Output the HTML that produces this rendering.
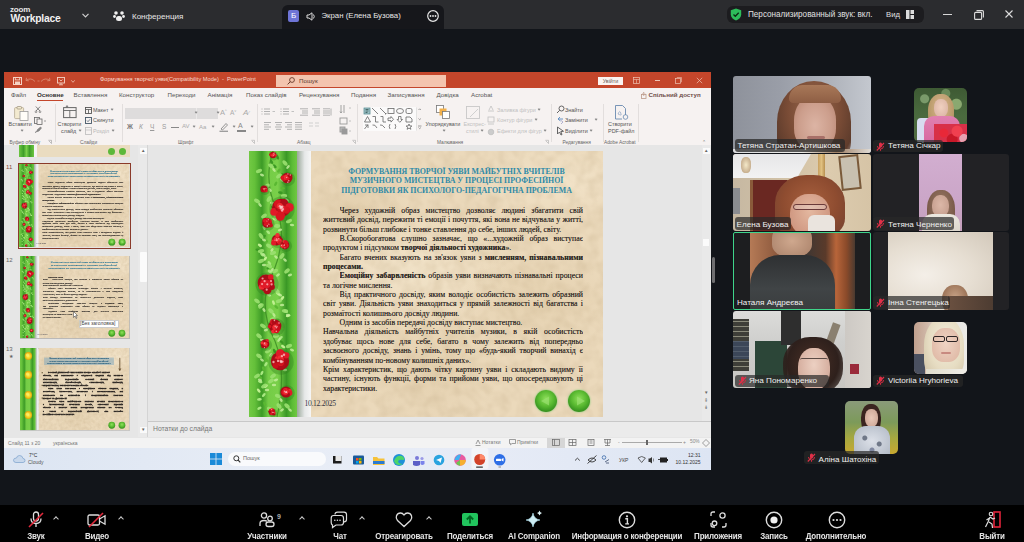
<!DOCTYPE html>
<html><head><meta charset="utf-8">
<style>
*{margin:0;padding:0;box-sizing:border-box}
html,body{width:1024px;height:542px;overflow:hidden;background:#12151a;font-family:"Liberation Sans",sans-serif;position:relative}
.a{position:absolute}
.t{position:absolute;white-space:nowrap;line-height:1}
svg{position:absolute;overflow:visible}
/* zoom title bar */
#tb{left:0;top:0;width:1024px;height:29px;background:#2b2c2f}
#tab{left:282px;top:5px;width:162px;height:24px;background:#16171b;border-radius:6px 6px 0 0}
#bot{left:0;top:505px;width:1024px;height:37px;background:#000}
.bl{position:absolute;top:531.5px;width:160px;text-align:center;color:#e6e6e6;font-size:9px;letter-spacing:-0.2px;font-weight:bold;transform:scaleX(0.885);white-space:nowrap;line-height:1}
.car{position:absolute;top:517px;width:4px;height:4px;border-left:1.3px solid #ccc;border-top:1.3px solid #ccc;transform:rotate(45deg)}
.nm{font-size:8.1px;color:#f0f0f0}
.mic{position:absolute;width:9px;height:10px}
.mic::before{content:"";position:absolute;left:3px;top:0;width:3.5px;height:6px;border-radius:2px;background:#e0304a}
.mic::after{content:"";position:absolute;left:0;top:4px;width:9px;height:1.3px;background:#e0304a;transform:rotate(-55deg)}
.tab{position:absolute;top:92.3px;font-size:6.2px;color:#555;white-space:nowrap;line-height:1}
.rl{position:absolute;font-size:5.45px;color:#555;white-space:nowrap;line-height:1}
.gl{position:absolute;top:141.3px;font-size:4.8px;color:#666;white-space:nowrap;line-height:1}
.cv{display:inline-block;width:2.2px;height:2.2px;border-right:0.6px solid #8a8a8a;border-bottom:0.6px solid #8a8a8a;transform:rotate(45deg);margin-left:2.5px;vertical-align:1.5px}
.sep{position:absolute;top:104px;width:1px;height:38px;background:#e2dedd}
.slide{position:absolute;width:354px;height:266px;overflow:hidden}
.thumb{position:absolute;width:354px;height:266px;overflow:hidden;transform-origin:0 0}
.ttl1{position:absolute;left:61px;width:293px;text-align:center;font-family:"Liberation Serif",serif;font-weight:bold;font-size:7.87px;color:#2e8aa8;white-space:nowrap;line-height:1;padding-left:0}
.bl1{position:absolute;font-family:"Liberation Serif",serif;font-size:7.8px;color:#2a2522;text-shadow:0 0 0.5px rgba(40,35,30,0.6);white-space:nowrap;line-height:1}
.thumb .bl1{-webkit-text-stroke:0.35px #3a3532}
.thumb .ttl1{-webkit-text-stroke:0.4px #2a6a8a}
.t13 .bl1{-webkit-text-stroke:0.9px #2a2522}
.bl1.j{text-align:justify;text-align-last:justify;white-space:normal;height:9px;overflow:hidden}
</style></head><body>
<!-- ============ ZOOM TITLE BAR ============ -->
<div id="tb" class="a"></div>
<div class="t" style="left:10px;top:6px;font-size:8px;color:#e8e8e8;font-weight:bold;letter-spacing:-0.2px">zoom</div>
<div class="t" style="left:10.5px;top:13.5px;font-size:10.3px;color:#f2f2f2;font-weight:bold;letter-spacing:-0.2px">Workplace</div>
<svg style="left:82px;top:13px" width="7" height="5"><path d="M0.5 0.8 L3.5 3.8 L6.5 0.8" stroke="#cfcfcf" stroke-width="1.2" fill="none"/></svg>
<svg style="left:113px;top:10px" width="12" height="12"><circle cx="3" cy="3" r="1.8" fill="#f0f0f0"/><circle cx="9" cy="3" r="1.8" fill="#f0f0f0"/><circle cx="1.5" cy="6.5" r="1.4" fill="#f0f0f0"/><circle cx="10.5" cy="6.5" r="1.4" fill="#f0f0f0"/><rect x="3" y="6" width="6" height="5" rx="2.5" fill="#f0f0f0"/></svg>
<div class="t" style="left:132px;top:12.7px;font-size:8px;color:#e6e6e6">Конференция</div>

<div id="tab" class="a"></div>
<div class="a" style="left:288px;top:10px;width:11px;height:12px;background:#6e74d6;border-radius:2px;color:#fff;font-size:8px;text-align:center;line-height:12px">Б</div>
<svg style="left:306px;top:12px" width="10" height="9"><path d="M1 3 H3 L6 0.8 V8.2 L3 6 H1 Z" stroke="#ddd" stroke-width="1" fill="none"/><path d="M7.5 2.5 Q9 4.5 7.5 6.5" stroke="#ddd" stroke-width="1" fill="none"/></svg>
<div class="t" style="left:321.5px;top:12px;font-size:7.8px;color:#e6e6e6">Экран (Елена Бузова)</div>
<svg style="left:427px;top:10px" width="12" height="12"><circle cx="6" cy="6" r="5.3" stroke="#e6e6e6" stroke-width="1.2" fill="none"/><circle cx="3.5" cy="6" r="0.9" fill="#e6e6e6"/><circle cx="6" cy="6" r="0.9" fill="#e6e6e6"/><circle cx="8.5" cy="6" r="0.9" fill="#e6e6e6"/></svg>

<div class="a" style="left:727px;top:6px;width:197px;height:17px;background:#1c1c1f;border-radius:6px"></div>
<svg style="left:730px;top:8px" width="12" height="13"><path d="M6 0.5 L11.2 2.3 V6.5 C11.2 9.5 8.8 11.5 6 12.5 C3.2 11.5 0.8 9.5 0.8 6.5 V2.3 Z" fill="#2dbd5a"/><path d="M3.5 6.5 L5.3 8.3 L8.7 4.7" stroke="#0c2a14" stroke-width="1.3" fill="none"/></svg>
<div class="t" style="left:748px;top:11px;font-size:8.15px;color:#e0e0e0">Персонализированный звук: вкл.</div>
<div class="t" style="left:886px;top:11px;font-size:7.7px;color:#e0e0e0">Вид</div>
<svg style="left:906px;top:10px" width="8" height="9"><rect x="0" y="0" width="3.5" height="9" fill="#ddd"/><rect x="4.5" y="0" width="3.5" height="4" fill="#ddd"/><rect x="4.5" y="5" width="3.5" height="4" fill="#ddd"/></svg>
<div class="a" style="left:943px;top:14px;width:9px;height:1px;background:#d8d8d8"></div>
<svg style="left:974px;top:10px" width="10" height="10"><rect x="0.6" y="2.4" width="7" height="7" rx="1" stroke="#ddd" stroke-width="1.1" fill="none"/><path d="M2.5 0.6 H8.4 Q9.4 0.6 9.4 1.6 V7.5" stroke="#ddd" stroke-width="1.1" fill="none"/></svg>
<svg style="left:1005px;top:10px" width="8" height="8"><path d="M0.5 0.5 L7.5 7.5 M7.5 0.5 L0.5 7.5" stroke="#ddd" stroke-width="1.1"/></svg>

<!-- ============ POWERPOINT ============ -->
<div class="a" style="left:4px;top:72px;width:707px;height:398px;background:#e6e6e6;overflow:hidden"></div>
<!-- title bar -->
<div class="a" style="left:4px;top:72px;width:707px;height:16px;background:#c4462b"></div>
<svg style="left:13px;top:77px" width="9" height="8"><rect x="0.5" y="0.5" width="8" height="7" fill="none" stroke="#f6d2c4" stroke-width="1"/><rect x="2.3" y="0.5" width="4.4" height="2.4" fill="none" stroke="#f6d2c4" stroke-width="0.9"/><rect x="2" y="4.5" width="5" height="3" fill="#f6d2c4"/></svg>
<svg style="left:25px;top:77px" width="26" height="8"><path d="M1 3.5 Q6 0 10 4.5 M1 3.5 L1.5 0.8 M1 3.5 L3.8 3.8" stroke="#d98a72" stroke-width="0.9" fill="none"/><path d="M12.5 4 H14.5" stroke="#d98a72" stroke-width="0.8"/><path d="M25 3.5 Q20 0 16 4.5 M25 3.5 L24.5 0.8 M25 3.5 L22.2 3.8" stroke="#d98a72" stroke-width="0.9" fill="none"/></svg>
<svg style="left:57px;top:77px" width="8" height="8"><rect x="0.5" y="0.5" width="7" height="5.5" fill="none" stroke="#f6d2c4" stroke-width="0.9"/><path d="M2.5 2.5 L4 4 L5.5 2.5 M4 6 V7.8 M2 7.8 H6" stroke="#f6d2c4" stroke-width="0.8" fill="none"/></svg>
<svg style="left:71px;top:80px" width="4" height="3"><path d="M0.3 0.3 L2 2.3 L3.7 0.3" stroke="#f0c0ae" stroke-width="0.8" fill="none"/></svg>
<div class="t" id="ttl" style="left:100px;top:77.3px;font-size:5.65px;color:#f8dbcf">Формування творчої уяви(Compatibility Mode)&nbsp; - &nbsp;PowerPoint</div>
<div class="a" style="left:276px;top:75px;width:170px;height:12px;background:#f4c4ae"></div>
<svg style="left:287px;top:77px" width="8" height="8"><circle cx="5" cy="3" r="2.4" fill="none" stroke="#6a3a2a" stroke-width="0.9"/><path d="M3.3 4.7 L0.6 7.4" stroke="#6a3a2a" stroke-width="1"/></svg>
<div class="t" style="left:299px;top:78px;font-size:6.2px;color:#5a3a30">Пошук</div>
<div class="a" style="left:598px;top:77px;width:25px;height:8px;background:#fbf4f1"></div>
<div class="t" style="left:598px;top:78.5px;width:25px;text-align:center;font-size:5.4px;color:#6a5a55">Увійти</div>
<svg style="left:633px;top:77px" width="7" height="7"><rect x="0.5" y="0.5" width="6" height="6" fill="none" stroke="#efc4b4" stroke-width="0.7"/><path d="M0.5 2.5 H6.5 M3.5 2.5 V6.5" stroke="#efc4b4" stroke-width="0.6"/></svg>
<div class="a" style="left:655px;top:80px;width:5px;height:0.8px;background:#efc4b4"></div>
<svg style="left:675px;top:77px" width="7" height="7"><rect x="0.5" y="1.5" width="5" height="5" fill="none" stroke="#efc4b4" stroke-width="0.7"/><path d="M1.8 0.5 H6.5 V5.2" stroke="#efc4b4" stroke-width="0.6" fill="none"/></svg>
<svg style="left:696px;top:77px" width="7" height="7"><path d="M0.8 0.8 L6.2 6.2 M6.2 0.8 L0.8 6.2" stroke="#efc4b4" stroke-width="0.7"/></svg>
<!-- tab row + ribbon -->
<div class="a" style="left:4px;top:88px;width:707px;height:57px;background:#f6f2f1"></div>
<div class="tab" style="left:11px">Файл</div>
<div class="tab" style="left:37px;font-weight:bold;color:#333">Основне</div>
<div class="a" style="left:37px;top:100px;width:26px;height:1.3px;background:#c4462b"></div>
<div class="tab" style="left:73.5px">Вставлення</div>
<div class="tab" style="left:119px">Конструктор</div>
<div class="tab" style="left:167.5px">Переходи</div>
<div class="tab" style="left:207.5px">Анімація</div>
<div class="tab" style="left:246px">Показ слайдів</div>
<div class="tab" style="left:299px">Рецензування</div>
<div class="tab" style="left:351px">Подання</div>
<div class="tab" style="left:387.5px">Записування</div>
<div class="tab" style="left:436.5px">Довідка</div>
<div class="tab" style="left:471px">Acrobat</div>
<svg style="left:641px;top:92px" width="6" height="7"><rect x="0.5" y="2.5" width="4.5" height="4" fill="none" stroke="#b98" stroke-width="0.8"/><path d="M2.7 4 V0.5 M1.5 1.6 L2.7 0.4 L3.9 1.6" stroke="#b98" stroke-width="0.7" fill="none"/></svg>
<div class="tab" style="left:648.5px;font-weight:bold;color:#6e4e4a">Спільний доступ</div>
<!-- ribbon body -->
<!-- clipboard group -->
<svg style="left:14px;top:106px" width="15" height="15"><rect x="0.6" y="1.6" width="9" height="11" rx="1" fill="#f3ead0" stroke="#b5a890" stroke-width="0.8"/><rect x="3" y="0.5" width="4.5" height="2.5" rx="0.8" fill="#f3ead0" stroke="#9a8e78" stroke-width="0.7"/><rect x="6" y="5.5" width="8" height="9" fill="#fffdf8" stroke="#9a9a9a" stroke-width="0.8"/></svg>
<div class="rl" style="left:8.5px;top:121.5px">Вставити</div>
<div class="rl" style="left:18.5px;top:128.5px"><i class="cv"></i></div>
<svg style="left:35px;top:106px" width="6" height="7"><path d="M0.8 0.5 L5 5 M5.2 0.5 L1 5" stroke="#666" stroke-width="0.8"/><circle cx="1" cy="5.8" r="0.9" fill="none" stroke="#666" stroke-width="0.6"/><circle cx="5" cy="5.8" r="0.9" fill="none" stroke="#666" stroke-width="0.6"/></svg>
<svg style="left:34px;top:117px" width="13" height="8"><rect x="0.5" y="0.5" width="5" height="6" fill="none" stroke="#666" stroke-width="0.8"/><rect x="3" y="2" width="5" height="5.5" fill="#f6f2f1" stroke="#666" stroke-width="0.8"/><path d="M10 4 H12" stroke="#777" stroke-width="0.7"/></svg>
<svg style="left:34px;top:126px" width="8" height="7"><path d="M1 6.5 Q3 6 3.5 3.5 L6.5 1 L7.5 2 L5 5 Q2.5 5.5 1 6.5Z" fill="#8a8a8a" stroke="#666" stroke-width="0.5"/></svg>
<div class="gl" style="left:9.5px">Буфер обміну</div>
<svg style="left:48px;top:140px" width="4" height="4"><path d="M0.3 0.3 H3.5 V3.5 M1 1 L3.5 3.5" stroke="#999" stroke-width="0.6" fill="none"/></svg>
<div class="sep" style="left:54.5px"></div>
<!-- slides group -->
<svg style="left:63px;top:105px" width="14" height="13"><rect x="0.6" y="2.6" width="12.5" height="10" fill="none" stroke="#666" stroke-width="1"/><path d="M0.6 5.5 H13 M6.8 5.5 V12.6" stroke="#666" stroke-width="0.9"/><path d="M4 0.2 V2.6 M2.8 1.4 H5.2" stroke="#666" stroke-width="0.7"/></svg>
<div class="rl" style="left:57.5px;top:121.5px">Створити</div>
<div class="rl" style="left:61px;top:128.5px">слайд<i class="cv"></i></div>
<svg style="left:85px;top:107px" width="7" height="7"><rect x="0.5" y="0.5" width="6" height="6" fill="none" stroke="#555" stroke-width="0.9"/><path d="M0.5 2.5 H6.5 M3.5 2.5 V6.5" stroke="#555" stroke-width="0.8"/></svg>
<div class="rl" style="left:93px;top:107.5px">Макет<i class="cv"></i></div>
<svg style="left:85px;top:117px" width="7" height="7"><rect x="0.5" y="0.5" width="6" height="6" fill="none" stroke="#456" stroke-width="0.9"/><path d="M2 3.5 L3 4.7 L5 2.3" stroke="#456" stroke-width="0.7" fill="none"/></svg>
<div class="rl" style="left:93px;top:117.5px">Скинути</div>
<svg style="left:85px;top:127px" width="7" height="8"><rect x="0.5" y="0.5" width="6" height="7" fill="none" stroke="#bbb" stroke-width="0.8"/><path d="M0.5 3 H6.5" stroke="#bbb" stroke-width="0.7"/></svg>
<div class="rl" style="left:93px;top:128.5px;color:#b8b8b8">Розділ<i class="cv"></i></div>
<div class="gl" style="left:80px">Слайди</div>
<div class="sep" style="left:122px"></div>
<!-- font group -->
<div class="a" style="left:125px;top:107.5px;width:93px;height:11px;background:#dedcdc"></div>
<div class="a" style="left:196px;top:107.5px;width:1px;height:11px;background:#ebe9e9"></div>
<div class="t" style="left:192px;top:111px;font-size:4px;color:#aaa"><i class="cv"></i></div>
<div class="t" style="left:214px;top:111px;font-size:4px;color:#aaa"><i class="cv"></i></div>
<div class="t" style="left:220px;top:109px;font-size:7.5px;color:#aaa">A<sup style="font-size:3.5px">^</sup></div>
<div class="t" style="left:230px;top:110px;font-size:6.5px;color:#aaa">A<sup style="font-size:3.5px">˅</sup></div>
<div class="t" style="left:243px;top:108.5px;font-size:8px;color:#aaa;font-style:italic">A<span style="font-size:5px">⁄</span></div>
<div class="t" style="left:127px;top:124px;font-size:6.5px;color:#777;font-weight:bold">Ж</div>
<div class="t" style="left:139px;top:124px;font-size:6.5px;color:#999;font-style:italic">К</div>
<div class="t" style="left:150px;top:124px;font-size:6.5px;color:#999;text-decoration:underline">Ч</div>
<div class="t" style="left:162px;top:124px;font-size:6.5px;color:#999">S</div>
<div class="a" style="left:171px;top:127px;width:8px;height:1px;background:#888"></div>
<div class="t" style="left:182px;top:123px;font-size:6px;color:#aaa">AV</div>
<div class="t" style="left:190.5px;top:125px;font-size:4px;color:#aaa"><i class="cv"></i></div>
<div class="t" style="left:199px;top:124px;font-size:6px;color:#aaa">Aa</div>
<div class="t" style="left:209px;top:125px;font-size:4px;color:#aaa"><i class="cv"></i></div>
<svg style="left:219px;top:122px" width="10" height="10"><path d="M2 7 L7 1.5 L8.5 3 L3.5 8 Z" fill="none" stroke="#888" stroke-width="0.9"/><path d="M0.5 9.3 H9" stroke="#999" stroke-width="1.3"/></svg>
<div class="t" style="left:230px;top:125px;font-size:4px;color:#aaa"><i class="cv"></i></div>
<div class="t" style="left:238px;top:122px;font-size:7px;color:#888">A</div>
<div class="a" style="left:237px;top:130px;width:9px;height:1.5px;background:#888"></div>
<div class="t" style="left:248px;top:125px;font-size:4px;color:#aaa"><i class="cv"></i></div>
<div class="gl" style="left:178px">Шрифт</div>
<svg style="left:251px;top:140px" width="4" height="4"><path d="M0.3 0.3 H3.5 V3.5 M1 1 L3.5 3.5" stroke="#aaa" stroke-width="0.6" fill="none"/></svg>
<div class="sep" style="left:257px"></div>
<!-- paragraph -->
<svg style="left:261px;top:108px" width="80" height="24" stroke="#aaa" stroke-width="0.9" fill="none">
<path d="M0.5 1 h1 M3 1 h6 M0.5 3.5 h1 M3 3.5 h6 M0.5 6 h1 M3 6 h6"/>
<path d="M11.5 3.5 h2.5" stroke="#bbb"/>
<path d="M19.5 1 h1 M22 1 h6 M19.5 3.5 h1 M22 3.5 h6 M19.5 6 h1 M22 6 h6"/>
<path d="M30.5 3.5 h2.5" stroke="#bbb"/>
<path d="M39 0.8 h8 M41 3 h6 M41 5 h6 M39 7.2 h8"/>
<path d="M51 0.8 h8 M53 3 h6 M53 5 h6 M51 7.2 h8"/>
<path d="M62 0.8 h7 M62 3 h7 M62 5 h7 M62 7.2 h7 M70 0.5 v7"/>
<path d="M3 14.5 h7 M3 16.8 h5 M3 19 h7 M3 21.3 h5"/>
<path d="M14 14.5 h7 M15 16.8 h5 M14 19 h7 M15 21.3 h5"/>
<path d="M24 14.5 h7 M26 16.8 h5 M24 19 h7 M26 21.3 h5"/>
<path d="M34 14.5 h7 M34 16.8 h7 M34 19 h7 M34 21.3 h7"/>
<path d="M48 15 h4 M54 15 h4 M48 18 h4 M54 18 h4" stroke="#ccc"/>
</svg>
<svg style="left:339px;top:104px" width="15" height="30" stroke="#999" stroke-width="0.9" fill="none">
<path d="M2 1 v8 M5 1 v8 M1 7.5 L2 9 L3 7.5"/><path d="M10 4 h2" stroke="#bbb"/>
<rect x="1" y="14" width="7" height="6"/><path d="M10 17 h2" stroke="#bbb"/>
<rect x="1" y="23" width="5" height="5" fill="#bbb"/><rect x="3" y="25" width="5" height="5" fill="#999"/><path d="M10 27 h2" stroke="#bbb"/>
</svg>
<div class="gl" style="left:297px">Абзац</div>
<svg style="left:352px;top:140px" width="4" height="4"><path d="M0.3 0.3 H3.5 V3.5 M1 1 L3.5 3.5" stroke="#aaa" stroke-width="0.6" fill="none"/></svg>
<div class="sep" style="left:357px"></div>
<!-- drawing -->
<div class="a" style="left:362.5px;top:107px;width:53.5px;height:24px;background:#fbfafa"></div>
<svg style="left:363px;top:107px" width="60" height="24" stroke="#666" stroke-width="0.8" fill="none">
<rect x="1" y="1" width="6" height="6" fill="#9fc4c8" stroke="#5a8a90"/><path d="M2.5 2.5 h3 M2.5 4 h3 M2.5 5.5 h2" stroke="#355"/>
<path d="M9 1 L15 7 M17 1 L23 7 M22 7 l1 0 l0 -1"/>
<rect x="25" y="1.5" width="6" height="5"/><ellipse cx="37" cy="4" rx="3.5" ry="2.5"/><rect x="43" y="1.5" width="6" height="5" rx="1.5"/>
<path d="M1.5 15 L4.5 9.5 L7.5 15 Z M9.5 9.5 h3 v5.5 h3 M17.5 9.5 h2.5 v5.5 h3 M25 11 h3 v-1.5 l2.5 2.8 l-2.5 2.8 v-1.5 h-3 Z M35.5 9.5 h2.5 v3 h1.5 l-2.7 2.8 l-2.7 -2.8 h1.4 Z M43 10 h4 l2 2 v3 h-6 Z"/>
<path d="M1.5 22 L5 17.5 M2 18 h3 v3 M9.5 18 Q12 17 14 21 M17 18 Q19 17 22 21 M27 17 Q25.5 19.5 27 22 M32 17 Q33.5 19.5 32 22 M46 17 l0.9 2 h2 l-1.6 1.3 l0.6 2 l-1.9 -1.2 l-1.9 1.2 l0.6 -2 l-1.6 -1.3 h2 Z"/>
<path d="M55.5 3 l1.2 -1.2 l1.2 1.2 M55.5 11.5 l1.2 1.2 l1.2 -1.2 M55 19 h3.5 M55.5 20.5 l1.2 1.2 l1.2 -1.2" stroke="#888"/>
<path d="M53.5 0.5 v23" stroke="#ddd"/>
</svg>
<svg style="left:436px;top:105px" width="14" height="14"><rect x="0.5" y="0.5" width="7" height="7" fill="#fff" stroke="#777" stroke-width="0.8"/><rect x="3.5" y="3.5" width="7" height="7" fill="#f2b04a"/><rect x="6.5" y="6.5" width="7" height="7" fill="#fff" stroke="#777" stroke-width="0.8"/></svg>
<div class="rl" style="left:425.5px;top:121.5px">Упорядкувати</div>
<div class="rl" style="left:440px;top:128.5px"><i class="cv"></i></div>
<svg style="left:466px;top:106px" width="14" height="13"><rect x="0.5" y="0.5" width="13" height="12" fill="none" stroke="#c8c8c8" stroke-width="0.9"/><path d="M4 11 L12 3" stroke="#ccc" stroke-width="0.9"/></svg>
<div class="rl" style="left:463.5px;top:121.5px;color:#c0c0c0">Експрес-</div>
<div class="rl" style="left:466px;top:128.5px;color:#c0c0c0">стилі<i class="cv"></i></div>
<svg style="left:487px;top:105px" width="8" height="30" stroke="#c0c0c0" stroke-width="0.8" fill="none"><path d="M1 6 h6 M2 5 l2 -4 l2 4"/><rect x="1" y="12" width="6" height="5"/><path d="M1 19 h6"/><circle cx="4" cy="27" r="2.8" fill="#ccc"/></svg>
<div class="rl" style="left:497px;top:107.5px;color:#c0c0c0">Заливка фігури<i class="cv"></i></div>
<div class="rl" style="left:497px;top:117.5px;color:#c0c0c0">Контур фігури<i class="cv"></i></div>
<div class="rl" style="left:497px;top:128.5px;color:#c0c0c0">Ефекти для фігур<i class="cv"></i></div>
<div class="gl" style="left:437px">Малювання</div>
<svg style="left:545px;top:140px" width="4" height="4"><path d="M0.3 0.3 H3.5 V3.5 M1 1 L3.5 3.5" stroke="#aaa" stroke-width="0.6" fill="none"/></svg>
<div class="sep" style="left:550.5px"></div>
<!-- editing -->
<svg style="left:556px;top:105px" width="9" height="30" fill="none" stroke-width="0.9">
<circle cx="5.5" cy="3.5" r="2.5" stroke="#555"/><path d="M3.7 5.3 L1 8" stroke="#555"/>
<path d="M4 12 L2 14 L4.5 16 M2 14 h5" stroke="#5a8ac0"/><path d="M5 19 L7 17 L4.5 15" stroke="#aac"/>
<path d="M1.5 22 L1.5 29 L3.5 27 L5 30 L6 29.5 L4.8 26.5 L7.5 26.3 Z" stroke="#555"/>
</svg>
<div class="rl" style="left:565px;top:107.5px">Знайти</div>
<div class="rl" style="left:565px;top:117.5px">Замінити <i class="cv" style="margin-left:6px"></i></div>
<div class="rl" style="left:565px;top:128.5px">Виділити<i class="cv"></i></div>
<div class="gl" style="left:562.5px">Редагування</div>
<div class="sep" style="left:602.5px"></div>
<!-- acrobat -->
<svg style="left:615px;top:105px" width="14" height="15"><path d="M0.5 0.5 H7.5 L10.5 3.5 V10 M0.5 0.5 V14 H7" fill="none" stroke="#6a8ab0" stroke-width="0.9"/><path d="M3 9 Q5 4 6 9 Q7 11 3 9" fill="none" stroke="#8aa0c0" stroke-width="0.7"/><circle cx="10.5" cy="12" r="2.3" fill="none" stroke="#6a8ab0" stroke-width="0.8"/></svg>
<div class="rl" style="left:608px;top:121.5px">Створити</div>
<div class="rl" style="left:608px;top:128.5px">PDF-файл</div>
<div class="gl" style="left:604px">Adobe Acrobat</div>
<div class="sep" style="left:638px"></div>
<div class="t" style="left:702px;top:140px;font-size:5px;color:#777">⌃</div>

<!-- slide panel -->
<div class="a" style="left:4px;top:145px;width:134px;height:292px;background:#e6e6e6"></div>
<div class="a" style="left:138px;top:145px;width:9px;height:292px;background:#e9e9e9"></div>
<div class="a" style="left:147px;top:145px;width:1px;height:292px;background:#d4d4d4"></div>
<div class="a" style="left:139.5px;top:148px;width:7px;height:6px;background:#fafafa"></div>
<div class="t" style="left:141px;top:148.5px;font-size:4.5px;color:#666">▲</div>
<div class="a" style="left:139.5px;top:252px;width:7px;height:30px;background:#fbfbfb;border-radius:1px"></div>
<div class="a" style="left:139.5px;top:427px;width:7px;height:6px;background:#fafafa"></div>
<div class="t" style="left:141px;top:428px;font-size:4.5px;color:#666">▼</div>
<!-- thumb 10 (partial) -->
<div class="a" style="left:19px;top:145px;width:111px;height:12px;overflow:hidden;background:#eadcc0">
  <div class="a" style="left:0;top:0;width:15px;height:17px;background:linear-gradient(90deg,#6cc641,#3f9e2a 30%,#7ad04a 50%,#3f9e2a 70%,#6cc641)"></div>
  <div class="a" style="left:15px;top:0;width:3px;height:17px;background:#f4f4f4"></div>
  <div class="a" style="left:89px;top:3px;width:7px;height:7px;border-radius:50%;background:#5cb83a"></div>
  <div class="a" style="left:100px;top:3px;width:7px;height:7px;border-radius:50%;background:#5cb83a"></div>
</div>
<div class="t" style="left:6px;top:164px;font-size:6px;color:#8a4a3a">11</div>
<div class="a" style="left:18px;top:163px;width:113px;height:86px;border:1.3px solid #8a3a2a"></div>
<div class="thumb" style="left:19.3px;top:164.3px;transform:scale(0.3125)"><div class="a" style="left:0;top:0;width:354px;height:266px;overflow:hidden"><div class="a" style="left:61px;top:0;width:293px;height:266px;background:radial-gradient(ellipse 60px 40px at 40px 60px,rgba(200,175,130,0.25),transparent),radial-gradient(ellipse 80px 50px at 230px 150px,rgba(205,180,135,0.22),transparent),radial-gradient(ellipse 70px 60px at 120px 220px,rgba(200,175,130,0.2),transparent),radial-gradient(ellipse 90px 40px at 250px 30px,rgba(255,245,225,0.35),transparent),radial-gradient(ellipse 100px 60px at 100px 120px,rgba(255,248,230,0.3),transparent),#ebd9bb"></div><svg style="left:61px;top:0" width="293" height="266"><filter id="pn" x="0" y="0" width="100%" height="100%"><feTurbulence type="fractalNoise" baseFrequency="0.09" numOctaves="2" seed="3"/><feColorMatrix values="0 0 0 0 0.55  0 0 0 0 0.42  0 0 0 0 0.25  0 0 0 -1.6 1.05"/></filter><rect width="293" height="266" filter="url(#pn)" opacity="0.35"/></svg><svg style="left:0;top:0" width="62" height="266"><defs><linearGradient id="gs" x1="0" x2="1" y1="0" y2="0"><stop offset="0" stop-color="#72c944"/><stop offset="0.12" stop-color="#64c03a"/><stop offset="0.27" stop-color="#3c9a26"/><stop offset="0.4" stop-color="#74cc46"/><stop offset="0.6" stop-color="#7ad04a"/><stop offset="0.78" stop-color="#3a9826"/><stop offset="0.9" stop-color="#5cbc36"/><stop offset="1" stop-color="#70c842"/></linearGradient><linearGradient id="gsh" x1="0" x2="1" y1="0" y2="0"><stop offset="0" stop-color="#9aa89a"/><stop offset="0.55" stop-color="#e6e8e8"/><stop offset="1" stop-color="#f6f6f6"/></linearGradient><radialGradient id="rf"><stop offset="0" stop-color="#ff5a5a"/><stop offset="0.5" stop-color="#d81a22"/><stop offset="1" stop-color="#a01018"/></radialGradient><radialGradient id="yf"><stop offset="0" stop-color="#fff060"/><stop offset="0.6" stop-color="#f4d020"/><stop offset="1" stop-color="#d8a010"/></radialGradient></defs><rect x="0" y="0" width="48" height="266" fill="url(#gs)"/><rect x="48" y="0" width="14" height="266" fill="url(#gsh)"/><path d="M24 0 Q14 30 28 60 Q40 90 20 130 Q10 160 26 190 Q38 220 28 266" stroke="#3a8a22" stroke-width="1.2" fill="none" opacity="0.8"/><ellipse cx="22.4" cy="2.0" rx="2.4" ry="1.3" fill="#5ab832" transform="rotate(31 22.4 2.0)"/><ellipse cx="28.7" cy="6.4" rx="2.4" ry="1.3" fill="#3c9a24" transform="rotate(67 28.7 6.4)"/><ellipse cx="22.6" cy="10.8" rx="2.4" ry="1.3" fill="#3c9a24" transform="rotate(59 22.6 10.8)"/><ellipse cx="25.7" cy="15.2" rx="2.4" ry="1.3" fill="#3c9a24" transform="rotate(41 25.7 15.2)"/><ellipse cx="29.9" cy="19.6" rx="2.4" ry="1.3" fill="#5ab832" transform="rotate(-47 29.9 19.6)"/><ellipse cx="32.7" cy="24.0" rx="2.4" ry="1.3" fill="#3c9a24" transform="rotate(-39 32.7 24.0)"/><ellipse cx="38.9" cy="28.4" rx="2.4" ry="1.3" fill="#3c9a24" transform="rotate(31 38.9 28.4)"/><ellipse cx="26.7" cy="32.8" rx="2.4" ry="1.3" fill="#5ab832" transform="rotate(-59 26.7 32.8)"/><ellipse cx="33.7" cy="37.2" rx="2.4" ry="1.3" fill="#5ab832" transform="rotate(4 33.7 37.2)"/><ellipse cx="31.4" cy="41.6" rx="2.4" ry="1.3" fill="#3c9a24" transform="rotate(8 31.4 41.6)"/><ellipse cx="32.7" cy="46.0" rx="2.4" ry="1.3" fill="#5ab832" transform="rotate(-44 32.7 46.0)"/><ellipse cx="31.9" cy="50.4" rx="2.4" ry="1.3" fill="#5ab832" transform="rotate(25 31.9 50.4)"/><ellipse cx="23.8" cy="54.8" rx="2.4" ry="1.3" fill="#3c9a24" transform="rotate(-55 23.8 54.8)"/><ellipse cx="29.6" cy="59.2" rx="2.4" ry="1.3" fill="#c0f090" transform="rotate(66 29.6 59.2)"/><ellipse cx="25.2" cy="63.6" rx="2.4" ry="1.3" fill="#a8e880" transform="rotate(49 25.2 63.6)"/><ellipse cx="25.7" cy="68.0" rx="2.4" ry="1.3" fill="#c0f090" transform="rotate(22 25.7 68.0)"/><ellipse cx="19.9" cy="72.4" rx="2.4" ry="1.3" fill="#5ab832" transform="rotate(-8 19.9 72.4)"/><ellipse cx="15.1" cy="76.8" rx="2.4" ry="1.3" fill="#a8e880" transform="rotate(64 15.1 76.8)"/><ellipse cx="19.2" cy="81.2" rx="2.4" ry="1.3" fill="#a8e880" transform="rotate(44 19.2 81.2)"/><ellipse cx="14.9" cy="85.6" rx="2.4" ry="1.3" fill="#3c9a24" transform="rotate(-40 14.9 85.6)"/><ellipse cx="16.8" cy="90.0" rx="2.4" ry="1.3" fill="#5ab832" transform="rotate(17 16.8 90.0)"/><ellipse cx="10.9" cy="94.4" rx="2.4" ry="1.3" fill="#c0f090" transform="rotate(37 10.9 94.4)"/><ellipse cx="8.8" cy="98.8" rx="2.4" ry="1.3" fill="#3c9a24" transform="rotate(10 8.8 98.8)"/><ellipse cx="12.8" cy="103.2" rx="2.4" ry="1.3" fill="#a8e880" transform="rotate(57 12.8 103.2)"/><ellipse cx="16.3" cy="107.6" rx="2.4" ry="1.3" fill="#c0f090" transform="rotate(-53 16.3 107.6)"/><ellipse cx="20.4" cy="112.0" rx="2.4" ry="1.3" fill="#a8e880" transform="rotate(51 20.4 112.0)"/><ellipse cx="19.2" cy="116.4" rx="2.4" ry="1.3" fill="#3c9a24" transform="rotate(-55 19.2 116.4)"/><ellipse cx="20.8" cy="120.8" rx="2.4" ry="1.3" fill="#a8e880" transform="rotate(44 20.8 120.8)"/><ellipse cx="16.0" cy="125.2" rx="2.4" ry="1.3" fill="#c0f090" transform="rotate(18 16.0 125.2)"/><ellipse cx="13.9" cy="129.6" rx="2.4" ry="1.3" fill="#c0f090" transform="rotate(20 13.9 129.6)"/><ellipse cx="17.6" cy="134.0" rx="2.4" ry="1.3" fill="#3c9a24" transform="rotate(56 17.6 134.0)"/><ellipse cx="17.9" cy="138.4" rx="2.4" ry="1.3" fill="#a8e880" transform="rotate(-37 17.9 138.4)"/><ellipse cx="29.2" cy="142.8" rx="2.4" ry="1.3" fill="#c0f090" transform="rotate(30 29.2 142.8)"/><ellipse cx="33.4" cy="147.2" rx="2.4" ry="1.3" fill="#c0f090" transform="rotate(-50 33.4 147.2)"/><ellipse cx="24.5" cy="151.6" rx="2.4" ry="1.3" fill="#c0f090" transform="rotate(70 24.5 151.6)"/><ellipse cx="27.4" cy="156.0" rx="2.4" ry="1.3" fill="#5ab832" transform="rotate(40 27.4 156.0)"/><ellipse cx="36.7" cy="160.4" rx="2.4" ry="1.3" fill="#a8e880" transform="rotate(36 36.7 160.4)"/><ellipse cx="39.2" cy="164.8" rx="2.4" ry="1.3" fill="#c0f090" transform="rotate(-11 39.2 164.8)"/><ellipse cx="28.0" cy="169.2" rx="2.4" ry="1.3" fill="#5ab832" transform="rotate(-32 28.0 169.2)"/><ellipse cx="29.2" cy="173.6" rx="2.4" ry="1.3" fill="#5ab832" transform="rotate(-67 29.2 173.6)"/><ellipse cx="32.5" cy="178.0" rx="2.4" ry="1.3" fill="#5ab832" transform="rotate(-3 32.5 178.0)"/><ellipse cx="29.1" cy="182.4" rx="2.4" ry="1.3" fill="#5ab832" transform="rotate(37 29.1 182.4)"/><ellipse cx="31.7" cy="186.8" rx="2.4" ry="1.3" fill="#a8e880" transform="rotate(-38 31.7 186.8)"/><ellipse cx="32.7" cy="191.2" rx="2.4" ry="1.3" fill="#3c9a24" transform="rotate(46 32.7 191.2)"/><ellipse cx="34.2" cy="195.6" rx="2.4" ry="1.3" fill="#c0f090" transform="rotate(31 34.2 195.6)"/><ellipse cx="25.5" cy="200.0" rx="2.4" ry="1.3" fill="#3c9a24" transform="rotate(53 25.5 200.0)"/><ellipse cx="27.1" cy="204.4" rx="2.4" ry="1.3" fill="#3c9a24" transform="rotate(-22 27.1 204.4)"/><ellipse cx="17.3" cy="208.8" rx="2.4" ry="1.3" fill="#5ab832" transform="rotate(42 17.3 208.8)"/><ellipse cx="16.9" cy="213.2" rx="2.4" ry="1.3" fill="#a8e880" transform="rotate(-57 16.9 213.2)"/><ellipse cx="14.4" cy="217.6" rx="2.4" ry="1.3" fill="#5ab832" transform="rotate(67 14.4 217.6)"/><ellipse cx="12.9" cy="222.0" rx="2.4" ry="1.3" fill="#a8e880" transform="rotate(-64 12.9 222.0)"/><ellipse cx="11.1" cy="226.4" rx="2.4" ry="1.3" fill="#5ab832" transform="rotate(26 11.1 226.4)"/><ellipse cx="11.2" cy="230.8" rx="2.4" ry="1.3" fill="#a8e880" transform="rotate(18 11.2 230.8)"/><ellipse cx="16.8" cy="235.2" rx="2.4" ry="1.3" fill="#c0f090" transform="rotate(-39 16.8 235.2)"/><ellipse cx="9.7" cy="239.6" rx="2.4" ry="1.3" fill="#c0f090" transform="rotate(49 9.7 239.6)"/><ellipse cx="14.8" cy="244.0" rx="2.4" ry="1.3" fill="#a8e880" transform="rotate(-49 14.8 244.0)"/><ellipse cx="10.4" cy="248.4" rx="2.4" ry="1.3" fill="#a8e880" transform="rotate(-3 10.4 248.4)"/><ellipse cx="15.8" cy="252.8" rx="2.4" ry="1.3" fill="#5ab832" transform="rotate(62 15.8 252.8)"/><ellipse cx="10.4" cy="257.2" rx="2.4" ry="1.3" fill="#a8e880" transform="rotate(-33 10.4 257.2)"/><ellipse cx="21.0" cy="261.6" rx="2.4" ry="1.3" fill="#3c9a24" transform="rotate(65 21.0 261.6)"/><ellipse cx="10" cy="20" rx="3.2" ry="1.9" fill="#9be070" opacity="0.9" transform="rotate(-22 10 20)"/><ellipse cx="13" cy="24" rx="2.2" ry="1.3" fill="#c8f0a0" opacity="0.8" transform="rotate(22 13 24)"/><ellipse cx="36" cy="12" rx="3.2" ry="1.9" fill="#9be070" opacity="0.9" transform="rotate(50 36 12)"/><ellipse cx="39" cy="16" rx="2.2" ry="1.3" fill="#c8f0a0" opacity="0.8" transform="rotate(-49 39 16)"/><ellipse cx="8" cy="50" rx="3.2" ry="1.9" fill="#9be070" opacity="0.9" transform="rotate(29 8 50)"/><ellipse cx="11" cy="54" rx="2.2" ry="1.3" fill="#c8f0a0" opacity="0.8" transform="rotate(48 11 54)"/><ellipse cx="40" cy="70" rx="3.2" ry="1.9" fill="#9be070" opacity="0.9" transform="rotate(-27 40 70)"/><ellipse cx="43" cy="74" rx="2.2" ry="1.3" fill="#c8f0a0" opacity="0.8" transform="rotate(6 43 74)"/><ellipse cx="12" cy="100" rx="3.2" ry="1.9" fill="#9be070" opacity="0.9" transform="rotate(-14 12 100)"/><ellipse cx="15" cy="104" rx="2.2" ry="1.3" fill="#c8f0a0" opacity="0.8" transform="rotate(56 15 104)"/><ellipse cx="38" cy="120" rx="3.2" ry="1.9" fill="#9be070" opacity="0.9" transform="rotate(-39 38 120)"/><ellipse cx="41" cy="124" rx="2.2" ry="1.3" fill="#c8f0a0" opacity="0.8" transform="rotate(-15 41 124)"/><ellipse cx="8" cy="150" rx="3.2" ry="1.9" fill="#9be070" opacity="0.9" transform="rotate(38 8 150)"/><ellipse cx="11" cy="154" rx="2.2" ry="1.3" fill="#c8f0a0" opacity="0.8" transform="rotate(-32 11 154)"/><ellipse cx="36" cy="160" rx="3.2" ry="1.9" fill="#9be070" opacity="0.9" transform="rotate(8 36 160)"/><ellipse cx="39" cy="164" rx="2.2" ry="1.3" fill="#c8f0a0" opacity="0.8" transform="rotate(9 39 164)"/><ellipse cx="10" cy="185" rx="3.2" ry="1.9" fill="#9be070" opacity="0.9" transform="rotate(39 10 185)"/><ellipse cx="13" cy="189" rx="2.2" ry="1.3" fill="#c8f0a0" opacity="0.8" transform="rotate(4 13 189)"/><ellipse cx="40" cy="195" rx="3.2" ry="1.9" fill="#9be070" opacity="0.9" transform="rotate(-18 40 195)"/><ellipse cx="43" cy="199" rx="2.2" ry="1.3" fill="#c8f0a0" opacity="0.8" transform="rotate(21 43 199)"/><ellipse cx="8" cy="225" rx="3.2" ry="1.9" fill="#9be070" opacity="0.9" transform="rotate(-32 8 225)"/><ellipse cx="11" cy="229" rx="2.2" ry="1.3" fill="#c8f0a0" opacity="0.8" transform="rotate(18 11 229)"/><ellipse cx="38" cy="255" rx="3.2" ry="1.9" fill="#9be070" opacity="0.9" transform="rotate(43 38 255)"/><ellipse cx="41" cy="259" rx="2.2" ry="1.3" fill="#c8f0a0" opacity="0.8" transform="rotate(40 41 259)"/><ellipse cx="22" cy="15" rx="3.2" ry="1.9" fill="#9be070" opacity="0.9" transform="rotate(37 22 15)"/><ellipse cx="25" cy="19" rx="2.2" ry="1.3" fill="#c8f0a0" opacity="0.8" transform="rotate(49 25 19)"/><ellipse cx="30" cy="25" rx="3.2" ry="1.9" fill="#9be070" opacity="0.9" transform="rotate(-36 30 25)"/><ellipse cx="33" cy="29" rx="2.2" ry="1.3" fill="#c8f0a0" opacity="0.8" transform="rotate(43 33 29)"/><ellipse cx="18" cy="35" rx="3.2" ry="1.9" fill="#9be070" opacity="0.9" transform="rotate(-30 18 35)"/><ellipse cx="21" cy="39" rx="2.2" ry="1.3" fill="#c8f0a0" opacity="0.8" transform="rotate(44 21 39)"/><ellipse cx="35" cy="45" rx="3.2" ry="1.9" fill="#9be070" opacity="0.9" transform="rotate(-9 35 45)"/><ellipse cx="38" cy="49" rx="2.2" ry="1.3" fill="#c8f0a0" opacity="0.8" transform="rotate(34 38 49)"/><ellipse cx="25" cy="55" rx="3.2" ry="1.9" fill="#9be070" opacity="0.9" transform="rotate(42 25 55)"/><ellipse cx="28" cy="59" rx="2.2" ry="1.3" fill="#c8f0a0" opacity="0.8" transform="rotate(-31 28 59)"/><ellipse cx="15" cy="65" rx="3.2" ry="1.9" fill="#9be070" opacity="0.9" transform="rotate(-35 15 65)"/><ellipse cx="18" cy="69" rx="2.2" ry="1.3" fill="#c8f0a0" opacity="0.8" transform="rotate(6 18 69)"/><ellipse cx="28" cy="75" rx="3.2" ry="1.9" fill="#9be070" opacity="0.9" transform="rotate(3 28 75)"/><ellipse cx="31" cy="79" rx="2.2" ry="1.3" fill="#c8f0a0" opacity="0.8" transform="rotate(-15 31 79)"/><ellipse cx="20" cy="95" rx="3.2" ry="1.9" fill="#9be070" opacity="0.9" transform="rotate(33 20 95)"/><ellipse cx="23" cy="99" rx="2.2" ry="1.3" fill="#c8f0a0" opacity="0.8" transform="rotate(-57 23 99)"/><ellipse cx="33" cy="105" rx="3.2" ry="1.9" fill="#9be070" opacity="0.9" transform="rotate(-57 33 105)"/><ellipse cx="36" cy="109" rx="2.2" ry="1.3" fill="#c8f0a0" opacity="0.8" transform="rotate(41 36 109)"/><ellipse cx="12" cy="110" rx="3.2" ry="1.9" fill="#9be070" opacity="0.9" transform="rotate(-25 12 110)"/><ellipse cx="15" cy="114" rx="2.2" ry="1.3" fill="#c8f0a0" opacity="0.8" transform="rotate(0 15 114)"/><ellipse cx="26" cy="120" rx="3.2" ry="1.9" fill="#9be070" opacity="0.9" transform="rotate(-27 26 120)"/><ellipse cx="29" cy="124" rx="2.2" ry="1.3" fill="#c8f0a0" opacity="0.8" transform="rotate(-36 29 124)"/><ellipse cx="17" cy="140" rx="3.2" ry="1.9" fill="#9be070" opacity="0.9" transform="rotate(28 17 140)"/><ellipse cx="20" cy="144" rx="2.2" ry="1.3" fill="#c8f0a0" opacity="0.8" transform="rotate(17 20 144)"/><ellipse cx="30" cy="150" rx="3.2" ry="1.9" fill="#9be070" opacity="0.9" transform="rotate(-16 30 150)"/><ellipse cx="33" cy="154" rx="2.2" ry="1.3" fill="#c8f0a0" opacity="0.8" transform="rotate(-3 33 154)"/><ellipse cx="22" cy="160" rx="3.2" ry="1.9" fill="#9be070" opacity="0.9" transform="rotate(43 22 160)"/><ellipse cx="25" cy="164" rx="2.2" ry="1.3" fill="#c8f0a0" opacity="0.8" transform="rotate(59 25 164)"/><ellipse cx="14" cy="175" rx="3.2" ry="1.9" fill="#9be070" opacity="0.9" transform="rotate(32 14 175)"/><ellipse cx="17" cy="179" rx="2.2" ry="1.3" fill="#c8f0a0" opacity="0.8" transform="rotate(-16 17 179)"/><ellipse cx="27" cy="185" rx="3.2" ry="1.9" fill="#9be070" opacity="0.9" transform="rotate(-14 27 185)"/><ellipse cx="30" cy="189" rx="2.2" ry="1.3" fill="#c8f0a0" opacity="0.8" transform="rotate(-50 30 189)"/><ellipse cx="19" cy="200" rx="3.2" ry="1.9" fill="#9be070" opacity="0.9" transform="rotate(-32 19 200)"/><ellipse cx="22" cy="204" rx="2.2" ry="1.3" fill="#c8f0a0" opacity="0.8" transform="rotate(-47 22 204)"/><ellipse cx="33" cy="215" rx="3.2" ry="1.9" fill="#9be070" opacity="0.9" transform="rotate(-31 33 215)"/><ellipse cx="36" cy="219" rx="2.2" ry="1.3" fill="#c8f0a0" opacity="0.8" transform="rotate(0 36 219)"/><ellipse cx="24" cy="225" rx="3.2" ry="1.9" fill="#9be070" opacity="0.9" transform="rotate(-35 24 225)"/><ellipse cx="27" cy="229" rx="2.2" ry="1.3" fill="#c8f0a0" opacity="0.8" transform="rotate(-17 27 229)"/><ellipse cx="15" cy="235" rx="3.2" ry="1.9" fill="#9be070" opacity="0.9" transform="rotate(-34 15 235)"/><ellipse cx="18" cy="239" rx="2.2" ry="1.3" fill="#c8f0a0" opacity="0.8" transform="rotate(1 18 239)"/><ellipse cx="29" cy="245" rx="3.2" ry="1.9" fill="#9be070" opacity="0.9" transform="rotate(19 29 245)"/><ellipse cx="32" cy="249" rx="2.2" ry="1.3" fill="#c8f0a0" opacity="0.8" transform="rotate(55 32 249)"/><ellipse cx="21" cy="258" rx="3.2" ry="1.9" fill="#9be070" opacity="0.9" transform="rotate(18 21 258)"/><ellipse cx="24" cy="262" rx="2.2" ry="1.3" fill="#c8f0a0" opacity="0.8" transform="rotate(47 24 262)"/><ellipse cx="20" cy="48" rx="3.2" ry="1.9" fill="#9be070" opacity="0.9" transform="rotate(-60 20 48)"/><ellipse cx="23" cy="52" rx="2.2" ry="1.3" fill="#c8f0a0" opacity="0.8" transform="rotate(1 23 52)"/><ellipse cx="12" cy="85" rx="3.2" ry="1.9" fill="#9be070" opacity="0.9" transform="rotate(56 12 85)"/><ellipse cx="15" cy="89" rx="2.2" ry="1.3" fill="#c8f0a0" opacity="0.8" transform="rotate(23 15 89)"/><ellipse cx="24" cy="102" rx="3.2" ry="1.9" fill="#9be070" opacity="0.9" transform="rotate(-16 24 102)"/><ellipse cx="27" cy="106" rx="2.2" ry="1.3" fill="#c8f0a0" opacity="0.8" transform="rotate(42 27 106)"/><ellipse cx="20" cy="115" rx="3.2" ry="1.9" fill="#9be070" opacity="0.9" transform="rotate(22 20 115)"/><ellipse cx="23" cy="119" rx="2.2" ry="1.3" fill="#c8f0a0" opacity="0.8" transform="rotate(-50 23 119)"/><ellipse cx="28" cy="140" rx="3.2" ry="1.9" fill="#9be070" opacity="0.9" transform="rotate(46 28 140)"/><ellipse cx="31" cy="144" rx="2.2" ry="1.3" fill="#c8f0a0" opacity="0.8" transform="rotate(24 31 144)"/><ellipse cx="12" cy="155" rx="3.2" ry="1.9" fill="#9be070" opacity="0.9" transform="rotate(-45 12 155)"/><ellipse cx="15" cy="159" rx="2.2" ry="1.3" fill="#c8f0a0" opacity="0.8" transform="rotate(56 15 159)"/><ellipse cx="24" cy="168" rx="3.2" ry="1.9" fill="#9be070" opacity="0.9" transform="rotate(-11 24 168)"/><ellipse cx="27" cy="172" rx="2.2" ry="1.3" fill="#c8f0a0" opacity="0.8" transform="rotate(40 27 172)"/><ellipse cx="10" cy="205" rx="3.2" ry="1.9" fill="#9be070" opacity="0.9" transform="rotate(31 10 205)"/><ellipse cx="13" cy="209" rx="2.2" ry="1.3" fill="#c8f0a0" opacity="0.8" transform="rotate(36 13 209)"/><ellipse cx="22" cy="230" rx="3.2" ry="1.9" fill="#9be070" opacity="0.9" transform="rotate(-35 22 230)"/><ellipse cx="25" cy="234" rx="2.2" ry="1.3" fill="#c8f0a0" opacity="0.8" transform="rotate(1 25 234)"/><ellipse cx="30" cy="255" rx="3.2" ry="1.9" fill="#9be070" opacity="0.9" transform="rotate(53 30 255)"/><ellipse cx="33" cy="259" rx="2.2" ry="1.3" fill="#c8f0a0" opacity="0.8" transform="rotate(-38 33 259)"/><circle cx="25" cy="5" r="4.4" fill="#2e7a1e" opacity="0.35"/><circle cx="24" cy="4" r="3.2" fill="#a80c18"/><circle cx="22.3" cy="4.8" r="0.9" fill="#b00c18"/><circle cx="21.8" cy="4.5" r="0.9" fill="#c8101c"/><circle cx="24.2" cy="4.3" r="1.0" fill="#b00c18"/><circle cx="24.2" cy="3.6" r="1.5" fill="#b00c18"/><circle cx="23.4" cy="3.1" r="1.3" fill="#c8101c"/><circle cx="26.4" cy="4.3" r="1.4" fill="#e01a28"/><circle cx="21.2" cy="3.5" r="1.2" fill="#c8101c"/><circle cx="24.3" cy="3.4" r="1.1" fill="#f02c34"/><circle cx="21.7" cy="4.0" r="1.1" fill="#d81420"/><circle cx="23.7" cy="4.2" r="1.5" fill="#f02c34"/><circle cx="25.5" cy="2.9" r="0.5" fill="#ffc8c8" opacity="0.75"/><circle cx="24.6" cy="2.7" r="0.5" fill="#ffc8c8" opacity="0.75"/><circle cx="25.1" cy="1.8" r="0.5" fill="#ffc8c8" opacity="0.75"/><circle cx="24.3" cy="4.3" r="0.5" fill="#ffc8c8" opacity="0.75"/><circle cx="39" cy="28" r="7.2" fill="#2e7a1e" opacity="0.35"/><circle cx="38" cy="27" r="5.2" fill="#a80c18"/><circle cx="33.8" cy="26.7" r="2.3" fill="#d81420"/><circle cx="41.9" cy="27.1" r="1.6" fill="#b00c18"/><circle cx="37.6" cy="26.6" r="1.5" fill="#d81420"/><circle cx="35.7" cy="26.5" r="2.3" fill="#d81420"/><circle cx="38.9" cy="27.3" r="1.5" fill="#e01a28"/><circle cx="35.3" cy="26.9" r="2.3" fill="#e01a28"/><circle cx="35.2" cy="28.0" r="2.0" fill="#d81420"/><circle cx="38.4" cy="28.3" r="2.0" fill="#b00c18"/><circle cx="36.8" cy="26.9" r="2.0" fill="#f02c34"/><circle cx="41.8" cy="25.0" r="1.7" fill="#b00c18"/><circle cx="38.4" cy="27.4" r="1.9" fill="#e01a28"/><circle cx="37.0" cy="25.2" r="1.7" fill="#f02c34"/><circle cx="38.9" cy="23.0" r="0.7" fill="#ffc8c8" opacity="0.75"/><circle cx="39.8" cy="29.7" r="0.7" fill="#ffc8c8" opacity="0.75"/><circle cx="37.7" cy="26.5" r="0.7" fill="#ffc8c8" opacity="0.75"/><circle cx="41.3" cy="24.0" r="0.7" fill="#ffc8c8" opacity="0.75"/><circle cx="38.8" cy="31.3" r="0.7" fill="#ffc8c8" opacity="0.75"/><circle cx="16" cy="39" r="5.0" fill="#2e7a1e" opacity="0.35"/><circle cx="15" cy="38" r="3.6" fill="#a80c18"/><circle cx="13.7" cy="39.0" r="1.8" fill="#c8101c"/><circle cx="15.8" cy="39.2" r="1.4" fill="#f02c34"/><circle cx="13.9" cy="38.6" r="1.1" fill="#f02c34"/><circle cx="16.9" cy="38.2" r="1.3" fill="#e01a28"/><circle cx="13.7" cy="39.2" r="1.2" fill="#e01a28"/><circle cx="17.4" cy="40.0" r="1.2" fill="#e01a28"/><circle cx="15.8" cy="38.5" r="1.7" fill="#c8101c"/><circle cx="14.9" cy="38.4" r="1.3" fill="#f02c34"/><circle cx="13.5" cy="39.0" r="1.4" fill="#b00c18"/><circle cx="14.9" cy="37.7" r="1.0" fill="#c8101c"/><circle cx="14.8" cy="38.1" r="0.5" fill="#ffc8c8" opacity="0.75"/><circle cx="16.9" cy="37.2" r="0.5" fill="#ffc8c8" opacity="0.75"/><circle cx="15.1" cy="37.7" r="0.5" fill="#ffc8c8" opacity="0.75"/><circle cx="15.1" cy="37.8" r="0.5" fill="#ffc8c8" opacity="0.75"/><circle cx="33" cy="58" r="12.7" fill="#2e7a1e" opacity="0.35"/><circle cx="32" cy="57" r="9.2" fill="#a80c18"/><circle cx="34.5" cy="54.0" r="3.2" fill="#d81420"/><circle cx="25.1" cy="60.9" r="3.8" fill="#e01a28"/><circle cx="30.0" cy="56.7" r="2.8" fill="#c8101c"/><circle cx="31.9" cy="58.6" r="4.5" fill="#f02c34"/><circle cx="30.3" cy="56.7" r="3.5" fill="#c8101c"/><circle cx="31.1" cy="63.9" r="4.6" fill="#e01a28"/><circle cx="38.3" cy="57.6" r="3.7" fill="#c8101c"/><circle cx="29.9" cy="56.8" r="3.5" fill="#b00c18"/><circle cx="29.4" cy="53.1" r="4.4" fill="#d81420"/><circle cx="31.3" cy="58.7" r="3.0" fill="#c8101c"/><circle cx="35.0" cy="51.7" r="3.8" fill="#b00c18"/><circle cx="40.5" cy="56.4" r="4.3" fill="#e01a28"/><circle cx="37.8" cy="59.7" r="3.1" fill="#c8101c"/><circle cx="37.4" cy="59.0" r="3.3" fill="#d81420"/><circle cx="30.8" cy="54.9" r="3.0" fill="#f02c34"/><circle cx="33.5" cy="57.4" r="3.1" fill="#e01a28"/><circle cx="31.3" cy="65.3" r="4.5" fill="#d81420"/><circle cx="31.9" cy="57.2" r="1.2" fill="#ffc8c8" opacity="0.75"/><circle cx="33.3" cy="55.8" r="1.2" fill="#ffc8c8" opacity="0.75"/><circle cx="33.1" cy="59.5" r="1.2" fill="#ffc8c8" opacity="0.75"/><circle cx="33.9" cy="58.1" r="1.2" fill="#ffc8c8" opacity="0.75"/><circle cx="30.9" cy="55.3" r="1.2" fill="#ffc8c8" opacity="0.75"/><circle cx="32.1" cy="56.3" r="1.2" fill="#ffc8c8" opacity="0.75"/><circle cx="32.5" cy="55.9" r="1.2" fill="#ffc8c8" opacity="0.75"/><circle cx="19" cy="73" r="6.6" fill="#2e7a1e" opacity="0.35"/><circle cx="18" cy="72" r="4.8" fill="#a80c18"/><circle cx="16.5" cy="71.1" r="1.6" fill="#c8101c"/><circle cx="21.7" cy="74.2" r="2.2" fill="#c8101c"/><circle cx="16.2" cy="69.3" r="2.3" fill="#b00c18"/><circle cx="18.3" cy="68.8" r="1.9" fill="#f02c34"/><circle cx="17.5" cy="69.1" r="1.4" fill="#d81420"/><circle cx="15.7" cy="69.6" r="2.2" fill="#c8101c"/><circle cx="20.9" cy="70.2" r="1.9" fill="#e01a28"/><circle cx="19.2" cy="69.7" r="2.3" fill="#c8101c"/><circle cx="18.2" cy="72.1" r="2.0" fill="#e01a28"/><circle cx="16.5" cy="73.4" r="1.4" fill="#e01a28"/><circle cx="15.9" cy="69.8" r="1.8" fill="#e01a28"/><circle cx="17.7" cy="72.1" r="2.3" fill="#d81420"/><circle cx="19.9" cy="73.2" r="0.6" fill="#ffc8c8" opacity="0.75"/><circle cx="17.9" cy="70.0" r="0.6" fill="#ffc8c8" opacity="0.75"/><circle cx="19.3" cy="68.7" r="0.6" fill="#ffc8c8" opacity="0.75"/><circle cx="18.3" cy="75.2" r="0.6" fill="#ffc8c8" opacity="0.75"/><circle cx="18.3" cy="74.7" r="0.6" fill="#ffc8c8" opacity="0.75"/><circle cx="29" cy="90" r="7.2" fill="#2e7a1e" opacity="0.35"/><circle cx="28" cy="89" r="5.2" fill="#a80c18"/><circle cx="24.0" cy="90.0" r="1.5" fill="#f02c34"/><circle cx="28.3" cy="86.0" r="2.2" fill="#e01a28"/><circle cx="26.7" cy="88.1" r="2.2" fill="#f02c34"/><circle cx="27.5" cy="88.6" r="2.0" fill="#b00c18"/><circle cx="27.6" cy="92.3" r="2.2" fill="#b00c18"/><circle cx="27.4" cy="91.4" r="2.0" fill="#b00c18"/><circle cx="28.5" cy="84.2" r="2.1" fill="#f02c34"/><circle cx="32.5" cy="88.4" r="1.5" fill="#b00c18"/><circle cx="30.2" cy="90.1" r="2.6" fill="#f02c34"/><circle cx="24.6" cy="91.9" r="2.5" fill="#e01a28"/><circle cx="27.4" cy="88.7" r="2.0" fill="#f02c34"/><circle cx="30.7" cy="92.0" r="2.0" fill="#e01a28"/><circle cx="27.7" cy="88.0" r="0.7" fill="#ffc8c8" opacity="0.75"/><circle cx="29.8" cy="87.7" r="0.7" fill="#ffc8c8" opacity="0.75"/><circle cx="28.0" cy="89.0" r="0.7" fill="#ffc8c8" opacity="0.75"/><circle cx="26.0" cy="89.1" r="0.7" fill="#ffc8c8" opacity="0.75"/><circle cx="27.8" cy="89.6" r="0.7" fill="#ffc8c8" opacity="0.75"/><circle cx="37" cy="95" r="6.1" fill="#2e7a1e" opacity="0.35"/><circle cx="36" cy="94" r="4.4" fill="#a80c18"/><circle cx="35.3" cy="95.1" r="2.0" fill="#e01a28"/><circle cx="35.4" cy="95.2" r="1.6" fill="#c8101c"/><circle cx="35.1" cy="90.4" r="1.5" fill="#f02c34"/><circle cx="37.5" cy="94.6" r="2.1" fill="#e01a28"/><circle cx="34.9" cy="95.4" r="1.5" fill="#e01a28"/><circle cx="36.0" cy="94.2" r="1.9" fill="#c8101c"/><circle cx="36.0" cy="95.1" r="1.7" fill="#c8101c"/><circle cx="36.5" cy="90.8" r="1.6" fill="#e01a28"/><circle cx="37.0" cy="91.6" r="2.1" fill="#d81420"/><circle cx="33.2" cy="93.1" r="1.3" fill="#b00c18"/><circle cx="33.0" cy="94.9" r="1.8" fill="#f02c34"/><circle cx="32.5" cy="94.3" r="0.6" fill="#ffc8c8" opacity="0.75"/><circle cx="35.4" cy="93.8" r="0.6" fill="#ffc8c8" opacity="0.75"/><circle cx="35.1" cy="94.6" r="0.6" fill="#ffc8c8" opacity="0.75"/><circle cx="35.9" cy="96.8" r="0.6" fill="#ffc8c8" opacity="0.75"/><circle cx="18" cy="133" r="11.6" fill="#2e7a1e" opacity="0.35"/><circle cx="17" cy="132" r="8.4" fill="#a80c18"/><circle cx="15.2" cy="129.4" r="2.8" fill="#b00c18"/><circle cx="14.1" cy="130.9" r="2.6" fill="#c8101c"/><circle cx="20.5" cy="133.8" r="3.8" fill="#d81420"/><circle cx="18.3" cy="139.0" r="4.2" fill="#b00c18"/><circle cx="13.1" cy="133.9" r="2.8" fill="#c8101c"/><circle cx="16.6" cy="132.6" r="2.8" fill="#f02c34"/><circle cx="17.6" cy="130.5" r="2.3" fill="#b00c18"/><circle cx="12.6" cy="135.9" r="2.7" fill="#f02c34"/><circle cx="16.7" cy="132.4" r="2.8" fill="#f02c34"/><circle cx="19.8" cy="134.8" r="3.5" fill="#c8101c"/><circle cx="22.9" cy="135.9" r="3.0" fill="#b00c18"/><circle cx="14.8" cy="133.0" r="3.8" fill="#e01a28"/><circle cx="19.3" cy="134.4" r="3.8" fill="#b00c18"/><circle cx="20.8" cy="131.2" r="2.4" fill="#d81420"/><circle cx="21.7" cy="126.0" r="2.8" fill="#e01a28"/><circle cx="17.2" cy="133.2" r="4.1" fill="#e01a28"/><circle cx="22.0" cy="130.1" r="1.1" fill="#ffc8c8" opacity="0.75"/><circle cx="13.6" cy="127.5" r="1.1" fill="#ffc8c8" opacity="0.75"/><circle cx="13.1" cy="133.1" r="1.1" fill="#ffc8c8" opacity="0.75"/><circle cx="22.6" cy="133.4" r="1.1" fill="#ffc8c8" opacity="0.75"/><circle cx="17.7" cy="138.7" r="1.1" fill="#ffc8c8" opacity="0.75"/><circle cx="15.6" cy="130.2" r="1.1" fill="#ffc8c8" opacity="0.75"/><circle cx="18.3" cy="133.3" r="1.1" fill="#ffc8c8" opacity="0.75"/><circle cx="27" cy="176" r="8.8" fill="#2e7a1e" opacity="0.35"/><circle cx="26" cy="175" r="6.4" fill="#a80c18"/><circle cx="23.3" cy="171.8" r="1.9" fill="#e01a28"/><circle cx="24.2" cy="180.4" r="2.0" fill="#f02c34"/><circle cx="26.6" cy="178.6" r="1.8" fill="#f02c34"/><circle cx="27.7" cy="175.0" r="2.2" fill="#c8101c"/><circle cx="24.6" cy="175.2" r="2.1" fill="#b00c18"/><circle cx="25.5" cy="173.2" r="1.8" fill="#b00c18"/><circle cx="28.9" cy="172.4" r="1.9" fill="#c8101c"/><circle cx="23.2" cy="170.2" r="2.1" fill="#e01a28"/><circle cx="24.6" cy="170.9" r="2.3" fill="#b00c18"/><circle cx="27.5" cy="179.5" r="2.8" fill="#d81420"/><circle cx="28.7" cy="176.2" r="2.0" fill="#c8101c"/><circle cx="26.2" cy="176.3" r="2.9" fill="#f02c34"/><circle cx="28.9" cy="177.4" r="2.6" fill="#c8101c"/><circle cx="20.6" cy="175.5" r="1.8" fill="#d81420"/><circle cx="27.3" cy="176.8" r="0.8" fill="#ffc8c8" opacity="0.75"/><circle cx="27.3" cy="180.3" r="0.8" fill="#ffc8c8" opacity="0.75"/><circle cx="26.2" cy="175.2" r="0.8" fill="#ffc8c8" opacity="0.75"/><circle cx="28.0" cy="175.8" r="0.8" fill="#ffc8c8" opacity="0.75"/><circle cx="30.0" cy="172.0" r="0.8" fill="#ffc8c8" opacity="0.75"/><circle cx="25.4" cy="169.4" r="0.8" fill="#ffc8c8" opacity="0.75"/><circle cx="17" cy="194" r="6.1" fill="#2e7a1e" opacity="0.35"/><circle cx="16" cy="193" r="4.4" fill="#a80c18"/><circle cx="17.2" cy="192.4" r="1.4" fill="#d81420"/><circle cx="16.0" cy="192.9" r="1.9" fill="#b00c18"/><circle cx="18.2" cy="189.6" r="1.6" fill="#e01a28"/><circle cx="17.2" cy="193.0" r="1.6" fill="#e01a28"/><circle cx="13.1" cy="191.8" r="1.6" fill="#f02c34"/><circle cx="16.8" cy="191.4" r="1.3" fill="#b00c18"/><circle cx="16.7" cy="195.1" r="1.7" fill="#f02c34"/><circle cx="13.6" cy="195.8" r="1.2" fill="#b00c18"/><circle cx="16.0" cy="195.6" r="1.6" fill="#b00c18"/><circle cx="16.3" cy="193.1" r="2.1" fill="#f02c34"/><circle cx="16.1" cy="193.2" r="1.8" fill="#f02c34"/><circle cx="15.5" cy="196.7" r="0.6" fill="#ffc8c8" opacity="0.75"/><circle cx="15.3" cy="192.3" r="0.6" fill="#ffc8c8" opacity="0.75"/><circle cx="15.7" cy="191.8" r="0.6" fill="#ffc8c8" opacity="0.75"/><circle cx="16.0" cy="193.0" r="0.6" fill="#ffc8c8" opacity="0.75"/><circle cx="32" cy="211" r="12.7" fill="#2e7a1e" opacity="0.35"/><circle cx="31" cy="210" r="9.2" fill="#a80c18"/><circle cx="31.3" cy="202.1" r="3.8" fill="#e01a28"/><circle cx="33.0" cy="210.3" r="3.5" fill="#b00c18"/><circle cx="34.2" cy="209.0" r="3.0" fill="#b00c18"/><circle cx="31.5" cy="208.9" r="3.6" fill="#e01a28"/><circle cx="33.1" cy="204.0" r="4.2" fill="#c8101c"/><circle cx="28.8" cy="208.2" r="3.2" fill="#f02c34"/><circle cx="32.1" cy="205.0" r="3.6" fill="#b00c18"/><circle cx="31.0" cy="207.9" r="2.7" fill="#e01a28"/><circle cx="26.3" cy="210.5" r="2.9" fill="#b00c18"/><circle cx="37.3" cy="204.3" r="3.1" fill="#e01a28"/><circle cx="31.9" cy="213.5" r="4.6" fill="#b00c18"/><circle cx="31.5" cy="211.0" r="3.5" fill="#c8101c"/><circle cx="30.9" cy="202.7" r="3.9" fill="#e01a28"/><circle cx="31.5" cy="207.5" r="3.1" fill="#f02c34"/><circle cx="26.6" cy="214.6" r="2.9" fill="#c8101c"/><circle cx="31.8" cy="211.9" r="3.1" fill="#d81420"/><circle cx="31.2" cy="210.5" r="3.1" fill="#c8101c"/><circle cx="29.1" cy="209.9" r="1.2" fill="#ffc8c8" opacity="0.75"/><circle cx="32.9" cy="205.1" r="1.2" fill="#ffc8c8" opacity="0.75"/><circle cx="31.8" cy="210.0" r="1.2" fill="#ffc8c8" opacity="0.75"/><circle cx="24.5" cy="211.0" r="1.2" fill="#ffc8c8" opacity="0.75"/><circle cx="35.0" cy="203.8" r="1.2" fill="#ffc8c8" opacity="0.75"/><circle cx="33.3" cy="210.6" r="1.2" fill="#ffc8c8" opacity="0.75"/><circle cx="32.1" cy="211.0" r="1.2" fill="#ffc8c8" opacity="0.75"/><circle cx="38" cy="242" r="7.7" fill="#2e7a1e" opacity="0.35"/><circle cx="37" cy="241" r="5.6" fill="#a80c18"/><circle cx="40.0" cy="240.5" r="2.7" fill="#f02c34"/><circle cx="36.1" cy="240.9" r="2.3" fill="#e01a28"/><circle cx="39.5" cy="242.9" r="2.3" fill="#c8101c"/><circle cx="38.7" cy="241.4" r="1.6" fill="#f02c34"/><circle cx="40.7" cy="241.9" r="2.7" fill="#e01a28"/><circle cx="37.9" cy="239.1" r="2.0" fill="#d81420"/><circle cx="36.6" cy="242.0" r="2.5" fill="#d81420"/><circle cx="34.9" cy="241.2" r="2.5" fill="#d81420"/><circle cx="38.6" cy="243.3" r="2.4" fill="#b00c18"/><circle cx="36.3" cy="239.0" r="1.9" fill="#f02c34"/><circle cx="36.8" cy="241.1" r="2.5" fill="#f02c34"/><circle cx="36.9" cy="241.0" r="2.5" fill="#f02c34"/><circle cx="35.7" cy="239.4" r="2.1" fill="#e01a28"/><circle cx="36.3" cy="241.3" r="0.7" fill="#ffc8c8" opacity="0.75"/><circle cx="37.3" cy="241.3" r="0.7" fill="#ffc8c8" opacity="0.75"/><circle cx="35.4" cy="240.2" r="0.7" fill="#ffc8c8" opacity="0.75"/><circle cx="37.1" cy="240.4" r="0.7" fill="#ffc8c8" opacity="0.75"/><circle cx="37.7" cy="241.2" r="0.7" fill="#ffc8c8" opacity="0.75"/><circle cx="24" cy="262" r="4.4" fill="#2e7a1e" opacity="0.35"/><circle cx="23" cy="261" r="3.2" fill="#a80c18"/><circle cx="23.4" cy="259.9" r="1.3" fill="#f02c34"/><circle cx="23.0" cy="260.5" r="1.1" fill="#c8101c"/><circle cx="20.2" cy="260.6" r="1.0" fill="#b00c18"/><circle cx="23.1" cy="258.6" r="1.5" fill="#f02c34"/><circle cx="25.0" cy="263.0" r="1.6" fill="#b00c18"/><circle cx="22.3" cy="262.7" r="1.3" fill="#e01a28"/><circle cx="24.5" cy="259.9" r="1.5" fill="#c8101c"/><circle cx="21.4" cy="259.0" r="1.3" fill="#d81420"/><circle cx="24.4" cy="259.0" r="1.0" fill="#c8101c"/><circle cx="25.7" cy="261.7" r="1.0" fill="#f02c34"/><circle cx="23.5" cy="261.5" r="0.5" fill="#ffc8c8" opacity="0.75"/><circle cx="22.6" cy="258.5" r="0.5" fill="#ffc8c8" opacity="0.75"/><circle cx="24.5" cy="261.4" r="0.5" fill="#ffc8c8" opacity="0.75"/><circle cx="23.0" cy="260.9" r="0.5" fill="#ffc8c8" opacity="0.75"/></svg><div class="ttl1" style="top:17.5px">ФОРМУВАННЯ ТВОРЧОЇ УЯВИ МАЙБУТНІХ  ВЧИТЕЛІВ</div><div class="ttl1" style="top:26.5px">МУЗИЧНОГО МИСТЕЦТВА У ПРОЦЕСІ ПРОФЕСІЙНОЇ</div><div class="ttl1" style="top:36.0px">ПІДГОТОВКИ ЯК ПСИХОЛОГО-ПЕДАГОГІЧНА ПРОБЛЕМА</div><div class="bl1 j" style="left:90.5px;top:56.30px;width:243.5px;">Через художній образ мистецтво дозволяє людині збагатити свій</div><div class="bl1 j" style="left:74.0px;top:65.66px;width:260.0px;">життєвий досвід, пережити ті емоції і почуття, які вона не відчувала у житті,</div><div class="bl1" style="left:74.0px;top:75.02px;width:260.0px;">розвинути більш глибоке і тонке ставлення до себе, інших людей, світу.</div><div class="bl1 j" style="left:90.5px;top:84.38px;width:243.5px;">В.Скоробогатова слушно зазначає, що «...художній образ виступає</div><div class="bl1" style="left:74.0px;top:93.74px;width:260.0px;">продуктом і підсумком <b>творчої діяльності художника</b>».</div><div class="bl1 j" style="left:90.5px;top:103.10px;width:243.5px;">Багато вчених вказують на зв'язок уяви з <b>мисленням, пізнавальними</b></div><div class="bl1" style="left:74.0px;top:112.46px;width:260.0px;"><b>процесами.</b></div><div class="bl1 j" style="left:90.5px;top:121.82px;width:243.5px;"><b>Емоційну забарвленість</b> образів уяви визначають пізнавальні процеси</div><div class="bl1" style="left:74.0px;top:131.18px;width:260.0px;">та логічне мислення.</div><div class="bl1 j" style="left:90.5px;top:140.54px;width:243.5px;">Від практичного досвіду, яким володіє особистість залежить образний</div><div class="bl1 j" style="left:74.0px;top:149.90px;width:260.0px;">світ уяви. Діяльність уяви знаходиться у прямій залежності від багатства і</div><div class="bl1" style="left:74.0px;top:159.26px;width:260.0px;">розмаїтості колишнього досвіду людини.</div><div class="bl1" style="left:90.5px;top:168.62px;width:243.5px;">Одним із засобів передачі досвіду виступає мистецтво.</div><div class="bl1 j" style="left:74.0px;top:177.98px;width:260.0px;">Навчальна діяльність майбутніх учителів музики, в якій особистість</div><div class="bl1 j" style="left:74.0px;top:187.34px;width:260.0px;">здобуває щось нове для себе, багато в чому залежить від попередньо</div><div class="bl1 j" style="left:74.0px;top:196.70px;width:260.0px;">засвоєного досвіду, знань і умінь, тому що «будь-який творчий винахід є</div><div class="bl1" style="left:74.0px;top:206.06px;width:260.0px;">комбінуванням по-новому колишніх даних».</div><div class="bl1 j" style="left:74.0px;top:215.42px;width:260.0px;">Крім характеристик, що дають чітку картину уяви і складають видиму її</div><div class="bl1 j" style="left:74.0px;top:224.78px;width:260.0px;">частину, існують функції, форми та прийоми уяви, що опосередковують ці</div><div class="bl1" style="left:74.0px;top:234.14px;width:260.0px;">характеристики.</div><div class="t" style="left:55.5px;top:249px;font-family:'Liberation Serif',serif;font-size:7.6px;color:#33333f;letter-spacing:-0.3px">10.12.2025</div><div class="a" style="left:286.0px;top:239.2px;width:22px;height:22px;border-radius:50%;background:radial-gradient(circle at 50% 40%,#8ee05a 0%,#58b830 45%,#2f8a1c 80%,#7ccf58 100%);box-shadow:0 0 2px #6c6"></div><div class="a" style="left:319.4px;top:239.2px;width:22px;height:22px;border-radius:50%;background:radial-gradient(circle at 50% 40%,#8ee05a 0%,#58b830 45%,#2f8a1c 80%,#7ccf58 100%);box-shadow:0 0 2px #6c6"></div><svg style="left:289px;top:244px" width="16" height="12"><path d="M3 6 L11 1.5 V10.5 Z" fill="#9ae070" opacity="0.7"/></svg><svg style="left:325px;top:244px" width="16" height="12"><path d="M11 6 L3 1.5 V10.5 Z" fill="#9ae070" opacity="0.7"/></svg></div></div>
<div class="t" style="left:6px;top:257px;font-size:6px;color:#666">12</div>
<div class="a" style="left:19.5px;top:255.5px;width:110.4px;height:83px;border:0.6px solid #b8b8b8"></div><div class="thumb" style="left:20px;top:256px;transform:scale(0.309)"><div class="a" style="left:0;top:0;width:354px;height:266px;overflow:hidden"><div class="a" style="left:61px;top:0;width:293px;height:266px;background:radial-gradient(ellipse 60px 40px at 40px 60px,rgba(200,175,130,0.25),transparent),radial-gradient(ellipse 80px 50px at 230px 150px,rgba(205,180,135,0.22),transparent),radial-gradient(ellipse 70px 60px at 120px 220px,rgba(200,175,130,0.2),transparent),radial-gradient(ellipse 90px 40px at 250px 30px,rgba(255,245,225,0.35),transparent),radial-gradient(ellipse 100px 60px at 100px 120px,rgba(255,248,230,0.3),transparent),#ebd9bb"></div><svg style="left:61px;top:0" width="293" height="266"><filter id="pn" x="0" y="0" width="100%" height="100%"><feTurbulence type="fractalNoise" baseFrequency="0.09" numOctaves="2" seed="3"/><feColorMatrix values="0 0 0 0 0.55  0 0 0 0 0.42  0 0 0 0 0.25  0 0 0 -1.6 1.05"/></filter><rect width="293" height="266" filter="url(#pn)" opacity="0.35"/></svg><svg style="left:0;top:0" width="62" height="266"><defs><linearGradient id="gs" x1="0" x2="1" y1="0" y2="0"><stop offset="0" stop-color="#72c944"/><stop offset="0.12" stop-color="#64c03a"/><stop offset="0.27" stop-color="#3c9a26"/><stop offset="0.4" stop-color="#74cc46"/><stop offset="0.6" stop-color="#7ad04a"/><stop offset="0.78" stop-color="#3a9826"/><stop offset="0.9" stop-color="#5cbc36"/><stop offset="1" stop-color="#70c842"/></linearGradient><linearGradient id="gsh" x1="0" x2="1" y1="0" y2="0"><stop offset="0" stop-color="#9aa89a"/><stop offset="0.55" stop-color="#e6e8e8"/><stop offset="1" stop-color="#f6f6f6"/></linearGradient><radialGradient id="rf"><stop offset="0" stop-color="#ff5a5a"/><stop offset="0.5" stop-color="#d81a22"/><stop offset="1" stop-color="#a01018"/></radialGradient><radialGradient id="yf"><stop offset="0" stop-color="#fff060"/><stop offset="0.6" stop-color="#f4d020"/><stop offset="1" stop-color="#d8a010"/></radialGradient></defs><rect x="0" y="0" width="48" height="266" fill="url(#gs)"/><rect x="48" y="0" width="14" height="266" fill="url(#gsh)"/><path d="M24 0 Q14 30 28 60 Q40 90 20 130 Q10 160 26 190 Q38 220 28 266" stroke="#3a8a22" stroke-width="1.2" fill="none" opacity="0.8"/><ellipse cx="22.4" cy="2.0" rx="2.4" ry="1.3" fill="#5ab832" transform="rotate(31 22.4 2.0)"/><ellipse cx="28.7" cy="6.4" rx="2.4" ry="1.3" fill="#3c9a24" transform="rotate(67 28.7 6.4)"/><ellipse cx="22.6" cy="10.8" rx="2.4" ry="1.3" fill="#3c9a24" transform="rotate(59 22.6 10.8)"/><ellipse cx="25.7" cy="15.2" rx="2.4" ry="1.3" fill="#3c9a24" transform="rotate(41 25.7 15.2)"/><ellipse cx="29.9" cy="19.6" rx="2.4" ry="1.3" fill="#5ab832" transform="rotate(-47 29.9 19.6)"/><ellipse cx="32.7" cy="24.0" rx="2.4" ry="1.3" fill="#3c9a24" transform="rotate(-39 32.7 24.0)"/><ellipse cx="38.9" cy="28.4" rx="2.4" ry="1.3" fill="#3c9a24" transform="rotate(31 38.9 28.4)"/><ellipse cx="26.7" cy="32.8" rx="2.4" ry="1.3" fill="#5ab832" transform="rotate(-59 26.7 32.8)"/><ellipse cx="33.7" cy="37.2" rx="2.4" ry="1.3" fill="#5ab832" transform="rotate(4 33.7 37.2)"/><ellipse cx="31.4" cy="41.6" rx="2.4" ry="1.3" fill="#3c9a24" transform="rotate(8 31.4 41.6)"/><ellipse cx="32.7" cy="46.0" rx="2.4" ry="1.3" fill="#5ab832" transform="rotate(-44 32.7 46.0)"/><ellipse cx="31.9" cy="50.4" rx="2.4" ry="1.3" fill="#5ab832" transform="rotate(25 31.9 50.4)"/><ellipse cx="23.8" cy="54.8" rx="2.4" ry="1.3" fill="#3c9a24" transform="rotate(-55 23.8 54.8)"/><ellipse cx="29.6" cy="59.2" rx="2.4" ry="1.3" fill="#c0f090" transform="rotate(66 29.6 59.2)"/><ellipse cx="25.2" cy="63.6" rx="2.4" ry="1.3" fill="#a8e880" transform="rotate(49 25.2 63.6)"/><ellipse cx="25.7" cy="68.0" rx="2.4" ry="1.3" fill="#c0f090" transform="rotate(22 25.7 68.0)"/><ellipse cx="19.9" cy="72.4" rx="2.4" ry="1.3" fill="#5ab832" transform="rotate(-8 19.9 72.4)"/><ellipse cx="15.1" cy="76.8" rx="2.4" ry="1.3" fill="#a8e880" transform="rotate(64 15.1 76.8)"/><ellipse cx="19.2" cy="81.2" rx="2.4" ry="1.3" fill="#a8e880" transform="rotate(44 19.2 81.2)"/><ellipse cx="14.9" cy="85.6" rx="2.4" ry="1.3" fill="#3c9a24" transform="rotate(-40 14.9 85.6)"/><ellipse cx="16.8" cy="90.0" rx="2.4" ry="1.3" fill="#5ab832" transform="rotate(17 16.8 90.0)"/><ellipse cx="10.9" cy="94.4" rx="2.4" ry="1.3" fill="#c0f090" transform="rotate(37 10.9 94.4)"/><ellipse cx="8.8" cy="98.8" rx="2.4" ry="1.3" fill="#3c9a24" transform="rotate(10 8.8 98.8)"/><ellipse cx="12.8" cy="103.2" rx="2.4" ry="1.3" fill="#a8e880" transform="rotate(57 12.8 103.2)"/><ellipse cx="16.3" cy="107.6" rx="2.4" ry="1.3" fill="#c0f090" transform="rotate(-53 16.3 107.6)"/><ellipse cx="20.4" cy="112.0" rx="2.4" ry="1.3" fill="#a8e880" transform="rotate(51 20.4 112.0)"/><ellipse cx="19.2" cy="116.4" rx="2.4" ry="1.3" fill="#3c9a24" transform="rotate(-55 19.2 116.4)"/><ellipse cx="20.8" cy="120.8" rx="2.4" ry="1.3" fill="#a8e880" transform="rotate(44 20.8 120.8)"/><ellipse cx="16.0" cy="125.2" rx="2.4" ry="1.3" fill="#c0f090" transform="rotate(18 16.0 125.2)"/><ellipse cx="13.9" cy="129.6" rx="2.4" ry="1.3" fill="#c0f090" transform="rotate(20 13.9 129.6)"/><ellipse cx="17.6" cy="134.0" rx="2.4" ry="1.3" fill="#3c9a24" transform="rotate(56 17.6 134.0)"/><ellipse cx="17.9" cy="138.4" rx="2.4" ry="1.3" fill="#a8e880" transform="rotate(-37 17.9 138.4)"/><ellipse cx="29.2" cy="142.8" rx="2.4" ry="1.3" fill="#c0f090" transform="rotate(30 29.2 142.8)"/><ellipse cx="33.4" cy="147.2" rx="2.4" ry="1.3" fill="#c0f090" transform="rotate(-50 33.4 147.2)"/><ellipse cx="24.5" cy="151.6" rx="2.4" ry="1.3" fill="#c0f090" transform="rotate(70 24.5 151.6)"/><ellipse cx="27.4" cy="156.0" rx="2.4" ry="1.3" fill="#5ab832" transform="rotate(40 27.4 156.0)"/><ellipse cx="36.7" cy="160.4" rx="2.4" ry="1.3" fill="#a8e880" transform="rotate(36 36.7 160.4)"/><ellipse cx="39.2" cy="164.8" rx="2.4" ry="1.3" fill="#c0f090" transform="rotate(-11 39.2 164.8)"/><ellipse cx="28.0" cy="169.2" rx="2.4" ry="1.3" fill="#5ab832" transform="rotate(-32 28.0 169.2)"/><ellipse cx="29.2" cy="173.6" rx="2.4" ry="1.3" fill="#5ab832" transform="rotate(-67 29.2 173.6)"/><ellipse cx="32.5" cy="178.0" rx="2.4" ry="1.3" fill="#5ab832" transform="rotate(-3 32.5 178.0)"/><ellipse cx="29.1" cy="182.4" rx="2.4" ry="1.3" fill="#5ab832" transform="rotate(37 29.1 182.4)"/><ellipse cx="31.7" cy="186.8" rx="2.4" ry="1.3" fill="#a8e880" transform="rotate(-38 31.7 186.8)"/><ellipse cx="32.7" cy="191.2" rx="2.4" ry="1.3" fill="#3c9a24" transform="rotate(46 32.7 191.2)"/><ellipse cx="34.2" cy="195.6" rx="2.4" ry="1.3" fill="#c0f090" transform="rotate(31 34.2 195.6)"/><ellipse cx="25.5" cy="200.0" rx="2.4" ry="1.3" fill="#3c9a24" transform="rotate(53 25.5 200.0)"/><ellipse cx="27.1" cy="204.4" rx="2.4" ry="1.3" fill="#3c9a24" transform="rotate(-22 27.1 204.4)"/><ellipse cx="17.3" cy="208.8" rx="2.4" ry="1.3" fill="#5ab832" transform="rotate(42 17.3 208.8)"/><ellipse cx="16.9" cy="213.2" rx="2.4" ry="1.3" fill="#a8e880" transform="rotate(-57 16.9 213.2)"/><ellipse cx="14.4" cy="217.6" rx="2.4" ry="1.3" fill="#5ab832" transform="rotate(67 14.4 217.6)"/><ellipse cx="12.9" cy="222.0" rx="2.4" ry="1.3" fill="#a8e880" transform="rotate(-64 12.9 222.0)"/><ellipse cx="11.1" cy="226.4" rx="2.4" ry="1.3" fill="#5ab832" transform="rotate(26 11.1 226.4)"/><ellipse cx="11.2" cy="230.8" rx="2.4" ry="1.3" fill="#a8e880" transform="rotate(18 11.2 230.8)"/><ellipse cx="16.8" cy="235.2" rx="2.4" ry="1.3" fill="#c0f090" transform="rotate(-39 16.8 235.2)"/><ellipse cx="9.7" cy="239.6" rx="2.4" ry="1.3" fill="#c0f090" transform="rotate(49 9.7 239.6)"/><ellipse cx="14.8" cy="244.0" rx="2.4" ry="1.3" fill="#a8e880" transform="rotate(-49 14.8 244.0)"/><ellipse cx="10.4" cy="248.4" rx="2.4" ry="1.3" fill="#a8e880" transform="rotate(-3 10.4 248.4)"/><ellipse cx="15.8" cy="252.8" rx="2.4" ry="1.3" fill="#5ab832" transform="rotate(62 15.8 252.8)"/><ellipse cx="10.4" cy="257.2" rx="2.4" ry="1.3" fill="#a8e880" transform="rotate(-33 10.4 257.2)"/><ellipse cx="21.0" cy="261.6" rx="2.4" ry="1.3" fill="#3c9a24" transform="rotate(65 21.0 261.6)"/><ellipse cx="10" cy="20" rx="3.2" ry="1.9" fill="#9be070" opacity="0.9" transform="rotate(-22 10 20)"/><ellipse cx="13" cy="24" rx="2.2" ry="1.3" fill="#c8f0a0" opacity="0.8" transform="rotate(22 13 24)"/><ellipse cx="36" cy="12" rx="3.2" ry="1.9" fill="#9be070" opacity="0.9" transform="rotate(50 36 12)"/><ellipse cx="39" cy="16" rx="2.2" ry="1.3" fill="#c8f0a0" opacity="0.8" transform="rotate(-49 39 16)"/><ellipse cx="8" cy="50" rx="3.2" ry="1.9" fill="#9be070" opacity="0.9" transform="rotate(29 8 50)"/><ellipse cx="11" cy="54" rx="2.2" ry="1.3" fill="#c8f0a0" opacity="0.8" transform="rotate(48 11 54)"/><ellipse cx="40" cy="70" rx="3.2" ry="1.9" fill="#9be070" opacity="0.9" transform="rotate(-27 40 70)"/><ellipse cx="43" cy="74" rx="2.2" ry="1.3" fill="#c8f0a0" opacity="0.8" transform="rotate(6 43 74)"/><ellipse cx="12" cy="100" rx="3.2" ry="1.9" fill="#9be070" opacity="0.9" transform="rotate(-14 12 100)"/><ellipse cx="15" cy="104" rx="2.2" ry="1.3" fill="#c8f0a0" opacity="0.8" transform="rotate(56 15 104)"/><ellipse cx="38" cy="120" rx="3.2" ry="1.9" fill="#9be070" opacity="0.9" transform="rotate(-39 38 120)"/><ellipse cx="41" cy="124" rx="2.2" ry="1.3" fill="#c8f0a0" opacity="0.8" transform="rotate(-15 41 124)"/><ellipse cx="8" cy="150" rx="3.2" ry="1.9" fill="#9be070" opacity="0.9" transform="rotate(38 8 150)"/><ellipse cx="11" cy="154" rx="2.2" ry="1.3" fill="#c8f0a0" opacity="0.8" transform="rotate(-32 11 154)"/><ellipse cx="36" cy="160" rx="3.2" ry="1.9" fill="#9be070" opacity="0.9" transform="rotate(8 36 160)"/><ellipse cx="39" cy="164" rx="2.2" ry="1.3" fill="#c8f0a0" opacity="0.8" transform="rotate(9 39 164)"/><ellipse cx="10" cy="185" rx="3.2" ry="1.9" fill="#9be070" opacity="0.9" transform="rotate(39 10 185)"/><ellipse cx="13" cy="189" rx="2.2" ry="1.3" fill="#c8f0a0" opacity="0.8" transform="rotate(4 13 189)"/><ellipse cx="40" cy="195" rx="3.2" ry="1.9" fill="#9be070" opacity="0.9" transform="rotate(-18 40 195)"/><ellipse cx="43" cy="199" rx="2.2" ry="1.3" fill="#c8f0a0" opacity="0.8" transform="rotate(21 43 199)"/><ellipse cx="8" cy="225" rx="3.2" ry="1.9" fill="#9be070" opacity="0.9" transform="rotate(-32 8 225)"/><ellipse cx="11" cy="229" rx="2.2" ry="1.3" fill="#c8f0a0" opacity="0.8" transform="rotate(18 11 229)"/><ellipse cx="38" cy="255" rx="3.2" ry="1.9" fill="#9be070" opacity="0.9" transform="rotate(43 38 255)"/><ellipse cx="41" cy="259" rx="2.2" ry="1.3" fill="#c8f0a0" opacity="0.8" transform="rotate(40 41 259)"/><ellipse cx="22" cy="15" rx="3.2" ry="1.9" fill="#9be070" opacity="0.9" transform="rotate(37 22 15)"/><ellipse cx="25" cy="19" rx="2.2" ry="1.3" fill="#c8f0a0" opacity="0.8" transform="rotate(49 25 19)"/><ellipse cx="30" cy="25" rx="3.2" ry="1.9" fill="#9be070" opacity="0.9" transform="rotate(-36 30 25)"/><ellipse cx="33" cy="29" rx="2.2" ry="1.3" fill="#c8f0a0" opacity="0.8" transform="rotate(43 33 29)"/><ellipse cx="18" cy="35" rx="3.2" ry="1.9" fill="#9be070" opacity="0.9" transform="rotate(-30 18 35)"/><ellipse cx="21" cy="39" rx="2.2" ry="1.3" fill="#c8f0a0" opacity="0.8" transform="rotate(44 21 39)"/><ellipse cx="35" cy="45" rx="3.2" ry="1.9" fill="#9be070" opacity="0.9" transform="rotate(-9 35 45)"/><ellipse cx="38" cy="49" rx="2.2" ry="1.3" fill="#c8f0a0" opacity="0.8" transform="rotate(34 38 49)"/><ellipse cx="25" cy="55" rx="3.2" ry="1.9" fill="#9be070" opacity="0.9" transform="rotate(42 25 55)"/><ellipse cx="28" cy="59" rx="2.2" ry="1.3" fill="#c8f0a0" opacity="0.8" transform="rotate(-31 28 59)"/><ellipse cx="15" cy="65" rx="3.2" ry="1.9" fill="#9be070" opacity="0.9" transform="rotate(-35 15 65)"/><ellipse cx="18" cy="69" rx="2.2" ry="1.3" fill="#c8f0a0" opacity="0.8" transform="rotate(6 18 69)"/><ellipse cx="28" cy="75" rx="3.2" ry="1.9" fill="#9be070" opacity="0.9" transform="rotate(3 28 75)"/><ellipse cx="31" cy="79" rx="2.2" ry="1.3" fill="#c8f0a0" opacity="0.8" transform="rotate(-15 31 79)"/><ellipse cx="20" cy="95" rx="3.2" ry="1.9" fill="#9be070" opacity="0.9" transform="rotate(33 20 95)"/><ellipse cx="23" cy="99" rx="2.2" ry="1.3" fill="#c8f0a0" opacity="0.8" transform="rotate(-57 23 99)"/><ellipse cx="33" cy="105" rx="3.2" ry="1.9" fill="#9be070" opacity="0.9" transform="rotate(-57 33 105)"/><ellipse cx="36" cy="109" rx="2.2" ry="1.3" fill="#c8f0a0" opacity="0.8" transform="rotate(41 36 109)"/><ellipse cx="12" cy="110" rx="3.2" ry="1.9" fill="#9be070" opacity="0.9" transform="rotate(-25 12 110)"/><ellipse cx="15" cy="114" rx="2.2" ry="1.3" fill="#c8f0a0" opacity="0.8" transform="rotate(0 15 114)"/><ellipse cx="26" cy="120" rx="3.2" ry="1.9" fill="#9be070" opacity="0.9" transform="rotate(-27 26 120)"/><ellipse cx="29" cy="124" rx="2.2" ry="1.3" fill="#c8f0a0" opacity="0.8" transform="rotate(-36 29 124)"/><ellipse cx="17" cy="140" rx="3.2" ry="1.9" fill="#9be070" opacity="0.9" transform="rotate(28 17 140)"/><ellipse cx="20" cy="144" rx="2.2" ry="1.3" fill="#c8f0a0" opacity="0.8" transform="rotate(17 20 144)"/><ellipse cx="30" cy="150" rx="3.2" ry="1.9" fill="#9be070" opacity="0.9" transform="rotate(-16 30 150)"/><ellipse cx="33" cy="154" rx="2.2" ry="1.3" fill="#c8f0a0" opacity="0.8" transform="rotate(-3 33 154)"/><ellipse cx="22" cy="160" rx="3.2" ry="1.9" fill="#9be070" opacity="0.9" transform="rotate(43 22 160)"/><ellipse cx="25" cy="164" rx="2.2" ry="1.3" fill="#c8f0a0" opacity="0.8" transform="rotate(59 25 164)"/><ellipse cx="14" cy="175" rx="3.2" ry="1.9" fill="#9be070" opacity="0.9" transform="rotate(32 14 175)"/><ellipse cx="17" cy="179" rx="2.2" ry="1.3" fill="#c8f0a0" opacity="0.8" transform="rotate(-16 17 179)"/><ellipse cx="27" cy="185" rx="3.2" ry="1.9" fill="#9be070" opacity="0.9" transform="rotate(-14 27 185)"/><ellipse cx="30" cy="189" rx="2.2" ry="1.3" fill="#c8f0a0" opacity="0.8" transform="rotate(-50 30 189)"/><ellipse cx="19" cy="200" rx="3.2" ry="1.9" fill="#9be070" opacity="0.9" transform="rotate(-32 19 200)"/><ellipse cx="22" cy="204" rx="2.2" ry="1.3" fill="#c8f0a0" opacity="0.8" transform="rotate(-47 22 204)"/><ellipse cx="33" cy="215" rx="3.2" ry="1.9" fill="#9be070" opacity="0.9" transform="rotate(-31 33 215)"/><ellipse cx="36" cy="219" rx="2.2" ry="1.3" fill="#c8f0a0" opacity="0.8" transform="rotate(0 36 219)"/><ellipse cx="24" cy="225" rx="3.2" ry="1.9" fill="#9be070" opacity="0.9" transform="rotate(-35 24 225)"/><ellipse cx="27" cy="229" rx="2.2" ry="1.3" fill="#c8f0a0" opacity="0.8" transform="rotate(-17 27 229)"/><ellipse cx="15" cy="235" rx="3.2" ry="1.9" fill="#9be070" opacity="0.9" transform="rotate(-34 15 235)"/><ellipse cx="18" cy="239" rx="2.2" ry="1.3" fill="#c8f0a0" opacity="0.8" transform="rotate(1 18 239)"/><ellipse cx="29" cy="245" rx="3.2" ry="1.9" fill="#9be070" opacity="0.9" transform="rotate(19 29 245)"/><ellipse cx="32" cy="249" rx="2.2" ry="1.3" fill="#c8f0a0" opacity="0.8" transform="rotate(55 32 249)"/><ellipse cx="21" cy="258" rx="3.2" ry="1.9" fill="#9be070" opacity="0.9" transform="rotate(18 21 258)"/><ellipse cx="24" cy="262" rx="2.2" ry="1.3" fill="#c8f0a0" opacity="0.8" transform="rotate(47 24 262)"/><ellipse cx="20" cy="48" rx="3.2" ry="1.9" fill="#9be070" opacity="0.9" transform="rotate(-60 20 48)"/><ellipse cx="23" cy="52" rx="2.2" ry="1.3" fill="#c8f0a0" opacity="0.8" transform="rotate(1 23 52)"/><ellipse cx="12" cy="85" rx="3.2" ry="1.9" fill="#9be070" opacity="0.9" transform="rotate(56 12 85)"/><ellipse cx="15" cy="89" rx="2.2" ry="1.3" fill="#c8f0a0" opacity="0.8" transform="rotate(23 15 89)"/><ellipse cx="24" cy="102" rx="3.2" ry="1.9" fill="#9be070" opacity="0.9" transform="rotate(-16 24 102)"/><ellipse cx="27" cy="106" rx="2.2" ry="1.3" fill="#c8f0a0" opacity="0.8" transform="rotate(42 27 106)"/><ellipse cx="20" cy="115" rx="3.2" ry="1.9" fill="#9be070" opacity="0.9" transform="rotate(22 20 115)"/><ellipse cx="23" cy="119" rx="2.2" ry="1.3" fill="#c8f0a0" opacity="0.8" transform="rotate(-50 23 119)"/><ellipse cx="28" cy="140" rx="3.2" ry="1.9" fill="#9be070" opacity="0.9" transform="rotate(46 28 140)"/><ellipse cx="31" cy="144" rx="2.2" ry="1.3" fill="#c8f0a0" opacity="0.8" transform="rotate(24 31 144)"/><ellipse cx="12" cy="155" rx="3.2" ry="1.9" fill="#9be070" opacity="0.9" transform="rotate(-45 12 155)"/><ellipse cx="15" cy="159" rx="2.2" ry="1.3" fill="#c8f0a0" opacity="0.8" transform="rotate(56 15 159)"/><ellipse cx="24" cy="168" rx="3.2" ry="1.9" fill="#9be070" opacity="0.9" transform="rotate(-11 24 168)"/><ellipse cx="27" cy="172" rx="2.2" ry="1.3" fill="#c8f0a0" opacity="0.8" transform="rotate(40 27 172)"/><ellipse cx="10" cy="205" rx="3.2" ry="1.9" fill="#9be070" opacity="0.9" transform="rotate(31 10 205)"/><ellipse cx="13" cy="209" rx="2.2" ry="1.3" fill="#c8f0a0" opacity="0.8" transform="rotate(36 13 209)"/><ellipse cx="22" cy="230" rx="3.2" ry="1.9" fill="#9be070" opacity="0.9" transform="rotate(-35 22 230)"/><ellipse cx="25" cy="234" rx="2.2" ry="1.3" fill="#c8f0a0" opacity="0.8" transform="rotate(1 25 234)"/><ellipse cx="30" cy="255" rx="3.2" ry="1.9" fill="#9be070" opacity="0.9" transform="rotate(53 30 255)"/><ellipse cx="33" cy="259" rx="2.2" ry="1.3" fill="#c8f0a0" opacity="0.8" transform="rotate(-38 33 259)"/><circle cx="25" cy="5" r="4.4" fill="#2e7a1e" opacity="0.35"/><circle cx="24" cy="4" r="3.2" fill="#a80c18"/><circle cx="22.3" cy="4.8" r="0.9" fill="#b00c18"/><circle cx="21.8" cy="4.5" r="0.9" fill="#c8101c"/><circle cx="24.2" cy="4.3" r="1.0" fill="#b00c18"/><circle cx="24.2" cy="3.6" r="1.5" fill="#b00c18"/><circle cx="23.4" cy="3.1" r="1.3" fill="#c8101c"/><circle cx="26.4" cy="4.3" r="1.4" fill="#e01a28"/><circle cx="21.2" cy="3.5" r="1.2" fill="#c8101c"/><circle cx="24.3" cy="3.4" r="1.1" fill="#f02c34"/><circle cx="21.7" cy="4.0" r="1.1" fill="#d81420"/><circle cx="23.7" cy="4.2" r="1.5" fill="#f02c34"/><circle cx="25.5" cy="2.9" r="0.5" fill="#ffc8c8" opacity="0.75"/><circle cx="24.6" cy="2.7" r="0.5" fill="#ffc8c8" opacity="0.75"/><circle cx="25.1" cy="1.8" r="0.5" fill="#ffc8c8" opacity="0.75"/><circle cx="24.3" cy="4.3" r="0.5" fill="#ffc8c8" opacity="0.75"/><circle cx="39" cy="28" r="7.2" fill="#2e7a1e" opacity="0.35"/><circle cx="38" cy="27" r="5.2" fill="#a80c18"/><circle cx="33.8" cy="26.7" r="2.3" fill="#d81420"/><circle cx="41.9" cy="27.1" r="1.6" fill="#b00c18"/><circle cx="37.6" cy="26.6" r="1.5" fill="#d81420"/><circle cx="35.7" cy="26.5" r="2.3" fill="#d81420"/><circle cx="38.9" cy="27.3" r="1.5" fill="#e01a28"/><circle cx="35.3" cy="26.9" r="2.3" fill="#e01a28"/><circle cx="35.2" cy="28.0" r="2.0" fill="#d81420"/><circle cx="38.4" cy="28.3" r="2.0" fill="#b00c18"/><circle cx="36.8" cy="26.9" r="2.0" fill="#f02c34"/><circle cx="41.8" cy="25.0" r="1.7" fill="#b00c18"/><circle cx="38.4" cy="27.4" r="1.9" fill="#e01a28"/><circle cx="37.0" cy="25.2" r="1.7" fill="#f02c34"/><circle cx="38.9" cy="23.0" r="0.7" fill="#ffc8c8" opacity="0.75"/><circle cx="39.8" cy="29.7" r="0.7" fill="#ffc8c8" opacity="0.75"/><circle cx="37.7" cy="26.5" r="0.7" fill="#ffc8c8" opacity="0.75"/><circle cx="41.3" cy="24.0" r="0.7" fill="#ffc8c8" opacity="0.75"/><circle cx="38.8" cy="31.3" r="0.7" fill="#ffc8c8" opacity="0.75"/><circle cx="16" cy="39" r="5.0" fill="#2e7a1e" opacity="0.35"/><circle cx="15" cy="38" r="3.6" fill="#a80c18"/><circle cx="13.7" cy="39.0" r="1.8" fill="#c8101c"/><circle cx="15.8" cy="39.2" r="1.4" fill="#f02c34"/><circle cx="13.9" cy="38.6" r="1.1" fill="#f02c34"/><circle cx="16.9" cy="38.2" r="1.3" fill="#e01a28"/><circle cx="13.7" cy="39.2" r="1.2" fill="#e01a28"/><circle cx="17.4" cy="40.0" r="1.2" fill="#e01a28"/><circle cx="15.8" cy="38.5" r="1.7" fill="#c8101c"/><circle cx="14.9" cy="38.4" r="1.3" fill="#f02c34"/><circle cx="13.5" cy="39.0" r="1.4" fill="#b00c18"/><circle cx="14.9" cy="37.7" r="1.0" fill="#c8101c"/><circle cx="14.8" cy="38.1" r="0.5" fill="#ffc8c8" opacity="0.75"/><circle cx="16.9" cy="37.2" r="0.5" fill="#ffc8c8" opacity="0.75"/><circle cx="15.1" cy="37.7" r="0.5" fill="#ffc8c8" opacity="0.75"/><circle cx="15.1" cy="37.8" r="0.5" fill="#ffc8c8" opacity="0.75"/><circle cx="33" cy="58" r="12.7" fill="#2e7a1e" opacity="0.35"/><circle cx="32" cy="57" r="9.2" fill="#a80c18"/><circle cx="34.5" cy="54.0" r="3.2" fill="#d81420"/><circle cx="25.1" cy="60.9" r="3.8" fill="#e01a28"/><circle cx="30.0" cy="56.7" r="2.8" fill="#c8101c"/><circle cx="31.9" cy="58.6" r="4.5" fill="#f02c34"/><circle cx="30.3" cy="56.7" r="3.5" fill="#c8101c"/><circle cx="31.1" cy="63.9" r="4.6" fill="#e01a28"/><circle cx="38.3" cy="57.6" r="3.7" fill="#c8101c"/><circle cx="29.9" cy="56.8" r="3.5" fill="#b00c18"/><circle cx="29.4" cy="53.1" r="4.4" fill="#d81420"/><circle cx="31.3" cy="58.7" r="3.0" fill="#c8101c"/><circle cx="35.0" cy="51.7" r="3.8" fill="#b00c18"/><circle cx="40.5" cy="56.4" r="4.3" fill="#e01a28"/><circle cx="37.8" cy="59.7" r="3.1" fill="#c8101c"/><circle cx="37.4" cy="59.0" r="3.3" fill="#d81420"/><circle cx="30.8" cy="54.9" r="3.0" fill="#f02c34"/><circle cx="33.5" cy="57.4" r="3.1" fill="#e01a28"/><circle cx="31.3" cy="65.3" r="4.5" fill="#d81420"/><circle cx="31.9" cy="57.2" r="1.2" fill="#ffc8c8" opacity="0.75"/><circle cx="33.3" cy="55.8" r="1.2" fill="#ffc8c8" opacity="0.75"/><circle cx="33.1" cy="59.5" r="1.2" fill="#ffc8c8" opacity="0.75"/><circle cx="33.9" cy="58.1" r="1.2" fill="#ffc8c8" opacity="0.75"/><circle cx="30.9" cy="55.3" r="1.2" fill="#ffc8c8" opacity="0.75"/><circle cx="32.1" cy="56.3" r="1.2" fill="#ffc8c8" opacity="0.75"/><circle cx="32.5" cy="55.9" r="1.2" fill="#ffc8c8" opacity="0.75"/><circle cx="19" cy="73" r="6.6" fill="#2e7a1e" opacity="0.35"/><circle cx="18" cy="72" r="4.8" fill="#a80c18"/><circle cx="16.5" cy="71.1" r="1.6" fill="#c8101c"/><circle cx="21.7" cy="74.2" r="2.2" fill="#c8101c"/><circle cx="16.2" cy="69.3" r="2.3" fill="#b00c18"/><circle cx="18.3" cy="68.8" r="1.9" fill="#f02c34"/><circle cx="17.5" cy="69.1" r="1.4" fill="#d81420"/><circle cx="15.7" cy="69.6" r="2.2" fill="#c8101c"/><circle cx="20.9" cy="70.2" r="1.9" fill="#e01a28"/><circle cx="19.2" cy="69.7" r="2.3" fill="#c8101c"/><circle cx="18.2" cy="72.1" r="2.0" fill="#e01a28"/><circle cx="16.5" cy="73.4" r="1.4" fill="#e01a28"/><circle cx="15.9" cy="69.8" r="1.8" fill="#e01a28"/><circle cx="17.7" cy="72.1" r="2.3" fill="#d81420"/><circle cx="19.9" cy="73.2" r="0.6" fill="#ffc8c8" opacity="0.75"/><circle cx="17.9" cy="70.0" r="0.6" fill="#ffc8c8" opacity="0.75"/><circle cx="19.3" cy="68.7" r="0.6" fill="#ffc8c8" opacity="0.75"/><circle cx="18.3" cy="75.2" r="0.6" fill="#ffc8c8" opacity="0.75"/><circle cx="18.3" cy="74.7" r="0.6" fill="#ffc8c8" opacity="0.75"/><circle cx="29" cy="90" r="7.2" fill="#2e7a1e" opacity="0.35"/><circle cx="28" cy="89" r="5.2" fill="#a80c18"/><circle cx="24.0" cy="90.0" r="1.5" fill="#f02c34"/><circle cx="28.3" cy="86.0" r="2.2" fill="#e01a28"/><circle cx="26.7" cy="88.1" r="2.2" fill="#f02c34"/><circle cx="27.5" cy="88.6" r="2.0" fill="#b00c18"/><circle cx="27.6" cy="92.3" r="2.2" fill="#b00c18"/><circle cx="27.4" cy="91.4" r="2.0" fill="#b00c18"/><circle cx="28.5" cy="84.2" r="2.1" fill="#f02c34"/><circle cx="32.5" cy="88.4" r="1.5" fill="#b00c18"/><circle cx="30.2" cy="90.1" r="2.6" fill="#f02c34"/><circle cx="24.6" cy="91.9" r="2.5" fill="#e01a28"/><circle cx="27.4" cy="88.7" r="2.0" fill="#f02c34"/><circle cx="30.7" cy="92.0" r="2.0" fill="#e01a28"/><circle cx="27.7" cy="88.0" r="0.7" fill="#ffc8c8" opacity="0.75"/><circle cx="29.8" cy="87.7" r="0.7" fill="#ffc8c8" opacity="0.75"/><circle cx="28.0" cy="89.0" r="0.7" fill="#ffc8c8" opacity="0.75"/><circle cx="26.0" cy="89.1" r="0.7" fill="#ffc8c8" opacity="0.75"/><circle cx="27.8" cy="89.6" r="0.7" fill="#ffc8c8" opacity="0.75"/><circle cx="37" cy="95" r="6.1" fill="#2e7a1e" opacity="0.35"/><circle cx="36" cy="94" r="4.4" fill="#a80c18"/><circle cx="35.3" cy="95.1" r="2.0" fill="#e01a28"/><circle cx="35.4" cy="95.2" r="1.6" fill="#c8101c"/><circle cx="35.1" cy="90.4" r="1.5" fill="#f02c34"/><circle cx="37.5" cy="94.6" r="2.1" fill="#e01a28"/><circle cx="34.9" cy="95.4" r="1.5" fill="#e01a28"/><circle cx="36.0" cy="94.2" r="1.9" fill="#c8101c"/><circle cx="36.0" cy="95.1" r="1.7" fill="#c8101c"/><circle cx="36.5" cy="90.8" r="1.6" fill="#e01a28"/><circle cx="37.0" cy="91.6" r="2.1" fill="#d81420"/><circle cx="33.2" cy="93.1" r="1.3" fill="#b00c18"/><circle cx="33.0" cy="94.9" r="1.8" fill="#f02c34"/><circle cx="32.5" cy="94.3" r="0.6" fill="#ffc8c8" opacity="0.75"/><circle cx="35.4" cy="93.8" r="0.6" fill="#ffc8c8" opacity="0.75"/><circle cx="35.1" cy="94.6" r="0.6" fill="#ffc8c8" opacity="0.75"/><circle cx="35.9" cy="96.8" r="0.6" fill="#ffc8c8" opacity="0.75"/><circle cx="18" cy="133" r="11.6" fill="#2e7a1e" opacity="0.35"/><circle cx="17" cy="132" r="8.4" fill="#a80c18"/><circle cx="15.2" cy="129.4" r="2.8" fill="#b00c18"/><circle cx="14.1" cy="130.9" r="2.6" fill="#c8101c"/><circle cx="20.5" cy="133.8" r="3.8" fill="#d81420"/><circle cx="18.3" cy="139.0" r="4.2" fill="#b00c18"/><circle cx="13.1" cy="133.9" r="2.8" fill="#c8101c"/><circle cx="16.6" cy="132.6" r="2.8" fill="#f02c34"/><circle cx="17.6" cy="130.5" r="2.3" fill="#b00c18"/><circle cx="12.6" cy="135.9" r="2.7" fill="#f02c34"/><circle cx="16.7" cy="132.4" r="2.8" fill="#f02c34"/><circle cx="19.8" cy="134.8" r="3.5" fill="#c8101c"/><circle cx="22.9" cy="135.9" r="3.0" fill="#b00c18"/><circle cx="14.8" cy="133.0" r="3.8" fill="#e01a28"/><circle cx="19.3" cy="134.4" r="3.8" fill="#b00c18"/><circle cx="20.8" cy="131.2" r="2.4" fill="#d81420"/><circle cx="21.7" cy="126.0" r="2.8" fill="#e01a28"/><circle cx="17.2" cy="133.2" r="4.1" fill="#e01a28"/><circle cx="22.0" cy="130.1" r="1.1" fill="#ffc8c8" opacity="0.75"/><circle cx="13.6" cy="127.5" r="1.1" fill="#ffc8c8" opacity="0.75"/><circle cx="13.1" cy="133.1" r="1.1" fill="#ffc8c8" opacity="0.75"/><circle cx="22.6" cy="133.4" r="1.1" fill="#ffc8c8" opacity="0.75"/><circle cx="17.7" cy="138.7" r="1.1" fill="#ffc8c8" opacity="0.75"/><circle cx="15.6" cy="130.2" r="1.1" fill="#ffc8c8" opacity="0.75"/><circle cx="18.3" cy="133.3" r="1.1" fill="#ffc8c8" opacity="0.75"/><circle cx="27" cy="176" r="8.8" fill="#2e7a1e" opacity="0.35"/><circle cx="26" cy="175" r="6.4" fill="#a80c18"/><circle cx="23.3" cy="171.8" r="1.9" fill="#e01a28"/><circle cx="24.2" cy="180.4" r="2.0" fill="#f02c34"/><circle cx="26.6" cy="178.6" r="1.8" fill="#f02c34"/><circle cx="27.7" cy="175.0" r="2.2" fill="#c8101c"/><circle cx="24.6" cy="175.2" r="2.1" fill="#b00c18"/><circle cx="25.5" cy="173.2" r="1.8" fill="#b00c18"/><circle cx="28.9" cy="172.4" r="1.9" fill="#c8101c"/><circle cx="23.2" cy="170.2" r="2.1" fill="#e01a28"/><circle cx="24.6" cy="170.9" r="2.3" fill="#b00c18"/><circle cx="27.5" cy="179.5" r="2.8" fill="#d81420"/><circle cx="28.7" cy="176.2" r="2.0" fill="#c8101c"/><circle cx="26.2" cy="176.3" r="2.9" fill="#f02c34"/><circle cx="28.9" cy="177.4" r="2.6" fill="#c8101c"/><circle cx="20.6" cy="175.5" r="1.8" fill="#d81420"/><circle cx="27.3" cy="176.8" r="0.8" fill="#ffc8c8" opacity="0.75"/><circle cx="27.3" cy="180.3" r="0.8" fill="#ffc8c8" opacity="0.75"/><circle cx="26.2" cy="175.2" r="0.8" fill="#ffc8c8" opacity="0.75"/><circle cx="28.0" cy="175.8" r="0.8" fill="#ffc8c8" opacity="0.75"/><circle cx="30.0" cy="172.0" r="0.8" fill="#ffc8c8" opacity="0.75"/><circle cx="25.4" cy="169.4" r="0.8" fill="#ffc8c8" opacity="0.75"/><circle cx="17" cy="194" r="6.1" fill="#2e7a1e" opacity="0.35"/><circle cx="16" cy="193" r="4.4" fill="#a80c18"/><circle cx="17.2" cy="192.4" r="1.4" fill="#d81420"/><circle cx="16.0" cy="192.9" r="1.9" fill="#b00c18"/><circle cx="18.2" cy="189.6" r="1.6" fill="#e01a28"/><circle cx="17.2" cy="193.0" r="1.6" fill="#e01a28"/><circle cx="13.1" cy="191.8" r="1.6" fill="#f02c34"/><circle cx="16.8" cy="191.4" r="1.3" fill="#b00c18"/><circle cx="16.7" cy="195.1" r="1.7" fill="#f02c34"/><circle cx="13.6" cy="195.8" r="1.2" fill="#b00c18"/><circle cx="16.0" cy="195.6" r="1.6" fill="#b00c18"/><circle cx="16.3" cy="193.1" r="2.1" fill="#f02c34"/><circle cx="16.1" cy="193.2" r="1.8" fill="#f02c34"/><circle cx="15.5" cy="196.7" r="0.6" fill="#ffc8c8" opacity="0.75"/><circle cx="15.3" cy="192.3" r="0.6" fill="#ffc8c8" opacity="0.75"/><circle cx="15.7" cy="191.8" r="0.6" fill="#ffc8c8" opacity="0.75"/><circle cx="16.0" cy="193.0" r="0.6" fill="#ffc8c8" opacity="0.75"/><circle cx="32" cy="211" r="12.7" fill="#2e7a1e" opacity="0.35"/><circle cx="31" cy="210" r="9.2" fill="#a80c18"/><circle cx="31.3" cy="202.1" r="3.8" fill="#e01a28"/><circle cx="33.0" cy="210.3" r="3.5" fill="#b00c18"/><circle cx="34.2" cy="209.0" r="3.0" fill="#b00c18"/><circle cx="31.5" cy="208.9" r="3.6" fill="#e01a28"/><circle cx="33.1" cy="204.0" r="4.2" fill="#c8101c"/><circle cx="28.8" cy="208.2" r="3.2" fill="#f02c34"/><circle cx="32.1" cy="205.0" r="3.6" fill="#b00c18"/><circle cx="31.0" cy="207.9" r="2.7" fill="#e01a28"/><circle cx="26.3" cy="210.5" r="2.9" fill="#b00c18"/><circle cx="37.3" cy="204.3" r="3.1" fill="#e01a28"/><circle cx="31.9" cy="213.5" r="4.6" fill="#b00c18"/><circle cx="31.5" cy="211.0" r="3.5" fill="#c8101c"/><circle cx="30.9" cy="202.7" r="3.9" fill="#e01a28"/><circle cx="31.5" cy="207.5" r="3.1" fill="#f02c34"/><circle cx="26.6" cy="214.6" r="2.9" fill="#c8101c"/><circle cx="31.8" cy="211.9" r="3.1" fill="#d81420"/><circle cx="31.2" cy="210.5" r="3.1" fill="#c8101c"/><circle cx="29.1" cy="209.9" r="1.2" fill="#ffc8c8" opacity="0.75"/><circle cx="32.9" cy="205.1" r="1.2" fill="#ffc8c8" opacity="0.75"/><circle cx="31.8" cy="210.0" r="1.2" fill="#ffc8c8" opacity="0.75"/><circle cx="24.5" cy="211.0" r="1.2" fill="#ffc8c8" opacity="0.75"/><circle cx="35.0" cy="203.8" r="1.2" fill="#ffc8c8" opacity="0.75"/><circle cx="33.3" cy="210.6" r="1.2" fill="#ffc8c8" opacity="0.75"/><circle cx="32.1" cy="211.0" r="1.2" fill="#ffc8c8" opacity="0.75"/><circle cx="38" cy="242" r="7.7" fill="#2e7a1e" opacity="0.35"/><circle cx="37" cy="241" r="5.6" fill="#a80c18"/><circle cx="40.0" cy="240.5" r="2.7" fill="#f02c34"/><circle cx="36.1" cy="240.9" r="2.3" fill="#e01a28"/><circle cx="39.5" cy="242.9" r="2.3" fill="#c8101c"/><circle cx="38.7" cy="241.4" r="1.6" fill="#f02c34"/><circle cx="40.7" cy="241.9" r="2.7" fill="#e01a28"/><circle cx="37.9" cy="239.1" r="2.0" fill="#d81420"/><circle cx="36.6" cy="242.0" r="2.5" fill="#d81420"/><circle cx="34.9" cy="241.2" r="2.5" fill="#d81420"/><circle cx="38.6" cy="243.3" r="2.4" fill="#b00c18"/><circle cx="36.3" cy="239.0" r="1.9" fill="#f02c34"/><circle cx="36.8" cy="241.1" r="2.5" fill="#f02c34"/><circle cx="36.9" cy="241.0" r="2.5" fill="#f02c34"/><circle cx="35.7" cy="239.4" r="2.1" fill="#e01a28"/><circle cx="36.3" cy="241.3" r="0.7" fill="#ffc8c8" opacity="0.75"/><circle cx="37.3" cy="241.3" r="0.7" fill="#ffc8c8" opacity="0.75"/><circle cx="35.4" cy="240.2" r="0.7" fill="#ffc8c8" opacity="0.75"/><circle cx="37.1" cy="240.4" r="0.7" fill="#ffc8c8" opacity="0.75"/><circle cx="37.7" cy="241.2" r="0.7" fill="#ffc8c8" opacity="0.75"/><circle cx="24" cy="262" r="4.4" fill="#2e7a1e" opacity="0.35"/><circle cx="23" cy="261" r="3.2" fill="#a80c18"/><circle cx="23.4" cy="259.9" r="1.3" fill="#f02c34"/><circle cx="23.0" cy="260.5" r="1.1" fill="#c8101c"/><circle cx="20.2" cy="260.6" r="1.0" fill="#b00c18"/><circle cx="23.1" cy="258.6" r="1.5" fill="#f02c34"/><circle cx="25.0" cy="263.0" r="1.6" fill="#b00c18"/><circle cx="22.3" cy="262.7" r="1.3" fill="#e01a28"/><circle cx="24.5" cy="259.9" r="1.5" fill="#c8101c"/><circle cx="21.4" cy="259.0" r="1.3" fill="#d81420"/><circle cx="24.4" cy="259.0" r="1.0" fill="#c8101c"/><circle cx="25.7" cy="261.7" r="1.0" fill="#f02c34"/><circle cx="23.5" cy="261.5" r="0.5" fill="#ffc8c8" opacity="0.75"/><circle cx="22.6" cy="258.5" r="0.5" fill="#ffc8c8" opacity="0.75"/><circle cx="24.5" cy="261.4" r="0.5" fill="#ffc8c8" opacity="0.75"/><circle cx="23.0" cy="260.9" r="0.5" fill="#ffc8c8" opacity="0.75"/></svg><div class="ttl1" style="top:17.5px">ФОРМУВАННЯ ТВОРЧОЇ УЯВИ МАЙБУТНІХ  ВЧИТЕЛІВ</div><div class="ttl1" style="top:26.5px">МУЗИЧНОГО МИСТЕЦТВА У ПРОЦЕСІ ПРОФЕСІЙНОЇ</div><div class="ttl1" style="top:36.0px">ПІДГОТОВКИ ЯК ПСИХОЛОГО-ПЕДАГОГІЧНА ПРОБЛЕМА</div><div class="bl1" style="left:90.5px;top:64.10px;width:243.5px;"><b>Поняття уяви</b></div><div class="bl1 j" style="left:74.0px;top:73.46px;width:260.0px;">Уява – психічний процес, що полягає у створенні нових образів на</div><div class="bl1" style="left:74.0px;top:82.82px;width:260.0px;">основі попереднього досвіду.</div><div class="bl1" style="left:74.0px;top:92.18px;width:260.0px;">Уява пов'язана з мисленням і пам'яттю.</div><div class="bl1 j" style="left:90.5px;top:101.54px;width:243.5px;">Образи уяви виникають внаслідок аналізу і синтезу вражень,</div><div class="bl1 j" style="left:74.0px;top:110.90px;width:260.0px;">отриманих людиною раніше, та їх перетворення у нові поєднання</div><div class="bl1" style="left:74.0px;top:120.26px;width:260.0px;">і структури, яких не було в досвіді людини.</div><div class="bl1 j" style="left:74.0px;top:129.62px;width:260.0px;">Уява завжди спрямована на практичну діяльність людини, тому</div><div class="bl1" style="left:74.0px;top:138.98px;width:260.0px;">вона тісно пов'язана з діяльністю.</div><div class="bl1 j" style="left:90.5px;top:148.34px;width:243.5px;">Важливою складовою творчого процесу є <b>художня уява</b>,</div><div class="bl1 j" style="left:74.0px;top:157.70px;width:260.0px;">яка дозволяє створювати нові образи та художні композиції у</div><div class="bl1" style="left:74.0px;top:167.06px;width:260.0px;">творчості.</div><div class="bl1 j" style="left:90.5px;top:176.42px;width:243.5px;">Художня уява особливо важлива для вчителя музичного</div><div class="bl1" style="left:74.0px;top:185.78px;width:260.0px;">мистецтва та розвитку учнів.</div><div class="bl1" style="left:74.0px;top:195.14px;width:260.0px;">на уроках музики.</div><div class="t" style="left:55.5px;top:249px;font-family:'Liberation Serif',serif;font-size:7.6px;color:#4a4a55">10.12.2025</div><div class="a" style="left:286.0px;top:239.2px;width:22px;height:22px;border-radius:50%;background:radial-gradient(circle at 50% 40%,#8ee05a 0%,#58b830 45%,#2f8a1c 80%,#7ccf58 100%)"></div><div class="a" style="left:319.4px;top:239.2px;width:22px;height:22px;border-radius:50%;background:radial-gradient(circle at 50% 40%,#8ee05a 0%,#58b830 45%,#2f8a1c 80%,#7ccf58 100%)"></div></div></div>
<div class="a" style="left:79px;top:320px;width:40px;height:8px;background:#fff;border:0.6px solid #ccc"></div>
<div class="t" style="left:80px;top:320.5px;font-size:5px;color:#444">[Без заголовка]</div>
<svg style="left:73px;top:311px" width="5" height="8"><path d="M0.5 0.5 V6.5 L2 5 L3.2 7.5 L4 7 L2.8 4.6 L4.5 4.5 Z" fill="#fff" stroke="#333" stroke-width="0.5"/></svg>
<div class="t" style="left:6px;top:346px;font-size:6px;color:#666">13</div>
<div class="t" style="left:9px;top:354px;font-size:5px;color:#666">★</div>
<div class="a" style="left:19.5px;top:347.5px;width:110.4px;height:83px;border:0.6px solid #c8c8c8"></div><div class="thumb t13" style="left:20px;top:348px;transform:scale(0.309)"><div class="a" style="left:0;top:0;width:354px;height:266px;overflow:hidden"><div class="a" style="left:61px;top:0;width:293px;height:266px;background:radial-gradient(ellipse 60px 40px at 40px 60px,rgba(200,175,130,0.25),transparent),radial-gradient(ellipse 80px 50px at 230px 150px,rgba(205,180,135,0.22),transparent),radial-gradient(ellipse 70px 60px at 120px 220px,rgba(200,175,130,0.2),transparent),radial-gradient(ellipse 90px 40px at 250px 30px,rgba(255,245,225,0.35),transparent),radial-gradient(ellipse 100px 60px at 100px 120px,rgba(255,248,230,0.3),transparent),#ebd9bb"></div><svg style="left:61px;top:0" width="293" height="266"><filter id="pn" x="0" y="0" width="100%" height="100%"><feTurbulence type="fractalNoise" baseFrequency="0.09" numOctaves="2" seed="3"/><feColorMatrix values="0 0 0 0 0.55  0 0 0 0 0.42  0 0 0 0 0.25  0 0 0 -1.6 1.05"/></filter><rect width="293" height="266" filter="url(#pn)" opacity="0.35"/></svg><svg style="left:0;top:0" width="62" height="266"><rect x="0" y="0" width="51" height="266" fill="url(#gs)"/><rect x="51" y="0" width="8" height="266" fill="url(#gsh)"/><ellipse cx="27" cy="26" rx="12" ry="13" fill="url(#yf)"/><ellipse cx="24" cy="23" rx="5" ry="5" fill="#fff27a" opacity="0.6"/><ellipse cx="27" cy="87" rx="12" ry="13" fill="url(#yf)"/><ellipse cx="24" cy="84" rx="5" ry="5" fill="#fff27a" opacity="0.6"/><ellipse cx="27" cy="152" rx="12" ry="13" fill="url(#yf)"/><ellipse cx="24" cy="149" rx="5" ry="5" fill="#fff27a" opacity="0.6"/><ellipse cx="27" cy="217" rx="12" ry="13" fill="url(#yf)"/><ellipse cx="24" cy="214" rx="5" ry="5" fill="#fff27a" opacity="0.6"/></svg><div class="a" style="left:78px;top:31px;width:226px;height:24px;background:rgba(110,160,190,0.45)"></div><div class="ttl1" style="top:31.5px;left:78px;width:226px;font-size:7px;color:#1e4a6a">ФОРМУВАННЯ ТВОРЧОЇ УЯВИ МАЙБУТНІХ  ВЧИТЕЛІВ</div><div class="ttl1" style="top:39.5px;left:78px;width:226px;font-size:7px;color:#1e4a6a">МУЗИЧНОГО МИСТЕЦТВА У ПРОЦЕСІ ПРОФЕСІЙНОЇ</div><div class="ttl1" style="top:47.5px;left:78px;width:226px;font-size:7px;color:#1e4a6a">ПІДГОТОВКИ ЯК ПСИХОЛОГО-ПЕДАГОГІЧНА ПРОБЛЕМА</div><svg style="left:318px;top:32px" width="10" height="42"><path d="M5 0 V40 M2 34 L5 41 L8 34" stroke="#5a4020" stroke-width="2.5" fill="none"/></svg><div class="bl1" style="left:90.5px;top:76.10px;width:243.5px;"><b>В основі діяльності уяви лежить процес аналізу і синтезу</b></div><div class="bl1 j" style="left:74.0px;top:86.40px;width:260.0px;"><b>образів, які виникають у свідомості людини під впливом</b></div><div class="bl1 j" style="left:74.0px;top:96.70px;width:260.0px;"><b>різноманітних подразників. Основні форми синтезу:</b></div><div class="bl1 j" style="left:74.0px;top:107.00px;width:260.0px;"><b>аглютинація, гіперболізація, схематизація, типізація,</b></div><div class="bl1" style="left:74.0px;top:117.30px;width:260.0px;"><b>акцентування; реконструювання образів.</b></div><div class="bl1 j" style="left:90.5px;top:127.60px;width:243.5px;"><b>Уява тісно пов'язана з емоційною сферою людини, її</b></div><div class="bl1 j" style="left:74.0px;top:137.90px;width:260.0px;"><b>потребами, інтересами, мотивами і переживаннями, які</b></div><div class="bl1 j" style="left:74.0px;top:148.20px;width:260.0px;"><b>впливають на активність і продуктивність творчого</b></div><div class="bl1" style="left:74.0px;top:158.50px;width:260.0px;"><b>процесу та діяльності.</b></div><div class="bl1 j" style="left:90.5px;top:168.80px;width:243.5px;"><b>Творча уява майбутнього вчителя музики проявляється</b></div><div class="bl1 j" style="left:74.0px;top:179.10px;width:260.0px;"><b>в інтерпретації музичних творів, створенні художніх</b></div><div class="bl1 j" style="left:74.0px;top:189.40px;width:260.0px;"><b>образів і пошуку нових методичних рішень на уроках,</b></div><div class="bl1 j" style="left:74.0px;top:199.70px;width:260.0px;"><b>а також у педагогічній діяльності, яка потребує</b></div><div class="bl1" style="left:74.0px;top:210.00px;width:260.0px;"><b>постійного творчого пошуку.</b></div><div class="a" style="left:70px;top:78px;width:4px;height:4px;background:#6a5a3a"></div><div class="a" style="left:70px;top:119px;width:4px;height:4px;background:#6a5a3a"></div><div class="a" style="left:70px;top:160px;width:4px;height:4px;background:#6a5a3a"></div><div class="a" style="left:286.0px;top:239.2px;width:22px;height:22px;border-radius:50%;background:radial-gradient(circle at 50% 40%,#8ee05a 0%,#58b830 45%,#2f8a1c 80%,#7ccf58 100%)"></div><div class="a" style="left:319.4px;top:239.2px;width:22px;height:22px;border-radius:50%;background:radial-gradient(circle at 50% 40%,#8ee05a 0%,#58b830 45%,#2f8a1c 80%,#7ccf58 100%)"></div></div></div>

<!-- slide area -->
<div class="a" style="left:148px;top:145px;width:563px;height:276px;background:#e6e6e6"></div>
<div class="a" style="left:702px;top:145px;width:9px;height:276px;background:#e9e9e9"></div>
<div class="a" style="left:702.5px;top:148px;width:7px;height:6px;background:#fafafa"></div>
<div class="t" style="left:704px;top:148.5px;font-size:4.5px;color:#666">▲</div>
<div class="a" style="left:703px;top:238.5px;width:6px;height:7px;background:#fbfbfb"></div>
<div class="a" style="left:712px;top:257px;width:3px;height:26px;border-radius:1.5px;background:#6e6e70"></div>
<div class="t" style="left:704px;top:391px;font-size:4.5px;color:#666">▼</div>
<div class="t" style="left:704px;top:399px;font-size:4.5px;color:#777">⇞</div>
<div class="t" style="left:704px;top:406px;font-size:4.5px;color:#777">⇟</div>
<div class="slide" style="left:249px;top:150.5px"><div class="a" style="left:0;top:0;width:354px;height:266px;overflow:hidden"><div class="a" style="left:61px;top:0;width:293px;height:266px;background:radial-gradient(ellipse 60px 40px at 40px 60px,rgba(200,175,130,0.25),transparent),radial-gradient(ellipse 80px 50px at 230px 150px,rgba(205,180,135,0.22),transparent),radial-gradient(ellipse 70px 60px at 120px 220px,rgba(200,175,130,0.2),transparent),radial-gradient(ellipse 90px 40px at 250px 30px,rgba(255,245,225,0.35),transparent),radial-gradient(ellipse 100px 60px at 100px 120px,rgba(255,248,230,0.3),transparent),#ebd9bb"></div><svg style="left:61px;top:0" width="293" height="266"><filter id="pn" x="0" y="0" width="100%" height="100%"><feTurbulence type="fractalNoise" baseFrequency="0.09" numOctaves="2" seed="3"/><feColorMatrix values="0 0 0 0 0.55  0 0 0 0 0.42  0 0 0 0 0.25  0 0 0 -1.6 1.05"/></filter><rect width="293" height="266" filter="url(#pn)" opacity="0.35"/></svg><svg style="left:0;top:0" width="62" height="266"><defs><linearGradient id="gs" x1="0" x2="1" y1="0" y2="0"><stop offset="0" stop-color="#72c944"/><stop offset="0.12" stop-color="#64c03a"/><stop offset="0.27" stop-color="#3c9a26"/><stop offset="0.4" stop-color="#74cc46"/><stop offset="0.6" stop-color="#7ad04a"/><stop offset="0.78" stop-color="#3a9826"/><stop offset="0.9" stop-color="#5cbc36"/><stop offset="1" stop-color="#70c842"/></linearGradient><linearGradient id="gsh" x1="0" x2="1" y1="0" y2="0"><stop offset="0" stop-color="#9aa89a"/><stop offset="0.55" stop-color="#e6e8e8"/><stop offset="1" stop-color="#f6f6f6"/></linearGradient><radialGradient id="rf"><stop offset="0" stop-color="#ff5a5a"/><stop offset="0.5" stop-color="#d81a22"/><stop offset="1" stop-color="#a01018"/></radialGradient><radialGradient id="yf"><stop offset="0" stop-color="#fff060"/><stop offset="0.6" stop-color="#f4d020"/><stop offset="1" stop-color="#d8a010"/></radialGradient></defs><rect x="0" y="0" width="48" height="266" fill="url(#gs)"/><rect x="48" y="0" width="14" height="266" fill="url(#gsh)"/><path d="M24 0 Q14 30 28 60 Q40 90 20 130 Q10 160 26 190 Q38 220 28 266" stroke="#3a8a22" stroke-width="1.2" fill="none" opacity="0.8"/><ellipse cx="22.4" cy="2.0" rx="2.4" ry="1.3" fill="#5ab832" transform="rotate(31 22.4 2.0)"/><ellipse cx="28.7" cy="6.4" rx="2.4" ry="1.3" fill="#3c9a24" transform="rotate(67 28.7 6.4)"/><ellipse cx="22.6" cy="10.8" rx="2.4" ry="1.3" fill="#3c9a24" transform="rotate(59 22.6 10.8)"/><ellipse cx="25.7" cy="15.2" rx="2.4" ry="1.3" fill="#3c9a24" transform="rotate(41 25.7 15.2)"/><ellipse cx="29.9" cy="19.6" rx="2.4" ry="1.3" fill="#5ab832" transform="rotate(-47 29.9 19.6)"/><ellipse cx="32.7" cy="24.0" rx="2.4" ry="1.3" fill="#3c9a24" transform="rotate(-39 32.7 24.0)"/><ellipse cx="38.9" cy="28.4" rx="2.4" ry="1.3" fill="#3c9a24" transform="rotate(31 38.9 28.4)"/><ellipse cx="26.7" cy="32.8" rx="2.4" ry="1.3" fill="#5ab832" transform="rotate(-59 26.7 32.8)"/><ellipse cx="33.7" cy="37.2" rx="2.4" ry="1.3" fill="#5ab832" transform="rotate(4 33.7 37.2)"/><ellipse cx="31.4" cy="41.6" rx="2.4" ry="1.3" fill="#3c9a24" transform="rotate(8 31.4 41.6)"/><ellipse cx="32.7" cy="46.0" rx="2.4" ry="1.3" fill="#5ab832" transform="rotate(-44 32.7 46.0)"/><ellipse cx="31.9" cy="50.4" rx="2.4" ry="1.3" fill="#5ab832" transform="rotate(25 31.9 50.4)"/><ellipse cx="23.8" cy="54.8" rx="2.4" ry="1.3" fill="#3c9a24" transform="rotate(-55 23.8 54.8)"/><ellipse cx="29.6" cy="59.2" rx="2.4" ry="1.3" fill="#c0f090" transform="rotate(66 29.6 59.2)"/><ellipse cx="25.2" cy="63.6" rx="2.4" ry="1.3" fill="#a8e880" transform="rotate(49 25.2 63.6)"/><ellipse cx="25.7" cy="68.0" rx="2.4" ry="1.3" fill="#c0f090" transform="rotate(22 25.7 68.0)"/><ellipse cx="19.9" cy="72.4" rx="2.4" ry="1.3" fill="#5ab832" transform="rotate(-8 19.9 72.4)"/><ellipse cx="15.1" cy="76.8" rx="2.4" ry="1.3" fill="#a8e880" transform="rotate(64 15.1 76.8)"/><ellipse cx="19.2" cy="81.2" rx="2.4" ry="1.3" fill="#a8e880" transform="rotate(44 19.2 81.2)"/><ellipse cx="14.9" cy="85.6" rx="2.4" ry="1.3" fill="#3c9a24" transform="rotate(-40 14.9 85.6)"/><ellipse cx="16.8" cy="90.0" rx="2.4" ry="1.3" fill="#5ab832" transform="rotate(17 16.8 90.0)"/><ellipse cx="10.9" cy="94.4" rx="2.4" ry="1.3" fill="#c0f090" transform="rotate(37 10.9 94.4)"/><ellipse cx="8.8" cy="98.8" rx="2.4" ry="1.3" fill="#3c9a24" transform="rotate(10 8.8 98.8)"/><ellipse cx="12.8" cy="103.2" rx="2.4" ry="1.3" fill="#a8e880" transform="rotate(57 12.8 103.2)"/><ellipse cx="16.3" cy="107.6" rx="2.4" ry="1.3" fill="#c0f090" transform="rotate(-53 16.3 107.6)"/><ellipse cx="20.4" cy="112.0" rx="2.4" ry="1.3" fill="#a8e880" transform="rotate(51 20.4 112.0)"/><ellipse cx="19.2" cy="116.4" rx="2.4" ry="1.3" fill="#3c9a24" transform="rotate(-55 19.2 116.4)"/><ellipse cx="20.8" cy="120.8" rx="2.4" ry="1.3" fill="#a8e880" transform="rotate(44 20.8 120.8)"/><ellipse cx="16.0" cy="125.2" rx="2.4" ry="1.3" fill="#c0f090" transform="rotate(18 16.0 125.2)"/><ellipse cx="13.9" cy="129.6" rx="2.4" ry="1.3" fill="#c0f090" transform="rotate(20 13.9 129.6)"/><ellipse cx="17.6" cy="134.0" rx="2.4" ry="1.3" fill="#3c9a24" transform="rotate(56 17.6 134.0)"/><ellipse cx="17.9" cy="138.4" rx="2.4" ry="1.3" fill="#a8e880" transform="rotate(-37 17.9 138.4)"/><ellipse cx="29.2" cy="142.8" rx="2.4" ry="1.3" fill="#c0f090" transform="rotate(30 29.2 142.8)"/><ellipse cx="33.4" cy="147.2" rx="2.4" ry="1.3" fill="#c0f090" transform="rotate(-50 33.4 147.2)"/><ellipse cx="24.5" cy="151.6" rx="2.4" ry="1.3" fill="#c0f090" transform="rotate(70 24.5 151.6)"/><ellipse cx="27.4" cy="156.0" rx="2.4" ry="1.3" fill="#5ab832" transform="rotate(40 27.4 156.0)"/><ellipse cx="36.7" cy="160.4" rx="2.4" ry="1.3" fill="#a8e880" transform="rotate(36 36.7 160.4)"/><ellipse cx="39.2" cy="164.8" rx="2.4" ry="1.3" fill="#c0f090" transform="rotate(-11 39.2 164.8)"/><ellipse cx="28.0" cy="169.2" rx="2.4" ry="1.3" fill="#5ab832" transform="rotate(-32 28.0 169.2)"/><ellipse cx="29.2" cy="173.6" rx="2.4" ry="1.3" fill="#5ab832" transform="rotate(-67 29.2 173.6)"/><ellipse cx="32.5" cy="178.0" rx="2.4" ry="1.3" fill="#5ab832" transform="rotate(-3 32.5 178.0)"/><ellipse cx="29.1" cy="182.4" rx="2.4" ry="1.3" fill="#5ab832" transform="rotate(37 29.1 182.4)"/><ellipse cx="31.7" cy="186.8" rx="2.4" ry="1.3" fill="#a8e880" transform="rotate(-38 31.7 186.8)"/><ellipse cx="32.7" cy="191.2" rx="2.4" ry="1.3" fill="#3c9a24" transform="rotate(46 32.7 191.2)"/><ellipse cx="34.2" cy="195.6" rx="2.4" ry="1.3" fill="#c0f090" transform="rotate(31 34.2 195.6)"/><ellipse cx="25.5" cy="200.0" rx="2.4" ry="1.3" fill="#3c9a24" transform="rotate(53 25.5 200.0)"/><ellipse cx="27.1" cy="204.4" rx="2.4" ry="1.3" fill="#3c9a24" transform="rotate(-22 27.1 204.4)"/><ellipse cx="17.3" cy="208.8" rx="2.4" ry="1.3" fill="#5ab832" transform="rotate(42 17.3 208.8)"/><ellipse cx="16.9" cy="213.2" rx="2.4" ry="1.3" fill="#a8e880" transform="rotate(-57 16.9 213.2)"/><ellipse cx="14.4" cy="217.6" rx="2.4" ry="1.3" fill="#5ab832" transform="rotate(67 14.4 217.6)"/><ellipse cx="12.9" cy="222.0" rx="2.4" ry="1.3" fill="#a8e880" transform="rotate(-64 12.9 222.0)"/><ellipse cx="11.1" cy="226.4" rx="2.4" ry="1.3" fill="#5ab832" transform="rotate(26 11.1 226.4)"/><ellipse cx="11.2" cy="230.8" rx="2.4" ry="1.3" fill="#a8e880" transform="rotate(18 11.2 230.8)"/><ellipse cx="16.8" cy="235.2" rx="2.4" ry="1.3" fill="#c0f090" transform="rotate(-39 16.8 235.2)"/><ellipse cx="9.7" cy="239.6" rx="2.4" ry="1.3" fill="#c0f090" transform="rotate(49 9.7 239.6)"/><ellipse cx="14.8" cy="244.0" rx="2.4" ry="1.3" fill="#a8e880" transform="rotate(-49 14.8 244.0)"/><ellipse cx="10.4" cy="248.4" rx="2.4" ry="1.3" fill="#a8e880" transform="rotate(-3 10.4 248.4)"/><ellipse cx="15.8" cy="252.8" rx="2.4" ry="1.3" fill="#5ab832" transform="rotate(62 15.8 252.8)"/><ellipse cx="10.4" cy="257.2" rx="2.4" ry="1.3" fill="#a8e880" transform="rotate(-33 10.4 257.2)"/><ellipse cx="21.0" cy="261.6" rx="2.4" ry="1.3" fill="#3c9a24" transform="rotate(65 21.0 261.6)"/><ellipse cx="10" cy="20" rx="3.2" ry="1.9" fill="#9be070" opacity="0.9" transform="rotate(-22 10 20)"/><ellipse cx="13" cy="24" rx="2.2" ry="1.3" fill="#c8f0a0" opacity="0.8" transform="rotate(22 13 24)"/><ellipse cx="36" cy="12" rx="3.2" ry="1.9" fill="#9be070" opacity="0.9" transform="rotate(50 36 12)"/><ellipse cx="39" cy="16" rx="2.2" ry="1.3" fill="#c8f0a0" opacity="0.8" transform="rotate(-49 39 16)"/><ellipse cx="8" cy="50" rx="3.2" ry="1.9" fill="#9be070" opacity="0.9" transform="rotate(29 8 50)"/><ellipse cx="11" cy="54" rx="2.2" ry="1.3" fill="#c8f0a0" opacity="0.8" transform="rotate(48 11 54)"/><ellipse cx="40" cy="70" rx="3.2" ry="1.9" fill="#9be070" opacity="0.9" transform="rotate(-27 40 70)"/><ellipse cx="43" cy="74" rx="2.2" ry="1.3" fill="#c8f0a0" opacity="0.8" transform="rotate(6 43 74)"/><ellipse cx="12" cy="100" rx="3.2" ry="1.9" fill="#9be070" opacity="0.9" transform="rotate(-14 12 100)"/><ellipse cx="15" cy="104" rx="2.2" ry="1.3" fill="#c8f0a0" opacity="0.8" transform="rotate(56 15 104)"/><ellipse cx="38" cy="120" rx="3.2" ry="1.9" fill="#9be070" opacity="0.9" transform="rotate(-39 38 120)"/><ellipse cx="41" cy="124" rx="2.2" ry="1.3" fill="#c8f0a0" opacity="0.8" transform="rotate(-15 41 124)"/><ellipse cx="8" cy="150" rx="3.2" ry="1.9" fill="#9be070" opacity="0.9" transform="rotate(38 8 150)"/><ellipse cx="11" cy="154" rx="2.2" ry="1.3" fill="#c8f0a0" opacity="0.8" transform="rotate(-32 11 154)"/><ellipse cx="36" cy="160" rx="3.2" ry="1.9" fill="#9be070" opacity="0.9" transform="rotate(8 36 160)"/><ellipse cx="39" cy="164" rx="2.2" ry="1.3" fill="#c8f0a0" opacity="0.8" transform="rotate(9 39 164)"/><ellipse cx="10" cy="185" rx="3.2" ry="1.9" fill="#9be070" opacity="0.9" transform="rotate(39 10 185)"/><ellipse cx="13" cy="189" rx="2.2" ry="1.3" fill="#c8f0a0" opacity="0.8" transform="rotate(4 13 189)"/><ellipse cx="40" cy="195" rx="3.2" ry="1.9" fill="#9be070" opacity="0.9" transform="rotate(-18 40 195)"/><ellipse cx="43" cy="199" rx="2.2" ry="1.3" fill="#c8f0a0" opacity="0.8" transform="rotate(21 43 199)"/><ellipse cx="8" cy="225" rx="3.2" ry="1.9" fill="#9be070" opacity="0.9" transform="rotate(-32 8 225)"/><ellipse cx="11" cy="229" rx="2.2" ry="1.3" fill="#c8f0a0" opacity="0.8" transform="rotate(18 11 229)"/><ellipse cx="38" cy="255" rx="3.2" ry="1.9" fill="#9be070" opacity="0.9" transform="rotate(43 38 255)"/><ellipse cx="41" cy="259" rx="2.2" ry="1.3" fill="#c8f0a0" opacity="0.8" transform="rotate(40 41 259)"/><ellipse cx="22" cy="15" rx="3.2" ry="1.9" fill="#9be070" opacity="0.9" transform="rotate(37 22 15)"/><ellipse cx="25" cy="19" rx="2.2" ry="1.3" fill="#c8f0a0" opacity="0.8" transform="rotate(49 25 19)"/><ellipse cx="30" cy="25" rx="3.2" ry="1.9" fill="#9be070" opacity="0.9" transform="rotate(-36 30 25)"/><ellipse cx="33" cy="29" rx="2.2" ry="1.3" fill="#c8f0a0" opacity="0.8" transform="rotate(43 33 29)"/><ellipse cx="18" cy="35" rx="3.2" ry="1.9" fill="#9be070" opacity="0.9" transform="rotate(-30 18 35)"/><ellipse cx="21" cy="39" rx="2.2" ry="1.3" fill="#c8f0a0" opacity="0.8" transform="rotate(44 21 39)"/><ellipse cx="35" cy="45" rx="3.2" ry="1.9" fill="#9be070" opacity="0.9" transform="rotate(-9 35 45)"/><ellipse cx="38" cy="49" rx="2.2" ry="1.3" fill="#c8f0a0" opacity="0.8" transform="rotate(34 38 49)"/><ellipse cx="25" cy="55" rx="3.2" ry="1.9" fill="#9be070" opacity="0.9" transform="rotate(42 25 55)"/><ellipse cx="28" cy="59" rx="2.2" ry="1.3" fill="#c8f0a0" opacity="0.8" transform="rotate(-31 28 59)"/><ellipse cx="15" cy="65" rx="3.2" ry="1.9" fill="#9be070" opacity="0.9" transform="rotate(-35 15 65)"/><ellipse cx="18" cy="69" rx="2.2" ry="1.3" fill="#c8f0a0" opacity="0.8" transform="rotate(6 18 69)"/><ellipse cx="28" cy="75" rx="3.2" ry="1.9" fill="#9be070" opacity="0.9" transform="rotate(3 28 75)"/><ellipse cx="31" cy="79" rx="2.2" ry="1.3" fill="#c8f0a0" opacity="0.8" transform="rotate(-15 31 79)"/><ellipse cx="20" cy="95" rx="3.2" ry="1.9" fill="#9be070" opacity="0.9" transform="rotate(33 20 95)"/><ellipse cx="23" cy="99" rx="2.2" ry="1.3" fill="#c8f0a0" opacity="0.8" transform="rotate(-57 23 99)"/><ellipse cx="33" cy="105" rx="3.2" ry="1.9" fill="#9be070" opacity="0.9" transform="rotate(-57 33 105)"/><ellipse cx="36" cy="109" rx="2.2" ry="1.3" fill="#c8f0a0" opacity="0.8" transform="rotate(41 36 109)"/><ellipse cx="12" cy="110" rx="3.2" ry="1.9" fill="#9be070" opacity="0.9" transform="rotate(-25 12 110)"/><ellipse cx="15" cy="114" rx="2.2" ry="1.3" fill="#c8f0a0" opacity="0.8" transform="rotate(0 15 114)"/><ellipse cx="26" cy="120" rx="3.2" ry="1.9" fill="#9be070" opacity="0.9" transform="rotate(-27 26 120)"/><ellipse cx="29" cy="124" rx="2.2" ry="1.3" fill="#c8f0a0" opacity="0.8" transform="rotate(-36 29 124)"/><ellipse cx="17" cy="140" rx="3.2" ry="1.9" fill="#9be070" opacity="0.9" transform="rotate(28 17 140)"/><ellipse cx="20" cy="144" rx="2.2" ry="1.3" fill="#c8f0a0" opacity="0.8" transform="rotate(17 20 144)"/><ellipse cx="30" cy="150" rx="3.2" ry="1.9" fill="#9be070" opacity="0.9" transform="rotate(-16 30 150)"/><ellipse cx="33" cy="154" rx="2.2" ry="1.3" fill="#c8f0a0" opacity="0.8" transform="rotate(-3 33 154)"/><ellipse cx="22" cy="160" rx="3.2" ry="1.9" fill="#9be070" opacity="0.9" transform="rotate(43 22 160)"/><ellipse cx="25" cy="164" rx="2.2" ry="1.3" fill="#c8f0a0" opacity="0.8" transform="rotate(59 25 164)"/><ellipse cx="14" cy="175" rx="3.2" ry="1.9" fill="#9be070" opacity="0.9" transform="rotate(32 14 175)"/><ellipse cx="17" cy="179" rx="2.2" ry="1.3" fill="#c8f0a0" opacity="0.8" transform="rotate(-16 17 179)"/><ellipse cx="27" cy="185" rx="3.2" ry="1.9" fill="#9be070" opacity="0.9" transform="rotate(-14 27 185)"/><ellipse cx="30" cy="189" rx="2.2" ry="1.3" fill="#c8f0a0" opacity="0.8" transform="rotate(-50 30 189)"/><ellipse cx="19" cy="200" rx="3.2" ry="1.9" fill="#9be070" opacity="0.9" transform="rotate(-32 19 200)"/><ellipse cx="22" cy="204" rx="2.2" ry="1.3" fill="#c8f0a0" opacity="0.8" transform="rotate(-47 22 204)"/><ellipse cx="33" cy="215" rx="3.2" ry="1.9" fill="#9be070" opacity="0.9" transform="rotate(-31 33 215)"/><ellipse cx="36" cy="219" rx="2.2" ry="1.3" fill="#c8f0a0" opacity="0.8" transform="rotate(0 36 219)"/><ellipse cx="24" cy="225" rx="3.2" ry="1.9" fill="#9be070" opacity="0.9" transform="rotate(-35 24 225)"/><ellipse cx="27" cy="229" rx="2.2" ry="1.3" fill="#c8f0a0" opacity="0.8" transform="rotate(-17 27 229)"/><ellipse cx="15" cy="235" rx="3.2" ry="1.9" fill="#9be070" opacity="0.9" transform="rotate(-34 15 235)"/><ellipse cx="18" cy="239" rx="2.2" ry="1.3" fill="#c8f0a0" opacity="0.8" transform="rotate(1 18 239)"/><ellipse cx="29" cy="245" rx="3.2" ry="1.9" fill="#9be070" opacity="0.9" transform="rotate(19 29 245)"/><ellipse cx="32" cy="249" rx="2.2" ry="1.3" fill="#c8f0a0" opacity="0.8" transform="rotate(55 32 249)"/><ellipse cx="21" cy="258" rx="3.2" ry="1.9" fill="#9be070" opacity="0.9" transform="rotate(18 21 258)"/><ellipse cx="24" cy="262" rx="2.2" ry="1.3" fill="#c8f0a0" opacity="0.8" transform="rotate(47 24 262)"/><ellipse cx="20" cy="48" rx="3.2" ry="1.9" fill="#9be070" opacity="0.9" transform="rotate(-60 20 48)"/><ellipse cx="23" cy="52" rx="2.2" ry="1.3" fill="#c8f0a0" opacity="0.8" transform="rotate(1 23 52)"/><ellipse cx="12" cy="85" rx="3.2" ry="1.9" fill="#9be070" opacity="0.9" transform="rotate(56 12 85)"/><ellipse cx="15" cy="89" rx="2.2" ry="1.3" fill="#c8f0a0" opacity="0.8" transform="rotate(23 15 89)"/><ellipse cx="24" cy="102" rx="3.2" ry="1.9" fill="#9be070" opacity="0.9" transform="rotate(-16 24 102)"/><ellipse cx="27" cy="106" rx="2.2" ry="1.3" fill="#c8f0a0" opacity="0.8" transform="rotate(42 27 106)"/><ellipse cx="20" cy="115" rx="3.2" ry="1.9" fill="#9be070" opacity="0.9" transform="rotate(22 20 115)"/><ellipse cx="23" cy="119" rx="2.2" ry="1.3" fill="#c8f0a0" opacity="0.8" transform="rotate(-50 23 119)"/><ellipse cx="28" cy="140" rx="3.2" ry="1.9" fill="#9be070" opacity="0.9" transform="rotate(46 28 140)"/><ellipse cx="31" cy="144" rx="2.2" ry="1.3" fill="#c8f0a0" opacity="0.8" transform="rotate(24 31 144)"/><ellipse cx="12" cy="155" rx="3.2" ry="1.9" fill="#9be070" opacity="0.9" transform="rotate(-45 12 155)"/><ellipse cx="15" cy="159" rx="2.2" ry="1.3" fill="#c8f0a0" opacity="0.8" transform="rotate(56 15 159)"/><ellipse cx="24" cy="168" rx="3.2" ry="1.9" fill="#9be070" opacity="0.9" transform="rotate(-11 24 168)"/><ellipse cx="27" cy="172" rx="2.2" ry="1.3" fill="#c8f0a0" opacity="0.8" transform="rotate(40 27 172)"/><ellipse cx="10" cy="205" rx="3.2" ry="1.9" fill="#9be070" opacity="0.9" transform="rotate(31 10 205)"/><ellipse cx="13" cy="209" rx="2.2" ry="1.3" fill="#c8f0a0" opacity="0.8" transform="rotate(36 13 209)"/><ellipse cx="22" cy="230" rx="3.2" ry="1.9" fill="#9be070" opacity="0.9" transform="rotate(-35 22 230)"/><ellipse cx="25" cy="234" rx="2.2" ry="1.3" fill="#c8f0a0" opacity="0.8" transform="rotate(1 25 234)"/><ellipse cx="30" cy="255" rx="3.2" ry="1.9" fill="#9be070" opacity="0.9" transform="rotate(53 30 255)"/><ellipse cx="33" cy="259" rx="2.2" ry="1.3" fill="#c8f0a0" opacity="0.8" transform="rotate(-38 33 259)"/><circle cx="25" cy="5" r="4.4" fill="#2e7a1e" opacity="0.35"/><circle cx="24" cy="4" r="3.2" fill="#a80c18"/><circle cx="22.3" cy="4.8" r="0.9" fill="#b00c18"/><circle cx="21.8" cy="4.5" r="0.9" fill="#c8101c"/><circle cx="24.2" cy="4.3" r="1.0" fill="#b00c18"/><circle cx="24.2" cy="3.6" r="1.5" fill="#b00c18"/><circle cx="23.4" cy="3.1" r="1.3" fill="#c8101c"/><circle cx="26.4" cy="4.3" r="1.4" fill="#e01a28"/><circle cx="21.2" cy="3.5" r="1.2" fill="#c8101c"/><circle cx="24.3" cy="3.4" r="1.1" fill="#f02c34"/><circle cx="21.7" cy="4.0" r="1.1" fill="#d81420"/><circle cx="23.7" cy="4.2" r="1.5" fill="#f02c34"/><circle cx="25.5" cy="2.9" r="0.5" fill="#ffc8c8" opacity="0.75"/><circle cx="24.6" cy="2.7" r="0.5" fill="#ffc8c8" opacity="0.75"/><circle cx="25.1" cy="1.8" r="0.5" fill="#ffc8c8" opacity="0.75"/><circle cx="24.3" cy="4.3" r="0.5" fill="#ffc8c8" opacity="0.75"/><circle cx="39" cy="28" r="7.2" fill="#2e7a1e" opacity="0.35"/><circle cx="38" cy="27" r="5.2" fill="#a80c18"/><circle cx="33.8" cy="26.7" r="2.3" fill="#d81420"/><circle cx="41.9" cy="27.1" r="1.6" fill="#b00c18"/><circle cx="37.6" cy="26.6" r="1.5" fill="#d81420"/><circle cx="35.7" cy="26.5" r="2.3" fill="#d81420"/><circle cx="38.9" cy="27.3" r="1.5" fill="#e01a28"/><circle cx="35.3" cy="26.9" r="2.3" fill="#e01a28"/><circle cx="35.2" cy="28.0" r="2.0" fill="#d81420"/><circle cx="38.4" cy="28.3" r="2.0" fill="#b00c18"/><circle cx="36.8" cy="26.9" r="2.0" fill="#f02c34"/><circle cx="41.8" cy="25.0" r="1.7" fill="#b00c18"/><circle cx="38.4" cy="27.4" r="1.9" fill="#e01a28"/><circle cx="37.0" cy="25.2" r="1.7" fill="#f02c34"/><circle cx="38.9" cy="23.0" r="0.7" fill="#ffc8c8" opacity="0.75"/><circle cx="39.8" cy="29.7" r="0.7" fill="#ffc8c8" opacity="0.75"/><circle cx="37.7" cy="26.5" r="0.7" fill="#ffc8c8" opacity="0.75"/><circle cx="41.3" cy="24.0" r="0.7" fill="#ffc8c8" opacity="0.75"/><circle cx="38.8" cy="31.3" r="0.7" fill="#ffc8c8" opacity="0.75"/><circle cx="16" cy="39" r="5.0" fill="#2e7a1e" opacity="0.35"/><circle cx="15" cy="38" r="3.6" fill="#a80c18"/><circle cx="13.7" cy="39.0" r="1.8" fill="#c8101c"/><circle cx="15.8" cy="39.2" r="1.4" fill="#f02c34"/><circle cx="13.9" cy="38.6" r="1.1" fill="#f02c34"/><circle cx="16.9" cy="38.2" r="1.3" fill="#e01a28"/><circle cx="13.7" cy="39.2" r="1.2" fill="#e01a28"/><circle cx="17.4" cy="40.0" r="1.2" fill="#e01a28"/><circle cx="15.8" cy="38.5" r="1.7" fill="#c8101c"/><circle cx="14.9" cy="38.4" r="1.3" fill="#f02c34"/><circle cx="13.5" cy="39.0" r="1.4" fill="#b00c18"/><circle cx="14.9" cy="37.7" r="1.0" fill="#c8101c"/><circle cx="14.8" cy="38.1" r="0.5" fill="#ffc8c8" opacity="0.75"/><circle cx="16.9" cy="37.2" r="0.5" fill="#ffc8c8" opacity="0.75"/><circle cx="15.1" cy="37.7" r="0.5" fill="#ffc8c8" opacity="0.75"/><circle cx="15.1" cy="37.8" r="0.5" fill="#ffc8c8" opacity="0.75"/><circle cx="33" cy="58" r="12.7" fill="#2e7a1e" opacity="0.35"/><circle cx="32" cy="57" r="9.2" fill="#a80c18"/><circle cx="34.5" cy="54.0" r="3.2" fill="#d81420"/><circle cx="25.1" cy="60.9" r="3.8" fill="#e01a28"/><circle cx="30.0" cy="56.7" r="2.8" fill="#c8101c"/><circle cx="31.9" cy="58.6" r="4.5" fill="#f02c34"/><circle cx="30.3" cy="56.7" r="3.5" fill="#c8101c"/><circle cx="31.1" cy="63.9" r="4.6" fill="#e01a28"/><circle cx="38.3" cy="57.6" r="3.7" fill="#c8101c"/><circle cx="29.9" cy="56.8" r="3.5" fill="#b00c18"/><circle cx="29.4" cy="53.1" r="4.4" fill="#d81420"/><circle cx="31.3" cy="58.7" r="3.0" fill="#c8101c"/><circle cx="35.0" cy="51.7" r="3.8" fill="#b00c18"/><circle cx="40.5" cy="56.4" r="4.3" fill="#e01a28"/><circle cx="37.8" cy="59.7" r="3.1" fill="#c8101c"/><circle cx="37.4" cy="59.0" r="3.3" fill="#d81420"/><circle cx="30.8" cy="54.9" r="3.0" fill="#f02c34"/><circle cx="33.5" cy="57.4" r="3.1" fill="#e01a28"/><circle cx="31.3" cy="65.3" r="4.5" fill="#d81420"/><circle cx="31.9" cy="57.2" r="1.2" fill="#ffc8c8" opacity="0.75"/><circle cx="33.3" cy="55.8" r="1.2" fill="#ffc8c8" opacity="0.75"/><circle cx="33.1" cy="59.5" r="1.2" fill="#ffc8c8" opacity="0.75"/><circle cx="33.9" cy="58.1" r="1.2" fill="#ffc8c8" opacity="0.75"/><circle cx="30.9" cy="55.3" r="1.2" fill="#ffc8c8" opacity="0.75"/><circle cx="32.1" cy="56.3" r="1.2" fill="#ffc8c8" opacity="0.75"/><circle cx="32.5" cy="55.9" r="1.2" fill="#ffc8c8" opacity="0.75"/><circle cx="19" cy="73" r="6.6" fill="#2e7a1e" opacity="0.35"/><circle cx="18" cy="72" r="4.8" fill="#a80c18"/><circle cx="16.5" cy="71.1" r="1.6" fill="#c8101c"/><circle cx="21.7" cy="74.2" r="2.2" fill="#c8101c"/><circle cx="16.2" cy="69.3" r="2.3" fill="#b00c18"/><circle cx="18.3" cy="68.8" r="1.9" fill="#f02c34"/><circle cx="17.5" cy="69.1" r="1.4" fill="#d81420"/><circle cx="15.7" cy="69.6" r="2.2" fill="#c8101c"/><circle cx="20.9" cy="70.2" r="1.9" fill="#e01a28"/><circle cx="19.2" cy="69.7" r="2.3" fill="#c8101c"/><circle cx="18.2" cy="72.1" r="2.0" fill="#e01a28"/><circle cx="16.5" cy="73.4" r="1.4" fill="#e01a28"/><circle cx="15.9" cy="69.8" r="1.8" fill="#e01a28"/><circle cx="17.7" cy="72.1" r="2.3" fill="#d81420"/><circle cx="19.9" cy="73.2" r="0.6" fill="#ffc8c8" opacity="0.75"/><circle cx="17.9" cy="70.0" r="0.6" fill="#ffc8c8" opacity="0.75"/><circle cx="19.3" cy="68.7" r="0.6" fill="#ffc8c8" opacity="0.75"/><circle cx="18.3" cy="75.2" r="0.6" fill="#ffc8c8" opacity="0.75"/><circle cx="18.3" cy="74.7" r="0.6" fill="#ffc8c8" opacity="0.75"/><circle cx="29" cy="90" r="7.2" fill="#2e7a1e" opacity="0.35"/><circle cx="28" cy="89" r="5.2" fill="#a80c18"/><circle cx="24.0" cy="90.0" r="1.5" fill="#f02c34"/><circle cx="28.3" cy="86.0" r="2.2" fill="#e01a28"/><circle cx="26.7" cy="88.1" r="2.2" fill="#f02c34"/><circle cx="27.5" cy="88.6" r="2.0" fill="#b00c18"/><circle cx="27.6" cy="92.3" r="2.2" fill="#b00c18"/><circle cx="27.4" cy="91.4" r="2.0" fill="#b00c18"/><circle cx="28.5" cy="84.2" r="2.1" fill="#f02c34"/><circle cx="32.5" cy="88.4" r="1.5" fill="#b00c18"/><circle cx="30.2" cy="90.1" r="2.6" fill="#f02c34"/><circle cx="24.6" cy="91.9" r="2.5" fill="#e01a28"/><circle cx="27.4" cy="88.7" r="2.0" fill="#f02c34"/><circle cx="30.7" cy="92.0" r="2.0" fill="#e01a28"/><circle cx="27.7" cy="88.0" r="0.7" fill="#ffc8c8" opacity="0.75"/><circle cx="29.8" cy="87.7" r="0.7" fill="#ffc8c8" opacity="0.75"/><circle cx="28.0" cy="89.0" r="0.7" fill="#ffc8c8" opacity="0.75"/><circle cx="26.0" cy="89.1" r="0.7" fill="#ffc8c8" opacity="0.75"/><circle cx="27.8" cy="89.6" r="0.7" fill="#ffc8c8" opacity="0.75"/><circle cx="37" cy="95" r="6.1" fill="#2e7a1e" opacity="0.35"/><circle cx="36" cy="94" r="4.4" fill="#a80c18"/><circle cx="35.3" cy="95.1" r="2.0" fill="#e01a28"/><circle cx="35.4" cy="95.2" r="1.6" fill="#c8101c"/><circle cx="35.1" cy="90.4" r="1.5" fill="#f02c34"/><circle cx="37.5" cy="94.6" r="2.1" fill="#e01a28"/><circle cx="34.9" cy="95.4" r="1.5" fill="#e01a28"/><circle cx="36.0" cy="94.2" r="1.9" fill="#c8101c"/><circle cx="36.0" cy="95.1" r="1.7" fill="#c8101c"/><circle cx="36.5" cy="90.8" r="1.6" fill="#e01a28"/><circle cx="37.0" cy="91.6" r="2.1" fill="#d81420"/><circle cx="33.2" cy="93.1" r="1.3" fill="#b00c18"/><circle cx="33.0" cy="94.9" r="1.8" fill="#f02c34"/><circle cx="32.5" cy="94.3" r="0.6" fill="#ffc8c8" opacity="0.75"/><circle cx="35.4" cy="93.8" r="0.6" fill="#ffc8c8" opacity="0.75"/><circle cx="35.1" cy="94.6" r="0.6" fill="#ffc8c8" opacity="0.75"/><circle cx="35.9" cy="96.8" r="0.6" fill="#ffc8c8" opacity="0.75"/><circle cx="18" cy="133" r="11.6" fill="#2e7a1e" opacity="0.35"/><circle cx="17" cy="132" r="8.4" fill="#a80c18"/><circle cx="15.2" cy="129.4" r="2.8" fill="#b00c18"/><circle cx="14.1" cy="130.9" r="2.6" fill="#c8101c"/><circle cx="20.5" cy="133.8" r="3.8" fill="#d81420"/><circle cx="18.3" cy="139.0" r="4.2" fill="#b00c18"/><circle cx="13.1" cy="133.9" r="2.8" fill="#c8101c"/><circle cx="16.6" cy="132.6" r="2.8" fill="#f02c34"/><circle cx="17.6" cy="130.5" r="2.3" fill="#b00c18"/><circle cx="12.6" cy="135.9" r="2.7" fill="#f02c34"/><circle cx="16.7" cy="132.4" r="2.8" fill="#f02c34"/><circle cx="19.8" cy="134.8" r="3.5" fill="#c8101c"/><circle cx="22.9" cy="135.9" r="3.0" fill="#b00c18"/><circle cx="14.8" cy="133.0" r="3.8" fill="#e01a28"/><circle cx="19.3" cy="134.4" r="3.8" fill="#b00c18"/><circle cx="20.8" cy="131.2" r="2.4" fill="#d81420"/><circle cx="21.7" cy="126.0" r="2.8" fill="#e01a28"/><circle cx="17.2" cy="133.2" r="4.1" fill="#e01a28"/><circle cx="22.0" cy="130.1" r="1.1" fill="#ffc8c8" opacity="0.75"/><circle cx="13.6" cy="127.5" r="1.1" fill="#ffc8c8" opacity="0.75"/><circle cx="13.1" cy="133.1" r="1.1" fill="#ffc8c8" opacity="0.75"/><circle cx="22.6" cy="133.4" r="1.1" fill="#ffc8c8" opacity="0.75"/><circle cx="17.7" cy="138.7" r="1.1" fill="#ffc8c8" opacity="0.75"/><circle cx="15.6" cy="130.2" r="1.1" fill="#ffc8c8" opacity="0.75"/><circle cx="18.3" cy="133.3" r="1.1" fill="#ffc8c8" opacity="0.75"/><circle cx="27" cy="176" r="8.8" fill="#2e7a1e" opacity="0.35"/><circle cx="26" cy="175" r="6.4" fill="#a80c18"/><circle cx="23.3" cy="171.8" r="1.9" fill="#e01a28"/><circle cx="24.2" cy="180.4" r="2.0" fill="#f02c34"/><circle cx="26.6" cy="178.6" r="1.8" fill="#f02c34"/><circle cx="27.7" cy="175.0" r="2.2" fill="#c8101c"/><circle cx="24.6" cy="175.2" r="2.1" fill="#b00c18"/><circle cx="25.5" cy="173.2" r="1.8" fill="#b00c18"/><circle cx="28.9" cy="172.4" r="1.9" fill="#c8101c"/><circle cx="23.2" cy="170.2" r="2.1" fill="#e01a28"/><circle cx="24.6" cy="170.9" r="2.3" fill="#b00c18"/><circle cx="27.5" cy="179.5" r="2.8" fill="#d81420"/><circle cx="28.7" cy="176.2" r="2.0" fill="#c8101c"/><circle cx="26.2" cy="176.3" r="2.9" fill="#f02c34"/><circle cx="28.9" cy="177.4" r="2.6" fill="#c8101c"/><circle cx="20.6" cy="175.5" r="1.8" fill="#d81420"/><circle cx="27.3" cy="176.8" r="0.8" fill="#ffc8c8" opacity="0.75"/><circle cx="27.3" cy="180.3" r="0.8" fill="#ffc8c8" opacity="0.75"/><circle cx="26.2" cy="175.2" r="0.8" fill="#ffc8c8" opacity="0.75"/><circle cx="28.0" cy="175.8" r="0.8" fill="#ffc8c8" opacity="0.75"/><circle cx="30.0" cy="172.0" r="0.8" fill="#ffc8c8" opacity="0.75"/><circle cx="25.4" cy="169.4" r="0.8" fill="#ffc8c8" opacity="0.75"/><circle cx="17" cy="194" r="6.1" fill="#2e7a1e" opacity="0.35"/><circle cx="16" cy="193" r="4.4" fill="#a80c18"/><circle cx="17.2" cy="192.4" r="1.4" fill="#d81420"/><circle cx="16.0" cy="192.9" r="1.9" fill="#b00c18"/><circle cx="18.2" cy="189.6" r="1.6" fill="#e01a28"/><circle cx="17.2" cy="193.0" r="1.6" fill="#e01a28"/><circle cx="13.1" cy="191.8" r="1.6" fill="#f02c34"/><circle cx="16.8" cy="191.4" r="1.3" fill="#b00c18"/><circle cx="16.7" cy="195.1" r="1.7" fill="#f02c34"/><circle cx="13.6" cy="195.8" r="1.2" fill="#b00c18"/><circle cx="16.0" cy="195.6" r="1.6" fill="#b00c18"/><circle cx="16.3" cy="193.1" r="2.1" fill="#f02c34"/><circle cx="16.1" cy="193.2" r="1.8" fill="#f02c34"/><circle cx="15.5" cy="196.7" r="0.6" fill="#ffc8c8" opacity="0.75"/><circle cx="15.3" cy="192.3" r="0.6" fill="#ffc8c8" opacity="0.75"/><circle cx="15.7" cy="191.8" r="0.6" fill="#ffc8c8" opacity="0.75"/><circle cx="16.0" cy="193.0" r="0.6" fill="#ffc8c8" opacity="0.75"/><circle cx="32" cy="211" r="12.7" fill="#2e7a1e" opacity="0.35"/><circle cx="31" cy="210" r="9.2" fill="#a80c18"/><circle cx="31.3" cy="202.1" r="3.8" fill="#e01a28"/><circle cx="33.0" cy="210.3" r="3.5" fill="#b00c18"/><circle cx="34.2" cy="209.0" r="3.0" fill="#b00c18"/><circle cx="31.5" cy="208.9" r="3.6" fill="#e01a28"/><circle cx="33.1" cy="204.0" r="4.2" fill="#c8101c"/><circle cx="28.8" cy="208.2" r="3.2" fill="#f02c34"/><circle cx="32.1" cy="205.0" r="3.6" fill="#b00c18"/><circle cx="31.0" cy="207.9" r="2.7" fill="#e01a28"/><circle cx="26.3" cy="210.5" r="2.9" fill="#b00c18"/><circle cx="37.3" cy="204.3" r="3.1" fill="#e01a28"/><circle cx="31.9" cy="213.5" r="4.6" fill="#b00c18"/><circle cx="31.5" cy="211.0" r="3.5" fill="#c8101c"/><circle cx="30.9" cy="202.7" r="3.9" fill="#e01a28"/><circle cx="31.5" cy="207.5" r="3.1" fill="#f02c34"/><circle cx="26.6" cy="214.6" r="2.9" fill="#c8101c"/><circle cx="31.8" cy="211.9" r="3.1" fill="#d81420"/><circle cx="31.2" cy="210.5" r="3.1" fill="#c8101c"/><circle cx="29.1" cy="209.9" r="1.2" fill="#ffc8c8" opacity="0.75"/><circle cx="32.9" cy="205.1" r="1.2" fill="#ffc8c8" opacity="0.75"/><circle cx="31.8" cy="210.0" r="1.2" fill="#ffc8c8" opacity="0.75"/><circle cx="24.5" cy="211.0" r="1.2" fill="#ffc8c8" opacity="0.75"/><circle cx="35.0" cy="203.8" r="1.2" fill="#ffc8c8" opacity="0.75"/><circle cx="33.3" cy="210.6" r="1.2" fill="#ffc8c8" opacity="0.75"/><circle cx="32.1" cy="211.0" r="1.2" fill="#ffc8c8" opacity="0.75"/><circle cx="38" cy="242" r="7.7" fill="#2e7a1e" opacity="0.35"/><circle cx="37" cy="241" r="5.6" fill="#a80c18"/><circle cx="40.0" cy="240.5" r="2.7" fill="#f02c34"/><circle cx="36.1" cy="240.9" r="2.3" fill="#e01a28"/><circle cx="39.5" cy="242.9" r="2.3" fill="#c8101c"/><circle cx="38.7" cy="241.4" r="1.6" fill="#f02c34"/><circle cx="40.7" cy="241.9" r="2.7" fill="#e01a28"/><circle cx="37.9" cy="239.1" r="2.0" fill="#d81420"/><circle cx="36.6" cy="242.0" r="2.5" fill="#d81420"/><circle cx="34.9" cy="241.2" r="2.5" fill="#d81420"/><circle cx="38.6" cy="243.3" r="2.4" fill="#b00c18"/><circle cx="36.3" cy="239.0" r="1.9" fill="#f02c34"/><circle cx="36.8" cy="241.1" r="2.5" fill="#f02c34"/><circle cx="36.9" cy="241.0" r="2.5" fill="#f02c34"/><circle cx="35.7" cy="239.4" r="2.1" fill="#e01a28"/><circle cx="36.3" cy="241.3" r="0.7" fill="#ffc8c8" opacity="0.75"/><circle cx="37.3" cy="241.3" r="0.7" fill="#ffc8c8" opacity="0.75"/><circle cx="35.4" cy="240.2" r="0.7" fill="#ffc8c8" opacity="0.75"/><circle cx="37.1" cy="240.4" r="0.7" fill="#ffc8c8" opacity="0.75"/><circle cx="37.7" cy="241.2" r="0.7" fill="#ffc8c8" opacity="0.75"/><circle cx="24" cy="262" r="4.4" fill="#2e7a1e" opacity="0.35"/><circle cx="23" cy="261" r="3.2" fill="#a80c18"/><circle cx="23.4" cy="259.9" r="1.3" fill="#f02c34"/><circle cx="23.0" cy="260.5" r="1.1" fill="#c8101c"/><circle cx="20.2" cy="260.6" r="1.0" fill="#b00c18"/><circle cx="23.1" cy="258.6" r="1.5" fill="#f02c34"/><circle cx="25.0" cy="263.0" r="1.6" fill="#b00c18"/><circle cx="22.3" cy="262.7" r="1.3" fill="#e01a28"/><circle cx="24.5" cy="259.9" r="1.5" fill="#c8101c"/><circle cx="21.4" cy="259.0" r="1.3" fill="#d81420"/><circle cx="24.4" cy="259.0" r="1.0" fill="#c8101c"/><circle cx="25.7" cy="261.7" r="1.0" fill="#f02c34"/><circle cx="23.5" cy="261.5" r="0.5" fill="#ffc8c8" opacity="0.75"/><circle cx="22.6" cy="258.5" r="0.5" fill="#ffc8c8" opacity="0.75"/><circle cx="24.5" cy="261.4" r="0.5" fill="#ffc8c8" opacity="0.75"/><circle cx="23.0" cy="260.9" r="0.5" fill="#ffc8c8" opacity="0.75"/></svg><div class="ttl1" style="top:17.5px">ФОРМУВАННЯ ТВОРЧОЇ УЯВИ МАЙБУТНІХ  ВЧИТЕЛІВ</div><div class="ttl1" style="top:26.5px">МУЗИЧНОГО МИСТЕЦТВА У ПРОЦЕСІ ПРОФЕСІЙНОЇ</div><div class="ttl1" style="top:36.0px">ПІДГОТОВКИ ЯК ПСИХОЛОГО-ПЕДАГОГІЧНА ПРОБЛЕМА</div><div class="bl1 j" style="left:90.5px;top:56.30px;width:243.5px;">Через художній образ мистецтво дозволяє людині збагатити свій</div><div class="bl1 j" style="left:74.0px;top:65.66px;width:260.0px;">життєвий досвід, пережити ті емоції і почуття, які вона не відчувала у житті,</div><div class="bl1" style="left:74.0px;top:75.02px;width:260.0px;">розвинути більш глибоке і тонке ставлення до себе, інших людей, світу.</div><div class="bl1 j" style="left:90.5px;top:84.38px;width:243.5px;">В.Скоробогатова слушно зазначає, що «...художній образ виступає</div><div class="bl1" style="left:74.0px;top:93.74px;width:260.0px;">продуктом і підсумком <b>творчої діяльності художника</b>».</div><div class="bl1 j" style="left:90.5px;top:103.10px;width:243.5px;">Багато вчених вказують на зв'язок уяви з <b>мисленням, пізнавальними</b></div><div class="bl1" style="left:74.0px;top:112.46px;width:260.0px;"><b>процесами.</b></div><div class="bl1 j" style="left:90.5px;top:121.82px;width:243.5px;"><b>Емоційну забарвленість</b> образів уяви визначають пізнавальні процеси</div><div class="bl1" style="left:74.0px;top:131.18px;width:260.0px;">та логічне мислення.</div><div class="bl1 j" style="left:90.5px;top:140.54px;width:243.5px;">Від практичного досвіду, яким володіє особистість залежить образний</div><div class="bl1 j" style="left:74.0px;top:149.90px;width:260.0px;">світ уяви. Діяльність уяви знаходиться у прямій залежності від багатства і</div><div class="bl1" style="left:74.0px;top:159.26px;width:260.0px;">розмаїтості колишнього досвіду людини.</div><div class="bl1" style="left:90.5px;top:168.62px;width:243.5px;">Одним із засобів передачі досвіду виступає мистецтво.</div><div class="bl1 j" style="left:74.0px;top:177.98px;width:260.0px;">Навчальна діяльність майбутніх учителів музики, в якій особистість</div><div class="bl1 j" style="left:74.0px;top:187.34px;width:260.0px;">здобуває щось нове для себе, багато в чому залежить від попередньо</div><div class="bl1 j" style="left:74.0px;top:196.70px;width:260.0px;">засвоєного досвіду, знань і умінь, тому що «будь-який творчий винахід є</div><div class="bl1" style="left:74.0px;top:206.06px;width:260.0px;">комбінуванням по-новому колишніх даних».</div><div class="bl1 j" style="left:74.0px;top:215.42px;width:260.0px;">Крім характеристик, що дають чітку картину уяви і складають видиму її</div><div class="bl1 j" style="left:74.0px;top:224.78px;width:260.0px;">частину, існують функції, форми та прийоми уяви, що опосередковують ці</div><div class="bl1" style="left:74.0px;top:234.14px;width:260.0px;">характеристики.</div><div class="t" style="left:55.5px;top:249px;font-family:'Liberation Serif',serif;font-size:7.6px;color:#33333f;letter-spacing:-0.3px">10.12.2025</div><div class="a" style="left:286.0px;top:239.2px;width:22px;height:22px;border-radius:50%;background:radial-gradient(circle at 50% 40%,#8ee05a 0%,#58b830 45%,#2f8a1c 80%,#7ccf58 100%);box-shadow:0 0 2px #6c6"></div><div class="a" style="left:319.4px;top:239.2px;width:22px;height:22px;border-radius:50%;background:radial-gradient(circle at 50% 40%,#8ee05a 0%,#58b830 45%,#2f8a1c 80%,#7ccf58 100%);box-shadow:0 0 2px #6c6"></div><svg style="left:289px;top:244px" width="16" height="12"><path d="M3 6 L11 1.5 V10.5 Z" fill="#9ae070" opacity="0.7"/></svg><svg style="left:325px;top:244px" width="16" height="12"><path d="M11 6 L3 1.5 V10.5 Z" fill="#9ae070" opacity="0.7"/></svg></div></div>

<!-- notes -->
<div class="a" style="left:148px;top:421px;width:563px;height:16px;background:#ebebeb;border-top:1px solid #c8c8c8"></div>
<div class="t" style="left:153px;top:426px;font-size:6.8px;color:#777">Нотатки до слайда</div>
<!-- status -->
<div class="a" style="left:4px;top:437.5px;width:707px;height:10.5px;background:#f3f3f3"></div>
<div class="t" style="left:8px;top:441px;font-size:5px;color:#777">Слайд 11 з 20</div>
<div class="t" style="left:53px;top:441px;font-size:5px;color:#777">українська</div>
<svg style="left:475px;top:439px" width="6" height="7"><path d="M0.5 6.5 H5.5 M1 5 L3 1 L5 5" fill="none" stroke="#777" stroke-width="0.7"/></svg>
<div class="t" style="left:482px;top:440px;font-size:5px;color:#777">Нотатки</div>
<svg style="left:509px;top:439px" width="7" height="6"><path d="M0.5 0.5 H6.5 V4.5 H3 L1.5 5.8 V4.5 H0.5 Z" fill="none" stroke="#777" stroke-width="0.7"/></svg>
<div class="t" style="left:517px;top:440px;font-size:5px;color:#777">Примітки</div>
<div class="a" style="left:547px;top:437.5px;width:18px;height:10px;background:#d6d6d6"></div>
<svg style="left:552px;top:439px" width="60" height="7" fill="none" stroke="#666" stroke-width="0.7"><rect x="0.5" y="0.5" width="7" height="6"/><path d="M2.5 0.5 V6.5"/><rect x="17" y="0.5" width="7" height="6"/><path d="M17 3.5 H24 M20.5 0.5 V6.5"/><rect x="36" y="0.5" width="6" height="6"/><path d="M37.5 2 H40.5 M37.5 4 H40.5"/><path d="M52 0.5 H59 M55.5 0.5 V6.5 M53 6.5 H58 M53 0.5 V4 H58 V0.5"/></svg>
<div class="a" style="left:622px;top:442px;width:60px;height:0.8px;background:#aaa"></div>
<div class="t" style="left:618px;top:439.5px;font-size:5px;color:#888">-</div>
<div class="a" style="left:646px;top:439.5px;width:2px;height:5.5px;background:#666"></div>
<div class="t" style="left:683px;top:439.5px;font-size:5px;color:#888">+</div>
<div class="t" style="left:690px;top:440px;font-size:4.8px;color:#888">50%</div>
<svg style="left:702px;top:438.5px" width="8" height="8"><path d="M4 0.5 L7.5 4 L4 7.5 L0.5 4 Z" fill="none" stroke="#777" stroke-width="0.7"/></svg>
<!-- taskbar -->
<div class="a" style="left:4px;top:448px;width:707px;height:22px;background:linear-gradient(90deg,#dce5f2 0%,#e8edf6 40%,#e6ebf6 70%,#dde5f3 100%)"></div>
<svg style="left:13px;top:455px" width="12" height="8"><path d="M3 7.5 H10 Q12 7.5 12 5.5 Q12 3.5 10 3.5 Q9.5 0.5 6.5 0.5 Q4 0.5 3.5 3 Q0.5 3 0.5 5.2 Q0.5 7.5 3 7.5 Z" fill="#c8d8ec" stroke="#7aa0cc" stroke-width="0.7"/></svg>
<div class="t" style="left:29px;top:452.5px;font-size:5px;color:#333">7°C</div>
<div class="t" style="left:28px;top:459.5px;font-size:5px;color:#555">Cloudy</div>
<svg style="left:210px;top:453px" width="12" height="12"><rect x="0" y="0" width="5.6" height="5.6" fill="#1a8ad8"/><rect x="6.4" y="0" width="5.6" height="5.6" fill="#1a8ad8"/><rect x="0" y="6.4" width="5.6" height="5.6" fill="#1a8ad8"/><rect x="6.4" y="6.4" width="5.6" height="5.6" fill="#1a8ad8"/></svg>
<div class="a" style="left:228px;top:452px;width:98px;height:14px;background:#f9fafc;border-radius:7px"></div>
<svg style="left:233px;top:455px" width="8" height="8"><circle cx="3.3" cy="3.3" r="2.5" fill="none" stroke="#333" stroke-width="1"/><path d="M5 5 L7.3 7.3" stroke="#333" stroke-width="1.1"/></svg>
<div class="t" style="left:243px;top:456px;font-size:5.5px;color:#666">Пошук</div>
<svg style="left:320px;top:448px" width="400" height="22">
<rect x="151.4" y="0" width="17" height="21" rx="2" fill="#f2f4f8"/>
<rect x="13" y="8" width="8.5" height="7.5" fill="#1c1c1c"/><rect x="15.5" y="8" width="6" height="5" fill="#e8e8e8"/>
<rect x="33" y="7.5" width="11" height="9" rx="1" fill="#1a5a9a"/><rect x="36" y="10" width="2.5" height="2.5" fill="#f25022"/><rect x="39" y="10" width="2.5" height="2.5" fill="#7fba00"/><rect x="36" y="13" width="2.5" height="2.5" fill="#00a4ef"/><rect x="39" y="13" width="2.5" height="2.5" fill="#ffb900"/>
<path d="M53 9 h4 l1.5 1.5 H64.5 V17 H53 Z" fill="#f6c23a"/><rect x="53" y="13" width="11.5" height="3" fill="#2a7ad0"/>
<circle cx="79" cy="12" r="6" fill="#1e90d8"/><path d="M74 13 Q76 7 82 8 Q85 10 84 12 Q80 11 78 13 Q78 16 83 16 Q76 19 74 13Z" fill="#4cd46a"/>
<circle cx="97" cy="10" r="2" fill="#7a7ad8"/><circle cx="102" cy="10.5" r="1.6" fill="#9a9ae8"/><path d="M93 13 h7 v4 Q96.5 19 93 17 Z" fill="#5b5fc7"/><path d="M100.5 13 h4 v3 Q102 18 100.5 16Z" fill="#7b83eb"/>
<circle cx="119" cy="12" r="5.3" fill="#2aa3df"/><path d="M116 12 L122 9.5 L120.5 15 L119 13 Z" fill="#fff"/>
<circle cx="140" cy="12" r="5.8" fill="#e85aa0"/><path d="M134.5 12 Q136 6 141 6.5 L139 12Z" fill="#40b0f0"/><path d="M140 17.8 Q146 17 145.8 12 L140 12Z" fill="#f6b030"/><path d="M136 15 Q138 18 140 17.8 L140 12Z" fill="#6ac850"/>
<circle cx="159.7" cy="11.5" r="5.5" fill="#d2432a"/><path d="M159.7 6 A5.5 5.5 0 0 1 165.2 11.5 H159.7Z" fill="#ff8a6a"/><rect x="156" y="18.4" width="7" height="1.3" rx="0.6" fill="#3a3a3a"/>
<circle cx="179.7" cy="11.8" r="5.8" fill="#2d6ee6"/><rect x="176" y="10.8" width="5" height="2.2" rx="0.5" fill="#fff"/><path d="M181.5 11 L183.5 10 V13.6 L181.5 12.6Z" fill="#fff"/><rect x="178.5" y="18.5" width="2.5" height="1" fill="#888"/>
<path d="M255 12.5 L257.4 10.2 L259.8 12.5" fill="none" stroke="#333" stroke-width="0.9"/>
<path d="M268 12 Q272 8 276 12 Q272 16 268 12 Z" fill="none" stroke="#333" stroke-width="0.9"/><path d="M267.5 15.5 L276.5 7.5" stroke="#333" stroke-width="0.9"/>
<circle cx="284" cy="9.5" r="1.8" fill="none" stroke="#3a6aaa" stroke-width="0.8"/><path d="M285 14 L289 11.5 M286 15 h3" stroke="#3a4a6a" stroke-width="0.8"/>
<text x="299" y="14" font-size="5" fill="#444" font-family="Liberation Sans">УКР</text>
<path d="M318 10 Q321.7 7 325.4 10 L321.7 14.5Z" fill="none" stroke="#444" stroke-width="0.8"/>
<path d="M328.5 14 V10.5 H330 L332 9 V15.5 L330 14 Z" fill="#333"/><path d="M333.5 10.5 V13.5" stroke="#555" stroke-width="0.6"/>
<path d="M340 9.5 H347 V14.5 H340 Z M347 11 h1 v2 h-1" fill="#222"/><path d="M338 11.5 l2 0" stroke="#222" stroke-width="0.8"/>
</svg>
<div class="t" style="left:688px;top:452.5px;font-size:5px;color:#333">12:31</div>
<div class="t" style="left:675.5px;top:460px;font-size:5px;color:#333">10.12.2025</div>

<!-- ============ VIDEO TILES ============ -->
<!-- tile 1 -->
<div class="a" style="left:733px;top:76px;width:138px;height:77px;border-radius:3px;overflow:hidden;background:linear-gradient(90deg,#8e929b 0%,#9a9ea8 35%,#aeb2ba 70%,#c4c8cf 100%)">
  <div class="a" style="left:44px;top:5px;width:74px;height:82px;border-radius:50% 50% 25% 25%;background:radial-gradient(ellipse at 50% 35%,#9a6a4e 0%,#7a4c36 50%,#5e3c2c 80%,rgba(94,60,44,0) 100%)"></div>
  <div class="a" style="left:61px;top:20px;width:42px;height:54px;border-radius:45% 45% 40% 40%;background:radial-gradient(ellipse at 50% 55%,#dcb4a4 0%,#cc9e8c 55%,#b4806c 100%)"></div>
  <div class="a" style="left:56px;top:9px;width:52px;height:18px;border-radius:26px 26px 8px 8px;background:linear-gradient(180deg,#a87858,#8e5e44)"></div>
  <div class="a" style="left:74px;top:60px;width:18px;height:3px;border-radius:2px;background:#a87068"></div>
  <div class="a" style="left:0;top:73px;width:138px;height:4px;background:linear-gradient(90deg,#dcdde0,#ecebe8 50%,#a08064 75%,#e0dcd6)"></div>
</div>
<div class="a" style="left:735px;top:139px;width:110px;height:13px;background:rgba(40,40,40,0.75);border-radius:3px"></div>
<div class="t nm" style="left:737.4px;top:142.3px">Тетяна Стратан-Артишкова</div>
<!-- tile 2 -->
<div class="a" style="left:914px;top:88px;width:53px;height:54px;border-radius:5px;overflow:hidden;background:radial-gradient(circle at 20% 20%,#7a9a6a 0 4px,transparent 5px),radial-gradient(circle at 80% 30%,#8aa870 0 5px,transparent 6px),radial-gradient(circle at 60% 10%,#6a8a5a 0 4px,transparent 5px),linear-gradient(180deg,#3e5a34 0%,#4a6a3e 50%,#506a40 100%)">
  <div class="a" style="left:14px;top:6px;width:26px;height:36px;border-radius:45% 45% 30% 30%;background:radial-gradient(ellipse at 50% 40%,#d8b890,#b89868 70%,rgba(184,152,104,0) 100%)"></div>
  <div class="a" style="left:20px;top:11px;width:14px;height:18px;border-radius:45%;background:radial-gradient(ellipse at 50% 45%,#f0d0c0,#d8b0a0)"></div>
  <div class="a" style="left:3px;top:30px;width:14px;height:24px;background:#d8dcf0;border-radius:4px 4px 0 0"></div>
  <div class="a" style="left:10px;top:28px;width:36px;height:26px;border-radius:10px 10px 0 0;background:linear-gradient(180deg,#e080b0,#d868a0)"></div>
  <div class="a" style="left:20px;top:36px;width:33px;height:18px;background:radial-gradient(circle at 30% 50%,#e82838 0 4px,transparent 5px),radial-gradient(circle at 70% 40%,#f04050 0 5px,transparent 6px),radial-gradient(circle at 55% 85%,#c81828 0 5px,transparent 6px),radial-gradient(circle at 90% 80%,#e8a0b0 0 4px,transparent 5px),#d83048"></div>
</div>
<div class="a" style="left:873px;top:140px;width:70px;height:12px;background:rgba(40,40,40,0.7);border-radius:3px"></div>
<svg style="left:875.5px;top:142.0px" width="9" height="9"><rect x="3" y="0.5" width="3" height="5" rx="1.5" fill="#e03048"/><path d="M1.5 4 Q1.5 7 4.5 7 Q7.5 7 7.5 4 M4.5 7 V8.8" stroke="#d02a40" stroke-width="1" fill="none"/><path d="M0.8 8.5 L8 1" stroke="#e03048" stroke-width="1.1"/></svg>
<div class="t nm" style="left:888px;top:142.3px">Тетяна Січкар</div>
<!-- tile 3 -->
<div class="a" style="left:733px;top:154px;width:138px;height:77px;border-radius:3px;overflow:hidden;background:linear-gradient(90deg,#c6b8a2 0%,#d2c2a6 40%,#dccbae 70%,#d6c4a6 100%)">
  <div class="a" style="left:0;top:0;width:78px;height:24px;background:linear-gradient(180deg,#e6e6e8,#f2f2f2);clip-path:polygon(0 0,100% 0,82% 100%,0 100%)"></div>
  <div class="a" style="left:8px;top:3px;width:10px;height:16px;border-radius:40%;background:radial-gradient(ellipse,#f4e8c8,#c8b090 70%,rgba(200,176,144,0))"></div>
  <div class="a" style="left:0;top:34px;width:7px;height:26px;background:#8a8c90"></div>
  <div class="a" style="left:17px;top:26px;width:40px;height:51px;background:linear-gradient(90deg,#8a5a3a 0 3px,#6a2822 3px 37px,#8a5a3a 37px)"></div>
  <div class="a" style="left:85px;top:0;width:7px;height:46px;background:linear-gradient(90deg,#c8a060,#e0c080,#b89050)"></div>
  <div class="a" style="left:107px;top:1px;width:20px;height:35px;border:2.5px solid #7a5a3a;background:#c8c0b0;transform:rotate(-6deg)"></div>
  <div class="a" style="left:42px;top:21px;width:70px;height:62px;border-radius:45% 45% 30% 30%;background:radial-gradient(ellipse at 50% 45%,#a8603e 0%,#8e4c30 55%,#7a4430 85%,rgba(122,68,48,0) 100%)"></div>
  <div class="a" style="left:57px;top:40px;width:40px;height:42px;border-radius:45%;background:radial-gradient(ellipse at 50% 40%,#e4b8a0,#c88c76)"></div>
  <div class="a" style="left:60px;top:50px;width:34px;height:6px;border:1.2px solid #6a3a3a;border-radius:3px;background:rgba(230,230,240,0.25)"></div>
  <div class="a" style="left:75px;top:61px;width:27px;height:16px;background:#eae4de;border-radius:6px 6px 0 0"></div>
</div>
<div class="a" style="left:735px;top:217px;width:56px;height:13px;background:rgba(40,40,40,0.7);border-radius:3px"></div>
<div class="t nm" style="left:736.6px;top:220.7px">Елена Бузова</div>
<!-- tile 4 -->
<div class="a" style="left:873px;top:154px;width:136px;height:77px;border-radius:3px;background:#222225"></div>
<div class="a" style="left:919px;top:154px;width:43px;height:77px;overflow:hidden;background:linear-gradient(180deg,#d2aed0 0%,#cba6c8 60%,#c4a0bc 100%)">
  <div class="a" style="left:8px;top:36px;width:28px;height:42px;border-radius:45% 45% 20% 20%;background:radial-gradient(ellipse at 50% 40%,#9a7a66,#7a5a4a 70%,rgba(122,90,74,0.3) 100%)"></div>
  <div class="a" style="left:13px;top:41px;width:17px;height:22px;border-radius:45%;background:radial-gradient(ellipse at 50% 45%,#dcb8a8,#c09888)"></div>
  <div class="a" style="left:3px;top:60px;width:38px;height:18px;border-radius:10px 10px 0 0;background:linear-gradient(180deg,#ece8e0,#dcd6cc)"></div>
</div>
<div class="a" style="left:873px;top:217px;width:81px;height:13px;background:rgba(40,40,40,0.7);border-radius:3px"></div>
<svg style="left:875.5px;top:219.0px" width="9" height="9"><rect x="3" y="0.5" width="3" height="5" rx="1.5" fill="#e03048"/><path d="M1.5 4 Q1.5 7 4.5 7 Q7.5 7 7.5 4 M4.5 7 V8.8" stroke="#d02a40" stroke-width="1" fill="none"/><path d="M0.8 8.5 L8 1" stroke="#e03048" stroke-width="1.1"/></svg>
<div class="t nm" style="left:888px;top:220.8px">Тетяна Черненко</div>
<!-- tile 5 -->
<div class="a" style="left:733px;top:232px;width:138px;height:78px;background:#1d1e20;border:1.5px solid #3fd58a;border-radius:2px;overflow:hidden">
  <div class="a" style="left:16px;top:0;width:105px;height:76px;overflow:hidden;background:linear-gradient(90deg,#b57a56 0%,#8e5a3e 25%,#3a3634 50%,#5a3a2a 72%,#b8653a 82%,#8a4a2a 92%,#4a3a30 100%)">
    <div class="a" style="left:22px;top:-8px;width:40px;height:32px;border-radius:40%;background:radial-gradient(ellipse at 50% 50%,#cfa88e,#a88068)"></div>
    <div class="a" style="left:0;top:22px;width:85px;height:56px;border-radius:30px 30px 0 0;background:linear-gradient(180deg,#2e3032,#404446 60%,#3a3d3e)"></div>
  </div>
</div>
<div class="t nm" style="left:737px;top:299px">Наталя Андреєва</div>
<!-- tile 6 -->
<div class="a" style="left:873px;top:232px;width:136px;height:78px;border-radius:3px;background:#222225"></div>
<div class="a" style="left:888px;top:232px;width:105px;height:78px;overflow:hidden;background:radial-gradient(ellipse at 35% 55%,#f4efe8 0%,#e6ded2 50%,#d2c8ba 100%)">
  <div class="a" style="left:54px;top:53px;width:26px;height:30px;border-radius:45%;background:radial-gradient(ellipse at 50% 45%,#c9a488,#a27a5e 60%,#8a6a50)"></div>
  <div class="a" style="left:60px;top:64px;width:50px;height:16px;background:linear-gradient(90deg,#6a5040,#4a3a30)"></div>
</div>
<div class="a" style="left:873px;top:296px;width:77px;height:13px;background:rgba(40,40,40,0.7);border-radius:3px"></div>
<svg style="left:875.5px;top:298.0px" width="9" height="9"><rect x="3" y="0.5" width="3" height="5" rx="1.5" fill="#e03048"/><path d="M1.5 4 Q1.5 7 4.5 7 Q7.5 7 7.5 4 M4.5 7 V8.8" stroke="#d02a40" stroke-width="1" fill="none"/><path d="M0.8 8.5 L8 1" stroke="#e03048" stroke-width="1.1"/></svg>
<div class="t nm" style="left:888px;top:298.7px">Інна Стенгецька</div>
<!-- tile 7 -->
<div class="a" style="left:733px;top:311px;width:138px;height:77px;border-radius:3px;overflow:hidden;background:linear-gradient(180deg,#dcdcda 0%,#cfcfcd 40%,#c8c6c2 100%)">
  <div class="a" style="left:0;top:8px;width:16px;height:52px;background:repeating-linear-gradient(0deg,#3e3e38 0 4px,#8a8a7a 4px 5px),#444"></div>
  <div class="a" style="left:0;top:30px;width:16px;height:18px;background:#3a4a66;opacity:0.7"></div>
  <div class="a" style="left:22px;top:30px;width:32px;height:47px;background:#2c4638"></div>
  <div class="a" style="left:48px;top:0;width:20px;height:34px;background:#2e2e2e"></div>
  <div class="a" style="left:96px;top:12px;width:8px;height:22px;background:#8a8070;transform:rotate(20deg)"></div>
  <div class="a" style="left:112px;top:0;width:26px;height:77px;background:linear-gradient(90deg,#cdc9c4,#d8d4ce)"></div>
  <div class="a" style="left:50px;top:26px;width:60px;height:58px;border-radius:45%;background:radial-gradient(ellipse at 50% 45%,#4a3026 0%,#2e201c 60%,rgba(40,28,24,0.6) 90%,rgba(40,28,24,0) 100%)"></div>
  <div class="a" style="left:65px;top:37px;width:32px;height:42px;border-radius:45%;background:radial-gradient(ellipse at 50% 40%,#ecd0c2,#cca090)"></div>
  <div class="a" style="left:67px;top:47px;width:28px;height:4px;border-top:1px solid #5a4a44;border-radius:2px"></div>
  <div class="a" style="left:117px;top:53px;width:9px;height:10px;background:#9a2a3a"></div>
</div>
<div class="a" style="left:735px;top:375px;width:94px;height:12px;background:rgba(40,40,40,0.7);border-radius:3px"></div>
<svg style="left:737.5px;top:376.0px" width="9" height="9"><rect x="3" y="0.5" width="3" height="5" rx="1.5" fill="#e03048"/><path d="M1.5 4 Q1.5 7 4.5 7 Q7.5 7 7.5 4 M4.5 7 V8.8" stroke="#d02a40" stroke-width="1" fill="none"/><path d="M0.8 8.5 L8 1" stroke="#e03048" stroke-width="1.1"/></svg>
<div class="t nm" style="left:749px;top:377.3px">Яна Пономаренко</div>
<!-- tile 8 -->
<div class="a" style="left:914px;top:322px;width:53px;height:52px;border-radius:5px;overflow:hidden;background:linear-gradient(90deg,#c0a08e 0%,#d0b8a8 25%,#e0dcd6 45%,#ecebe8 100%)">
  <div class="a" style="left:0;top:32px;width:11px;height:20px;background:#4a5060"></div>
  <div class="a" style="left:10px;top:-4px;width:40px;height:60px;border-radius:45% 45% 30% 30%;background:radial-gradient(ellipse at 55% 40%,#f4eedc 0%,#e6dcc2 55%,#d8ccb0 80%,rgba(216,204,176,0) 100%)"></div>
  <div class="a" style="left:18px;top:6px;width:28px;height:34px;border-radius:45% 45% 40% 40%;background:radial-gradient(ellipse at 50% 45%,#f0d4c4,#dcb4a0)"></div>
  <div class="a" style="left:19px;top:14px;width:12px;height:6px;border:1.4px solid #2e2626;border-radius:2px"></div>
  <div class="a" style="left:32px;top:14px;width:12px;height:6px;border:1.4px solid #2e2626;border-radius:2px"></div>
  <div class="a" style="left:27px;top:30px;width:10px;height:2px;border-radius:1px;background:#c88a80"></div>
  <div class="a" style="left:12px;top:47px;width:41px;height:6px;background:linear-gradient(90deg,#e0dccc,#f0eee8)"></div>
</div>
<div class="a" style="left:873px;top:375px;width:90px;height:12px;background:rgba(40,40,40,0.7);border-radius:3px"></div>
<svg style="left:875.5px;top:376.0px" width="9" height="9"><rect x="3" y="0.5" width="3" height="5" rx="1.5" fill="#e03048"/><path d="M1.5 4 Q1.5 7 4.5 7 Q7.5 7 7.5 4 M4.5 7 V8.8" stroke="#d02a40" stroke-width="1" fill="none"/><path d="M0.8 8.5 L8 1" stroke="#e03048" stroke-width="1.1"/></svg>
<div class="t nm" style="left:888px;top:377px">Victoriia Hryhorieva</div>
<!-- tile 9 -->
<div class="a" style="left:845px;top:401px;width:53px;height:53px;border-radius:5px;overflow:hidden;background:linear-gradient(180deg,#8a9a7a 0%,#7c9a5a 40%,#a6a840 70%,#c8a830 100%)">
  <div class="a" style="left:16px;top:3px;width:20px;height:30px;border-radius:45%;background:#3a2420"></div>
  <div class="a" style="left:20px;top:8px;width:13px;height:18px;border-radius:45%;background:radial-gradient(ellipse,#e8c8b8,#c8a090)"></div>
  <div class="a" style="left:9px;top:25px;width:36px;height:30px;border-radius:12px 12px 0 0;background:radial-gradient(circle at 30% 40%,#707888 0 2px,transparent 3px),radial-gradient(circle at 70% 60%,#707888 0 2px,transparent 3px),radial-gradient(circle at 50% 80%,#8088a0 0 2px,transparent 3px),radial-gradient(ellipse at 50% 50%,#dce0e8,#b0b8c4)"></div>
</div>
<div class="a" style="left:804px;top:451px;width:75px;height:13px;background:rgba(40,40,40,0.7);border-radius:3px"></div>
<svg style="left:806.5px;top:453.0px" width="9" height="9"><rect x="3" y="0.5" width="3" height="5" rx="1.5" fill="#e03048"/><path d="M1.5 4 Q1.5 7 4.5 7 Q7.5 7 7.5 4 M4.5 7 V8.8" stroke="#d02a40" stroke-width="1" fill="none"/><path d="M0.8 8.5 L8 1" stroke="#e03048" stroke-width="1.1"/></svg>
<div class="t nm" style="left:818.6px;top:455.6px">Аліна Шатохіна</div>

<!-- ============ BOTTOM TOOLBAR ============ -->
<div id="bot" class="a"></div>
<!-- Звук -->
<svg style="left:27px;top:511px" width="18" height="18"><rect x="6.5" y="1" width="5" height="9" rx="2.5" stroke="#ddd" stroke-width="1.3" fill="none"/><path d="M4 7.5 Q4 12.5 9 12.5 Q14 12.5 14 7.5 M9 12.5 V16" stroke="#ddd" stroke-width="1.3" fill="none"/><path d="M2 16 L16 2" stroke="#e02a3c" stroke-width="1.6"/></svg>
<div class="car" style="left:54px"></div>
<div class="bl" style="left:-44.5px">Звук</div>
<!-- Видео -->
<svg style="left:87px;top:512px" width="20" height="16"><rect x="1" y="3" width="11.5" height="10" rx="1.5" stroke="#ddd" stroke-width="1.3" fill="none"/><path d="M12.5 7 L18 3.8 V12.2 L12.5 9" stroke="#ddd" stroke-width="1.3" fill="none"/><path d="M2 15 L16 1" stroke="#e02a3c" stroke-width="1.6"/></svg>
<div class="car" style="left:119px"></div>
<div class="bl" style="left:17.0px">Видео</div>
<!-- Участники -->
<svg style="left:259px;top:512px" width="16" height="15"><circle cx="5" cy="3.5" r="2.6" stroke="#ddd" stroke-width="1.3" fill="none"/><circle cx="11" cy="6.5" r="2.3" stroke="#ddd" stroke-width="1.3" fill="none"/><path d="M1 14 V11.5 Q1 8.5 5 8.5 Q7 8.5 8 9.3" stroke="#ddd" stroke-width="1.3" fill="none"/><rect x="7" y="10" width="8" height="4.5" rx="2.2" stroke="#ddd" stroke-width="1.3" fill="none"/></svg>
<div class="t" style="left:277px;top:513px;font-size:7px;color:#aaa;font-weight:bold">9</div>
<div class="car" style="left:300px"></div>
<div class="bl" style="left:186.5px">Участники</div>
<!-- Чат -->
<svg style="left:330px;top:511px" width="18" height="18"><path d="M5 3.5 Q5 1.2 7.5 1.2 H14 Q16.5 1.2 16.5 3.5 V8.5 Q16.5 10.8 14 10.8" stroke="#ddd" stroke-width="1.2" fill="none"/><path d="M3.5 4.5 H11 Q13.5 4.5 13.5 7 V11.5 Q13.5 14 11 14 H6 L2.5 16.5 V14 Q1.2 13.5 1.2 11.5 V7 Q1.2 4.5 3.5 4.5 Z" stroke="#ddd" stroke-width="1.2" fill="none"/><circle cx="4.8" cy="9.3" r="0.8" fill="#ddd"/><circle cx="7.4" cy="9.3" r="0.8" fill="#ddd"/><circle cx="10" cy="9.3" r="0.8" fill="#ddd"/></svg>
<div class="car" style="left:360px"></div>
<div class="bl" style="left:260.2px">Чат</div>
<!-- Отреагировать -->
<svg style="left:395px;top:512px" width="18" height="16"><path d="M9 14.5 L2.5 8.5 Q0.5 6.3 1.5 3.8 Q2.7 1 5.5 1 Q7.6 1 9 3 Q10.4 1 12.5 1 Q15.3 1 16.5 3.8 Q17.5 6.3 15.5 8.5 Z" stroke="#ddd" stroke-width="1.3" fill="none"/></svg>
<div class="car" style="left:427px"></div>
<div class="bl" style="left:323.7px">Отреагировать</div>
<!-- Поделиться -->
<div class="a" style="left:462px;top:513px;width:16px;height:13px;background:#21c45d;border-radius:2px"></div>
<svg style="left:465px;top:515px" width="10" height="9"><path d="M5 8.5 V1.5 M1.8 4.5 L5 1.3 L8.2 4.5" stroke="#062" stroke-width="1.8" fill="none"/></svg>
<div class="bl" style="left:390.0px">Поделиться</div>
<!-- AI Companion -->
<svg style="left:524px;top:510px" width="20" height="19"><path d="M9 3 Q10 9 16 10 Q10 11 9 17 Q8 11 2 10 Q8 9 9 3 Z" fill="#cfeef5" stroke="#a9dcea" stroke-width="0.6"/><path d="M15.5 0.5 Q16 2.5 18 3 Q16 3.5 15.5 5.5 Q15 3.5 13 3 Q15 2.5 15.5 0.5 Z" fill="#dff4f8"/></svg>
<div class="bl" style="left:454.2px">AI Companion</div>
<!-- Информация -->
<svg style="left:618px;top:511px" width="18" height="18"><circle cx="9" cy="9" r="7.7" stroke="#ddd" stroke-width="1.4" fill="none"/><circle cx="9" cy="5.3" r="1.1" fill="#ddd"/><path d="M7.3 7.8 H9.4 V12.8 M7.2 12.9 H11" stroke="#ddd" stroke-width="1.4" fill="none"/></svg>
<div class="bl" style="left:546.9px">Информация о конференции</div>
<!-- Приложения -->
<svg style="left:710px;top:511px" width="17" height="17"><path d="M1 5 V3 Q1 1 3 1 H5 M1 12 V14 Q1 16 3 16 H5 M12 16 H14 Q16 16 16 14 V12" stroke="#ddd" stroke-width="1.3" fill="none"/><circle cx="12.5" cy="4.5" r="2.6" stroke="#ddd" stroke-width="1.3" fill="none"/><circle cx="4.5" cy="12.3" r="2.3" stroke="#ddd" stroke-width="1.3" fill="none"/></svg>
<div class="bl" style="left:638.0px">Приложения</div>
<!-- Запись -->
<svg style="left:765px;top:511px" width="18" height="18"><circle cx="9" cy="9" r="7.7" stroke="#ddd" stroke-width="1.4" fill="none"/><circle cx="9" cy="9" r="3.6" fill="#f0f0f0"/></svg>
<div class="bl" style="left:694.0px">Запись</div>
<!-- Дополнительно -->
<svg style="left:828px;top:511px" width="18" height="18"><circle cx="9" cy="9" r="7.7" stroke="#ddd" stroke-width="1.4" fill="none"/><circle cx="5.5" cy="9" r="1.1" fill="#ddd"/><circle cx="9" cy="9" r="1.1" fill="#ddd"/><circle cx="12.5" cy="9" r="1.1" fill="#ddd"/></svg>
<div class="bl" style="left:756.0px">Дополнительно</div>
<!-- Выйти -->
<svg style="left:984px;top:511px" width="18" height="18"><rect x="10" y="1" width="6" height="15" fill="none" stroke="#e0243a" stroke-width="1.6"/><circle cx="7" cy="3" r="1.8" stroke="#ddd" stroke-width="1.1" fill="none"/><path d="M6 6 L4 11 L1.5 16 M5 11 L8 13 L8.5 17 M6 6 L9 8 L11 7 M5.5 7 L2.5 9" stroke="#ddd" stroke-width="1.2" fill="none"/></svg>
<div class="bl" style="left:912.0px">Выйти</div>

</body></html>
